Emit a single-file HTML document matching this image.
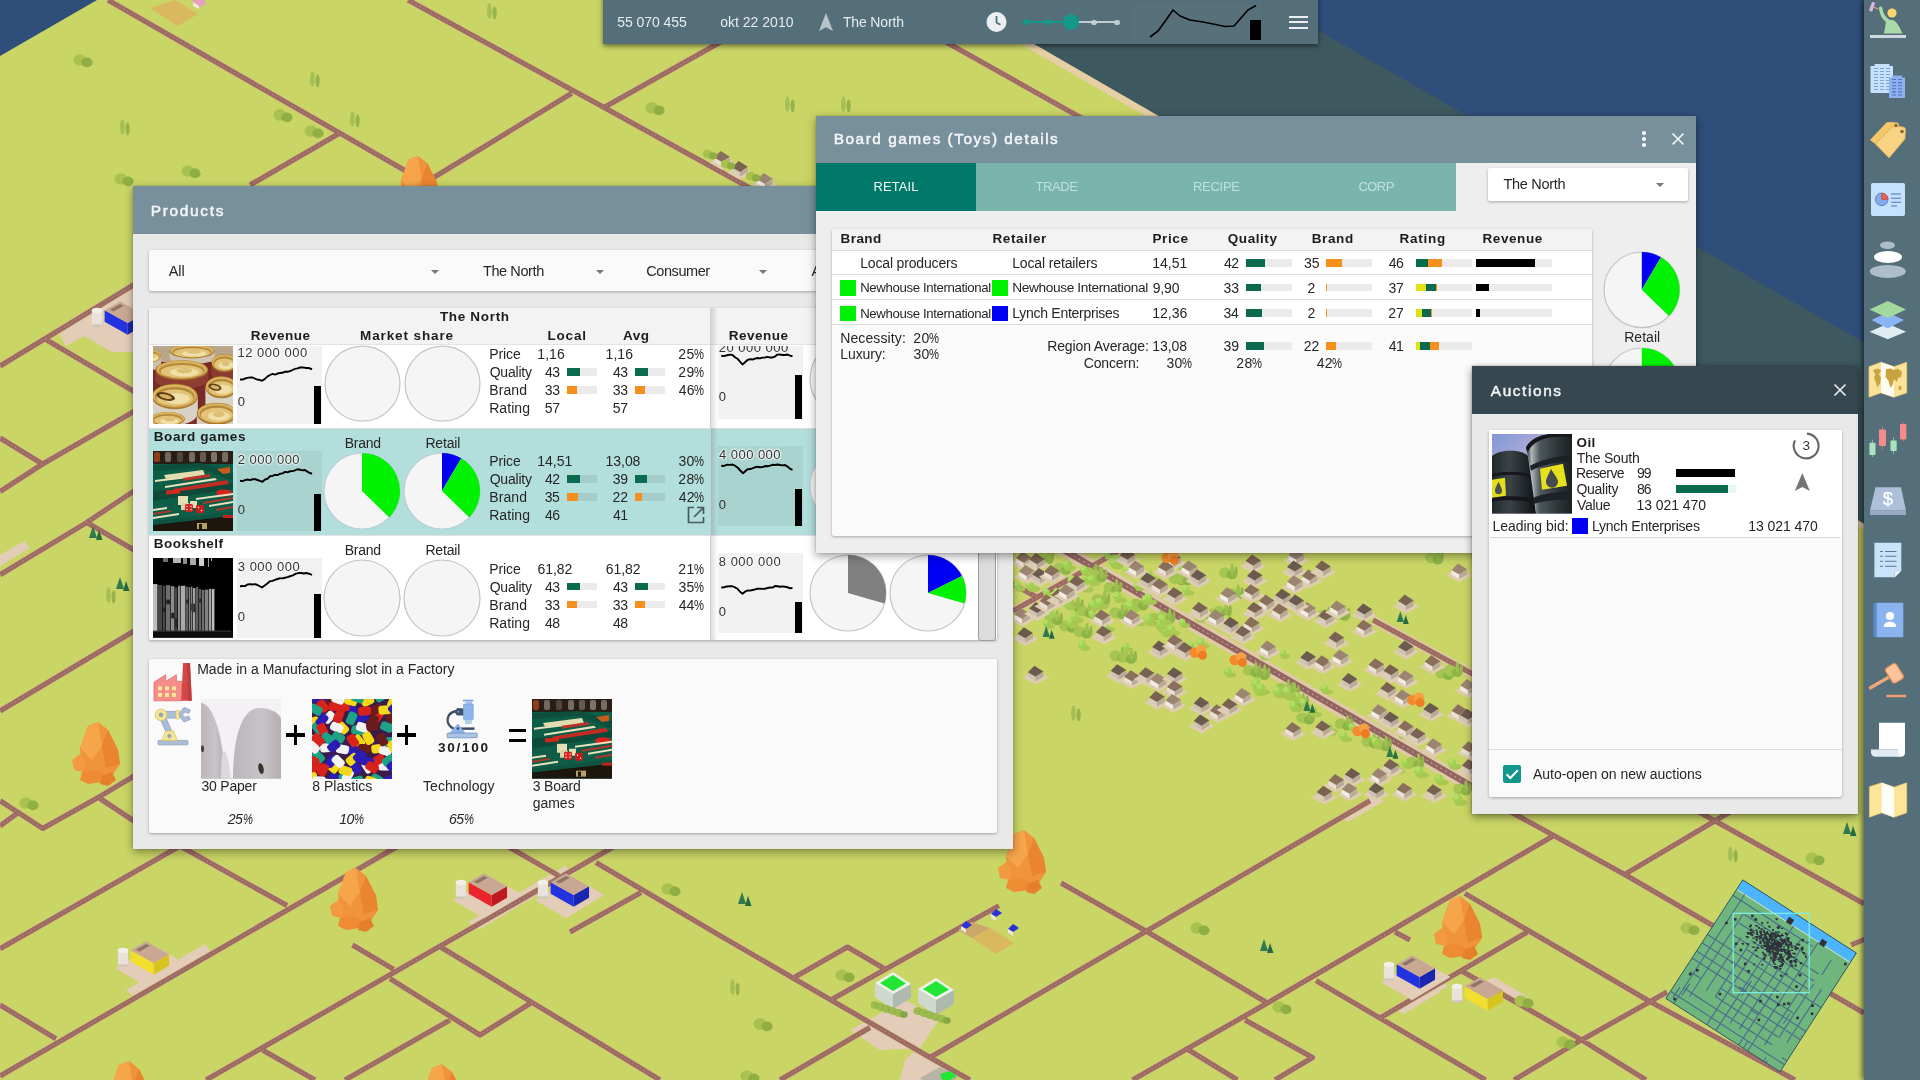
<!DOCTYPE html>
<html><head><meta charset="utf-8"><title>Products</title>
<style>
html,body{margin:0;padding:0;width:1920px;height:1080px;overflow:hidden;background:#c9d565;font-family:"Liberation Sans",sans-serif}
.r{position:absolute;display:block}
.t{position:absolute;white-space:nowrap;display:block}
.win{position:absolute;box-shadow:0 3px 9px rgba(0,0,0,.38),0 0 2px rgba(0,0,0,.2)}
.card{position:absolute;background:#fafafa;box-shadow:0 1px 3px rgba(0,0,0,.3);border-radius:2px}
</style></head><body>
<svg id="map" width="1920" height="1080" viewBox="0 0 1920 1080" style="position:absolute;left:0;top:0">
<rect width="1920" height="1080" fill="#c9d565"/>
<polygon points="0,0 97,0 0,56" fill="#304e7a"/>
<polygon points="944,0 1920,0 1920,562 1895,548" fill="#e6cfa3"/>
<polygon points="958,0 1920,0 1920,556 " fill="#3e5860"/>
<polygon points="1265,0 1920,0 1920,374.4" fill="#304e7a"/>
<polygon points="56,328 140,279 140,352 112,352 84,336 66,346" fill="#e3cdb9"/>
<polygon points="0,555 24,541 30,548 0,566" fill="#e3cdb9"/>
<polygon points="126,990 205,944 212,954 136,998" fill="#e3cdb9"/>
<polygon points="468,922 565,866 575,873 480,929" fill="#e3cdb9"/>
<polygon points="850,1030 905,1000 940,1018 920,1048 880,1050" fill="#e3cdb9"/>
<polygon points="915,1050 960,1075 950,1080 900,1080 905,1060" fill="#e3cdb9"/>
<polygon points="1392,1008 1440,980 1440,992 1404,1014" fill="#e3cdb9"/>
<polygon points="1400,1003 1440,980 1448,986 1408,1010" fill="#e3cdb9"/>
<polygon points="1484,982 1494,977 1528,997 1518,1003" fill="#e3cdb9"/>
<polygon points="1338,816 1374,795 1384,801 1348,822" fill="#e3cdb9"/>
<polyline points="1055,545 1480,791" fill="none" stroke="#dfc9a8" stroke-width="13"/>
<polyline points="1373,620 1480,678" fill="none" stroke="#dfc9a8" stroke-width="9"/>
<polyline points="1013,611 1125,547" fill="none" stroke="#dfc9a8" stroke-width="8"/>
<path d="M108 0 L425 182 L440 191 M250 185 L340 133 M408 0 L605 108 L750 188 M426.7 181.7 L571.7 93.3 M603 108 L716.7 44.3 L795 0 M870 0 L950 44.3 L1085 120 M0 366 L140 281 M45 339 L140 395 M0 438 L42.6 464 L140 408 M0 491.6 L42.6 464 M0 574.8 L85 523.6 L140 487 M85 521.5 L140 553.5 M0 711 L140 627.5 M0 800.7 L42.6 828.4 L100 796.4 L140 772.5 M100 798.5 L140 825 M0 826 L17 813.5 M0 948.7 L180 846 M0 1076 L400 845 M180 846 L287 905.6 M0 1005 L56 1038.7 M206 1080 L615 846 M352.5 945 L393.7 969.4 M390 978.7 L480 1035 L532.5 1002 M440.6 947 L660 1080 M262.5 1050 L315 1080 M345 1080 L450 1020 M507 846 L558.7 875.6 M596 862.5 L720 935.6 L930 1057.5 L970 1080 M570 932 L641 892.5 M795 977 L847.5 947 L885 969 M832.5 999 L999 905.6 M780 1080 L870 1027.5 M930 1057.5 L1370 800.7 M1061 883 L1147.5 932 L1267.5 1003 M1132.5 1080 L1267.5 1003 L1553 836 M1316 980.6 L1485.6 1080 M1188.7 1050 L1237.5 1080 M1245 1020 L1312.5 1057.5 L1275 1080 M1380 1018 L1527 932.3 M1395 932 L1410 940 M1500 806 L1625.6 875 L1711 924.5 L1864 1013 M1464.8 893.4 L1527 929.7 L1649 1001 L1780 1071.8 L1795 1080 M1462.2 971.2 L1581.5 1039.9 L1646 1080 M1514 1080 L1581.5 1039.9 L1649 1002.3 L1667 992 M1625.6 873.9 L1735 809 M1690 807 L1864 903.7 M1851 945 L1870 937 M1013 611 L1089 568 L1125 547 M1005 580 L1038.5 598 M1373 620 L1480 678" fill="none" stroke="#d8c58a" stroke-width="6.8" stroke-linejoin="round" opacity=".7"/>
<path d="M108 0 L425 182 L440 191 M250 185 L340 133 M408 0 L605 108 L750 188 M426.7 181.7 L571.7 93.3 M603 108 L716.7 44.3 L795 0 M870 0 L950 44.3 L1085 120 M0 366 L140 281 M45 339 L140 395 M0 438 L42.6 464 L140 408 M0 491.6 L42.6 464 M0 574.8 L85 523.6 L140 487 M85 521.5 L140 553.5 M0 711 L140 627.5 M0 800.7 L42.6 828.4 L100 796.4 L140 772.5 M100 798.5 L140 825 M0 826 L17 813.5 M0 948.7 L180 846 M0 1076 L400 845 M180 846 L287 905.6 M0 1005 L56 1038.7 M206 1080 L615 846 M352.5 945 L393.7 969.4 M390 978.7 L480 1035 L532.5 1002 M440.6 947 L660 1080 M262.5 1050 L315 1080 M345 1080 L450 1020 M507 846 L558.7 875.6 M596 862.5 L720 935.6 L930 1057.5 L970 1080 M570 932 L641 892.5 M795 977 L847.5 947 L885 969 M832.5 999 L999 905.6 M780 1080 L870 1027.5 M930 1057.5 L1370 800.7 M1061 883 L1147.5 932 L1267.5 1003 M1132.5 1080 L1267.5 1003 L1553 836 M1316 980.6 L1485.6 1080 M1188.7 1050 L1237.5 1080 M1245 1020 L1312.5 1057.5 L1275 1080 M1380 1018 L1527 932.3 M1395 932 L1410 940 M1500 806 L1625.6 875 L1711 924.5 L1864 1013 M1464.8 893.4 L1527 929.7 L1649 1001 L1780 1071.8 L1795 1080 M1462.2 971.2 L1581.5 1039.9 L1646 1080 M1514 1080 L1581.5 1039.9 L1649 1002.3 L1667 992 M1625.6 873.9 L1735 809 M1690 807 L1864 903.7 M1851 945 L1870 937 M1013 611 L1089 568 L1125 547 M1005 580 L1038.5 598 M1373 620 L1480 678" fill="none" stroke="#9e6b62" stroke-width="5.1" stroke-linejoin="round"/>
<path d="M108 0 L425 182 L440 191 M250 185 L340 133 M408 0 L605 108 L750 188 M426.7 181.7 L571.7 93.3 M603 108 L716.7 44.3 L795 0 M870 0 L950 44.3 L1085 120 M0 366 L140 281 M45 339 L140 395 M0 438 L42.6 464 L140 408 M0 491.6 L42.6 464 M0 574.8 L85 523.6 L140 487 M85 521.5 L140 553.5 M0 711 L140 627.5 M0 800.7 L42.6 828.4 L100 796.4 L140 772.5 M100 798.5 L140 825 M0 826 L17 813.5 M0 948.7 L180 846 M0 1076 L400 845 M180 846 L287 905.6 M0 1005 L56 1038.7 M206 1080 L615 846 M352.5 945 L393.7 969.4 M390 978.7 L480 1035 L532.5 1002 M440.6 947 L660 1080 M262.5 1050 L315 1080 M345 1080 L450 1020 M507 846 L558.7 875.6 M596 862.5 L720 935.6 L930 1057.5 L970 1080 M570 932 L641 892.5 M795 977 L847.5 947 L885 969 M832.5 999 L999 905.6 M780 1080 L870 1027.5 M930 1057.5 L1370 800.7 M1061 883 L1147.5 932 L1267.5 1003 M1132.5 1080 L1267.5 1003 L1553 836 M1316 980.6 L1485.6 1080 M1188.7 1050 L1237.5 1080 M1245 1020 L1312.5 1057.5 L1275 1080 M1380 1018 L1527 932.3 M1395 932 L1410 940 M1500 806 L1625.6 875 L1711 924.5 L1864 1013 M1464.8 893.4 L1527 929.7 L1649 1001 L1780 1071.8 L1795 1080 M1462.2 971.2 L1581.5 1039.9 L1646 1080 M1514 1080 L1581.5 1039.9 L1649 1002.3 L1667 992 M1625.6 873.9 L1735 809 M1690 807 L1864 903.7 M1851 945 L1870 937 M1013 611 L1089 568 L1125 547 M1005 580 L1038.5 598 M1373 620 L1480 678" fill="none" stroke="#c9a59c" stroke-width="0.8" stroke-dasharray="1.2 3.2" opacity=".8"/>
<path d="M1055 545 L1480 791" fill="none" stroke="#936460" stroke-width="6.2"/>
<path d="M1055 545 L1480 791" fill="none" stroke="#e6d6cf" stroke-width="0.8" stroke-dasharray="1.5 4"/>
<polygon points="88,726 98,722 108,730 118,750 120,764 112,776 94,780 82,770 80,748" fill="#f0933a"/><polygon points="88,726 98,722 102,746 92,760 80,748" fill="#f7a54b"/><polygon points="102,746 108,730 118,750 120,764 106,768" fill="#e9842f"/><polygon points="72,760 80,754 86,762 84,772 74,770" fill="#f3993f"/><polygon points="82,772 94,770 104,774 102,782 88,784 80,780" fill="#ee8b33"/><polygon points="102,776 112,772 116,780 108,786 100,784" fill="#e57f2b"/>
<polygon points="408.4,159.5 417.9,155.7 427.4,163.3 436.9,182.3 438.8,195.6 431.2,207 414.1,210.8 402.7,201.3 400.8,180.4" fill="#f0933a"/><polygon points="408.4,159.5 417.9,155.7 421.7,178.5 412.2,191.8 400.8,180.4" fill="#f7a54b"/><polygon points="421.7,178.5 427.4,163.3 436.9,182.3 438.8,195.6 425.5,199.4" fill="#e9842f"/><polygon points="393.2,191.8 400.8,186.1 406.5,193.7 404.6,203.2 395.1,201.3" fill="#f3993f"/><polygon points="402.7,203.2 414.1,201.3 423.6,205.1 421.7,212.7 408.4,214.6 400.8,210.8" fill="#ee8b33"/><polygon points="421.7,207 431.2,203.2 435,210.8 427.4,216.5 419.8,214.6" fill="#e57f2b"/>
<polygon points="346,872 356,868 366,876 376,896 378,910 370,922 352,926 340,916 338,894" fill="#f0933a"/><polygon points="346,872 356,868 360,892 350,906 338,894" fill="#f7a54b"/><polygon points="360,892 366,876 376,896 378,910 364,914" fill="#e9842f"/><polygon points="330,906 338,900 344,908 342,918 332,916" fill="#f3993f"/><polygon points="340,918 352,916 362,920 360,928 346,930 338,926" fill="#ee8b33"/><polygon points="360,922 370,918 374,926 366,932 358,930" fill="#e57f2b"/>
<polygon points="119,1065 129,1061 139,1069 149,1089 151,1103 143,1115 125,1119 113,1109 111,1087" fill="#f0933a"/><polygon points="119,1065 129,1061 133,1085 123,1099 111,1087" fill="#f7a54b"/><polygon points="133,1085 139,1069 149,1089 151,1103 137,1107" fill="#e9842f"/><polygon points="103,1099 111,1093 117,1101 115,1111 105,1109" fill="#f3993f"/><polygon points="113,1111 125,1109 135,1113 133,1121 119,1123 111,1119" fill="#ee8b33"/><polygon points="133,1115 143,1111 147,1119 139,1125 131,1123" fill="#e57f2b"/>
<polygon points="432,1068 442,1064 452,1072 462,1092 464,1106 456,1118 438,1122 426,1112 424,1090" fill="#f0933a"/><polygon points="432,1068 442,1064 446,1088 436,1102 424,1090" fill="#f7a54b"/><polygon points="446,1088 452,1072 462,1092 464,1106 450,1110" fill="#e9842f"/><polygon points="416,1102 424,1096 430,1104 428,1114 418,1112" fill="#f3993f"/><polygon points="426,1114 438,1112 448,1116 446,1124 432,1126 424,1122" fill="#ee8b33"/><polygon points="446,1118 456,1114 460,1122 452,1128 444,1126" fill="#e57f2b"/>
<polygon points="1014,834 1024,830 1034,838 1044,858 1046,872 1038,884 1020,888 1008,878 1006,856" fill="#f0933a"/><polygon points="1014,834 1024,830 1028,854 1018,868 1006,856" fill="#f7a54b"/><polygon points="1028,854 1034,838 1044,858 1046,872 1032,876" fill="#e9842f"/><polygon points="998,868 1006,862 1012,870 1010,880 1000,878" fill="#f3993f"/><polygon points="1008,880 1020,878 1030,882 1028,890 1014,892 1006,888" fill="#ee8b33"/><polygon points="1028,884 1038,880 1042,888 1034,894 1026,892" fill="#e57f2b"/>
<polygon points="1450,900 1460,896 1470,904 1480,924 1482,938 1474,950 1456,954 1444,944 1442,922" fill="#f0933a"/><polygon points="1450,900 1460,896 1464,920 1454,934 1442,922" fill="#f7a54b"/><polygon points="1464,920 1470,904 1480,924 1482,938 1468,942" fill="#e9842f"/><polygon points="1434,934 1442,928 1448,936 1446,946 1436,944" fill="#f3993f"/><polygon points="1444,946 1456,944 1466,948 1464,956 1450,958 1442,954" fill="#ee8b33"/><polygon points="1464,950 1474,946 1478,954 1470,960 1462,958" fill="#e57f2b"/>
<polygon points="1904.8,931 1913.8,927.4 1922.8,934.6 1931.8,952.6 1933.6,965.2 1926.4,976 1910.2,979.6 1899.4,970.6 1897.6,950.8" fill="#f0933a"/><polygon points="1904.8,931 1913.8,927.4 1917.4,949 1908.4,961.6 1897.6,950.8" fill="#f7a54b"/><polygon points="1917.4,949 1922.8,934.6 1931.8,952.6 1933.6,965.2 1921,968.8" fill="#e9842f"/><polygon points="1890.4,961.6 1897.6,956.2 1903,963.4 1901.2,972.4 1892.2,970.6" fill="#f3993f"/><polygon points="1899.4,972.4 1910.2,970.6 1919.2,974.2 1917.4,981.4 1904.8,983.2 1897.6,979.6" fill="#ee8b33"/><polygon points="1917.4,976 1926.4,972.4 1930,979.6 1922.8,985 1915.6,983.2" fill="#e57f2b"/>
<ellipse cx="25.8" cy="803" rx="6.4" ry="5.8" fill="#a9c14f"/><ellipse cx="33" cy="805.4" rx="5.6" ry="4.8" fill="#8fae44"/>
<ellipse cx="79.8" cy="60" rx="6.4" ry="5.8" fill="#a9c14f"/><ellipse cx="87" cy="62.4" rx="5.6" ry="4.8" fill="#8fae44"/>
<ellipse cx="120.8" cy="179" rx="6.4" ry="5.8" fill="#a9c14f"/><ellipse cx="128" cy="181.4" rx="5.6" ry="4.8" fill="#8fae44"/>
<ellipse cx="187.8" cy="171" rx="6.4" ry="5.8" fill="#a9c14f"/><ellipse cx="195" cy="173.4" rx="5.6" ry="4.8" fill="#8fae44"/>
<ellipse cx="279.8" cy="115" rx="6.4" ry="5.8" fill="#a9c14f"/><ellipse cx="287" cy="117.4" rx="5.6" ry="4.8" fill="#8fae44"/>
<ellipse cx="310.8" cy="131" rx="6.4" ry="5.8" fill="#a9c14f"/><ellipse cx="318" cy="133.4" rx="5.6" ry="4.8" fill="#8fae44"/>
<ellipse cx="651.8" cy="108" rx="6.4" ry="5.8" fill="#a9c14f"/><ellipse cx="659" cy="110.4" rx="5.6" ry="4.8" fill="#8fae44"/>
<ellipse cx="667.8" cy="889" rx="6.4" ry="5.8" fill="#a9c14f"/><ellipse cx="675" cy="891.4" rx="5.6" ry="4.8" fill="#8fae44"/>
<ellipse cx="841.8" cy="975" rx="6.4" ry="5.8" fill="#a9c14f"/><ellipse cx="849" cy="977.4" rx="5.6" ry="4.8" fill="#8fae44"/>
<ellipse cx="759.8" cy="1024" rx="6.4" ry="5.8" fill="#a9c14f"/><ellipse cx="767" cy="1026.4" rx="5.6" ry="4.8" fill="#8fae44"/>
<ellipse cx="746.8" cy="1076" rx="6.4" ry="5.8" fill="#a9c14f"/><ellipse cx="754" cy="1078.4" rx="5.6" ry="4.8" fill="#8fae44"/>
<ellipse cx="1196.8" cy="928" rx="6.4" ry="5.8" fill="#a9c14f"/><ellipse cx="1204" cy="930.4" rx="5.6" ry="4.8" fill="#8fae44"/>
<ellipse cx="1278.8" cy="1007" rx="6.4" ry="5.8" fill="#a9c14f"/><ellipse cx="1286" cy="1009.4" rx="5.6" ry="4.8" fill="#8fae44"/>
<ellipse cx="1520.8" cy="1001" rx="6.4" ry="5.8" fill="#a9c14f"/><ellipse cx="1528" cy="1003.4" rx="5.6" ry="4.8" fill="#8fae44"/>
<ellipse cx="1562.8" cy="1042" rx="6.4" ry="5.8" fill="#a9c14f"/><ellipse cx="1570" cy="1044.4" rx="5.6" ry="4.8" fill="#8fae44"/>
<ellipse cx="1686.8" cy="928" rx="6.4" ry="5.8" fill="#a9c14f"/><ellipse cx="1694" cy="930.4" rx="5.6" ry="4.8" fill="#8fae44"/>
<ellipse cx="1811.8" cy="858" rx="6.4" ry="5.8" fill="#a9c14f"/><ellipse cx="1819" cy="860.4" rx="5.6" ry="4.8" fill="#8fae44"/>
<ellipse cx="122.4" cy="127" rx="2.3" ry="7.8" fill="#a4bf55"/><ellipse cx="127.6" cy="129" rx="2.1" ry="6.5" fill="#96b34c"/>
<ellipse cx="312.4" cy="79" rx="2.3" ry="7.8" fill="#a4bf55"/><ellipse cx="317.6" cy="81" rx="2.1" ry="6.5" fill="#96b34c"/>
<ellipse cx="352.4" cy="119" rx="2.3" ry="7.8" fill="#a4bf55"/><ellipse cx="357.6" cy="121" rx="2.1" ry="6.5" fill="#96b34c"/>
<ellipse cx="489.4" cy="11" rx="2.3" ry="7.8" fill="#a4bf55"/><ellipse cx="494.6" cy="13" rx="2.1" ry="6.5" fill="#96b34c"/>
<ellipse cx="787.4" cy="104" rx="2.3" ry="7.8" fill="#a4bf55"/><ellipse cx="792.6" cy="106" rx="2.1" ry="6.5" fill="#96b34c"/>
<ellipse cx="843.4" cy="104" rx="2.3" ry="7.8" fill="#a4bf55"/><ellipse cx="848.6" cy="106" rx="2.1" ry="6.5" fill="#96b34c"/>
<ellipse cx="732.4" cy="987" rx="2.3" ry="7.8" fill="#a4bf55"/><ellipse cx="737.6" cy="989" rx="2.1" ry="6.5" fill="#96b34c"/>
<ellipse cx="108.4" cy="595" rx="2.3" ry="7.8" fill="#a4bf55"/><ellipse cx="113.6" cy="597" rx="2.1" ry="6.5" fill="#96b34c"/>
<ellipse cx="1730.4" cy="854" rx="2.3" ry="7.8" fill="#a4bf55"/><ellipse cx="1735.6" cy="856" rx="2.1" ry="6.5" fill="#96b34c"/>
<ellipse cx="1073.4" cy="713" rx="2.3" ry="7.8" fill="#a4bf55"/><ellipse cx="1078.6" cy="715" rx="2.1" ry="6.5" fill="#96b34c"/>
<polygon points="93,526 89,538 97,538" fill="#2f7a4f"/><polygon points="99,530 96,540 102.5,540" fill="#266a44"/>
<polygon points="120,577 116,589 124,589" fill="#2f7a4f"/><polygon points="126,581 123,591 129.5,591" fill="#266a44"/>
<polygon points="742,892 738,904 746,904" fill="#2f7a4f"/><polygon points="748,896 745,906 751.5,906" fill="#266a44"/>
<polygon points="1264,939 1260,951 1268,951" fill="#2f7a4f"/><polygon points="1270,943 1267,953 1273.5,953" fill="#266a44"/>
<polygon points="1847,822 1843,834 1851,834" fill="#2f7a4f"/><polygon points="1853,826 1850,836 1856.5,836" fill="#266a44"/>
<polygon points="150,8 175,0 198,14 178,26" fill="#d9b860"/>
<polygon points="192,0 204,0 206,4 198,8" fill="#e7a0c0"/><polygon points="193,2 199,6 199,9 193,6" fill="#f3e9dc"/>
<polygon points="972,938 990,928 1014,943 996,954" fill="#d9b860"/>
<polygon points="958,930 972,922 990,928 972,938" fill="#c9a86a"/>
<polygon points="961,926 966,921 972,925 966,929" fill="#2a32d6"/><polygon points="961,926 966,929 966,933 961,930" fill="#efe6da"/>
<polygon points="991,914 996,909 1002,913 996,917" fill="#2a32d6"/><polygon points="991,914 996,917 996,921 991,918" fill="#efe6da"/>
<polygon points="1008,929 1013,924 1019,928 1013,932" fill="#2a32d6"/><polygon points="1008,929 1013,932 1013,936 1008,933" fill="#efe6da"/>
<g transform="translate(120 318) scale(1.28) translate(-120 -318)"><ellipse cx="102" cy="323" rx="4" ry="2" fill="#cfc6bb"/><rect x="98" y="312" width="8" height="11" fill="#e8e2da"/><ellipse cx="102" cy="312" rx="4" ry="2" fill="#f3efe9"/><polygon points="108,312 126,322 126,331 108,321" fill="#2433e0"/><polygon points="126,322 138,315 138,324 126,331" fill="#1a26b0"/><polygon points="108,312 120,305 138,315 126,322" fill="#c9a893"/><polygon points="112,311.5 120,307 123,308.5 115,313" fill="#8d7568"/></g>
<g transform="translate(146 958) scale(1.28) translate(-146 -958)"><polygon points="122,966 152,948 176,962 146,980" fill="#e3cdb9"/><ellipse cx="128" cy="963" rx="4" ry="2" fill="#cfc6bb"/><rect x="124" y="952" width="8" height="11" fill="#e8e2da"/><ellipse cx="128" cy="952" rx="4" ry="2" fill="#f3efe9"/><polygon points="134,952 152,962 152,971 134,961" fill="#f2de2f"/><polygon points="152,962 164,955 164,964 152,971" fill="#d8c420"/><polygon points="134,952 146,945 164,955 152,962" fill="#c9a893"/><polygon points="138,951.5 146,947 149,948.5 141,953" fill="#8d7568"/></g>
<g transform="translate(484 890) scale(1.28) translate(-484 -890)"><polygon points="460,898 490,880 514,894 484,912" fill="#e3cdb9"/><ellipse cx="466" cy="895" rx="4" ry="2" fill="#cfc6bb"/><rect x="462" y="884" width="8" height="11" fill="#e8e2da"/><ellipse cx="466" cy="884" rx="4" ry="2" fill="#f3efe9"/><polygon points="472,884 490,894 490,903 472,893" fill="#e8262c"/><polygon points="490,894 502,887 502,896 490,903" fill="#c01a20"/><polygon points="472,884 484,877 502,887 490,894" fill="#c9a893"/><polygon points="476,883.5 484,879 487,880.5 479,885" fill="#8d7568"/></g>
<g transform="translate(566 890) scale(1.28) translate(-566 -890)"><polygon points="542,898 572,880 596,894 566,912" fill="#e3cdb9"/><ellipse cx="548" cy="895" rx="4" ry="2" fill="#cfc6bb"/><rect x="544" y="884" width="8" height="11" fill="#e8e2da"/><ellipse cx="548" cy="884" rx="4" ry="2" fill="#f3efe9"/><polygon points="554,884 572,894 572,903 554,893" fill="#2433e0"/><polygon points="572,894 584,887 584,896 572,903" fill="#1a26b0"/><polygon points="554,884 566,877 584,887 572,894" fill="#c9a893"/><polygon points="558,883.5 566,879 569,880.5 561,885" fill="#8d7568"/></g>
<g transform="translate(1412 972) scale(1.28) translate(-1412 -972)"><polygon points="1388,980 1418,962 1442,976 1412,994" fill="#e3cdb9"/><ellipse cx="1394" cy="977" rx="4" ry="2" fill="#cfc6bb"/><rect x="1390" y="966" width="8" height="11" fill="#e8e2da"/><ellipse cx="1394" cy="966" rx="4" ry="2" fill="#f3efe9"/><polygon points="1400,966 1418,976 1418,985 1400,975" fill="#2433e0"/><polygon points="1418,976 1430,969 1430,978 1418,985" fill="#1a26b0"/><polygon points="1400,966 1412,959 1430,969 1418,976" fill="#c9a893"/><polygon points="1404,965.5 1412,961 1415,962.5 1407,967" fill="#8d7568"/></g>
<g transform="translate(1480 994) scale(1.28) translate(-1480 -994)"><ellipse cx="1462" cy="999" rx="4" ry="2" fill="#cfc6bb"/><rect x="1458" y="988" width="8" height="11" fill="#e8e2da"/><ellipse cx="1462" cy="988" rx="4" ry="2" fill="#f3efe9"/><polygon points="1468,988 1486,998 1486,1007 1468,997" fill="#f2de2f"/><polygon points="1486,998 1498,991 1498,1000 1486,1007" fill="#d8c420"/><polygon points="1468,988 1480,981 1498,991 1486,998" fill="#c9a893"/><polygon points="1472,987.5 1480,983 1483,984.5 1475,989" fill="#8d7568"/></g>
<polygon points="875,983 893,994 893,1009 875,997" fill="#cfd8cf"/>
<polygon points="893,994 911,984 911,998 893,1009" fill="#aeb9b0"/>
<polygon points="875,983 893,972 911,984 893,994" fill="#eef2ec"/>
<polygon points="880,983 893,975 906,983.5 893,991" fill="#22e534"/>
<ellipse cx="874.8" cy="1005" rx="4.4" ry="4" fill="#9dbb4f"/><ellipse cx="879.8" cy="1006.6" rx="3.9" ry="3.3" fill="#86a643"/>
<ellipse cx="880.8" cy="1007" rx="4.4" ry="4" fill="#9dbb4f"/><ellipse cx="885.8" cy="1008.6" rx="3.9" ry="3.3" fill="#86a643"/>
<ellipse cx="886.8" cy="1009" rx="4.4" ry="4" fill="#9dbb4f"/><ellipse cx="891.8" cy="1010.6" rx="3.9" ry="3.3" fill="#86a643"/>
<ellipse cx="892.8" cy="1011" rx="4.4" ry="4" fill="#9dbb4f"/><ellipse cx="897.8" cy="1012.6" rx="3.9" ry="3.3" fill="#86a643"/>
<ellipse cx="898.8" cy="1013" rx="4.4" ry="4" fill="#9dbb4f"/><ellipse cx="903.8" cy="1014.6" rx="3.9" ry="3.3" fill="#86a643"/>
<polygon points="918,989 936,1000 936,1015 918,1003" fill="#cfd8cf"/>
<polygon points="936,1000 954,990 954,1004 936,1015" fill="#aeb9b0"/>
<polygon points="918,989 936,978 954,990 936,1000" fill="#eef2ec"/>
<polygon points="923,989 936,981 949,989.5 936,997" fill="#22e534"/>
<ellipse cx="917.8" cy="1011" rx="4.4" ry="4" fill="#9dbb4f"/><ellipse cx="922.8" cy="1012.6" rx="3.9" ry="3.3" fill="#86a643"/>
<ellipse cx="923.8" cy="1013" rx="4.4" ry="4" fill="#9dbb4f"/><ellipse cx="928.8" cy="1014.6" rx="3.9" ry="3.3" fill="#86a643"/>
<ellipse cx="929.8" cy="1015" rx="4.4" ry="4" fill="#9dbb4f"/><ellipse cx="934.8" cy="1016.6" rx="3.9" ry="3.3" fill="#86a643"/>
<ellipse cx="935.8" cy="1017" rx="4.4" ry="4" fill="#9dbb4f"/><ellipse cx="940.8" cy="1018.6" rx="3.9" ry="3.3" fill="#86a643"/>
<ellipse cx="941.8" cy="1019" rx="4.4" ry="4" fill="#9dbb4f"/><ellipse cx="946.8" cy="1020.6" rx="3.9" ry="3.3" fill="#86a643"/>
<polygon points="920,1078 940,1067 958,1076 955,1080 922,1080" fill="#b9b3a6"/><polygon points="940,1074 950,1071 957,1076 950,1080 942,1080" fill="#22e534"/>
<ellipse cx="1071.1" cy="605.2" rx="6" ry="5.4" fill="#a4c552"/><ellipse cx="1077.8" cy="607.4" rx="5.2" ry="4.5" fill="#8db446"/>
<ellipse cx="1078.1" cy="602.2" rx="1.8" ry="6" fill="#9cc04f"/><ellipse cx="1082.1" cy="604.2" rx="1.6" ry="5" fill="#96b34c"/>
<ellipse cx="1431.1" cy="557.8" rx="6" ry="5.4" fill="#a4c552"/><ellipse cx="1437.8" cy="560" rx="5.2" ry="4.5" fill="#8db446"/>
<ellipse cx="1438.1" cy="554.8" rx="1.8" ry="6" fill="#9cc04f"/><ellipse cx="1442.1" cy="556.8" rx="1.6" ry="5" fill="#96b34c"/>
<ellipse cx="1154" cy="618.5" rx="6" ry="5.4" fill="#a4c552"/><ellipse cx="1160.8" cy="620.8" rx="5.2" ry="4.5" fill="#8db446"/>
<ellipse cx="1161" cy="615.5" rx="1.8" ry="6" fill="#9cc04f"/><ellipse cx="1165" cy="617.5" rx="1.6" ry="5" fill="#96b34c"/>
<ellipse cx="1219.2" cy="611.1" rx="6" ry="5.4" fill="#a4c552"/><ellipse cx="1226" cy="613.4" rx="5.2" ry="4.5" fill="#8db446"/>
<ellipse cx="1226.2" cy="608.1" rx="1.8" ry="6" fill="#9cc04f"/><ellipse cx="1230.2" cy="610.1" rx="1.6" ry="5" fill="#96b34c"/>
<ellipse cx="1115.5" cy="655.6" rx="6" ry="5.4" fill="#a4c552"/><ellipse cx="1122.3" cy="657.8" rx="5.2" ry="4.5" fill="#8db446"/>
<ellipse cx="1122.5" cy="652.6" rx="1.8" ry="6" fill="#9cc04f"/><ellipse cx="1126.5" cy="654.6" rx="1.6" ry="5" fill="#96b34c"/>
<ellipse cx="1115.5" cy="612.6" rx="6" ry="5.4" fill="#a4c552"/><ellipse cx="1122.3" cy="614.8" rx="5.2" ry="4.5" fill="#8db446"/>
<ellipse cx="1122.5" cy="609.6" rx="1.8" ry="6" fill="#9cc04f"/><ellipse cx="1126.5" cy="611.6" rx="1.6" ry="5" fill="#96b34c"/>
<ellipse cx="1321.4" cy="615.6" rx="6" ry="5.4" fill="#a4c552"/><ellipse cx="1328.2" cy="617.8" rx="5.2" ry="4.5" fill="#8db446"/>
<ellipse cx="1328.4" cy="612.6" rx="1.8" ry="6" fill="#9cc04f"/><ellipse cx="1332.4" cy="614.6" rx="1.6" ry="5" fill="#96b34c"/>
<ellipse cx="1257.7" cy="673.3" rx="6" ry="5.4" fill="#a4c552"/><ellipse cx="1264.5" cy="675.6" rx="5.2" ry="4.5" fill="#8db446"/>
<ellipse cx="1264.7" cy="670.3" rx="1.8" ry="6" fill="#9cc04f"/><ellipse cx="1268.7" cy="672.3" rx="1.6" ry="5" fill="#96b34c"/>
<ellipse cx="1065.1" cy="625.9" rx="6" ry="5.4" fill="#a4c552"/><ellipse cx="1071.9" cy="628.2" rx="5.2" ry="4.5" fill="#8db446"/>
<ellipse cx="1072.1" cy="622.9" rx="1.8" ry="6" fill="#9cc04f"/><ellipse cx="1076.1" cy="624.9" rx="1.6" ry="5" fill="#96b34c"/>
<ellipse cx="1136.3" cy="603.7" rx="6" ry="5.4" fill="#a4c552"/><ellipse cx="1143" cy="606" rx="5.2" ry="4.5" fill="#8db446"/>
<ellipse cx="1143.3" cy="600.7" rx="1.8" ry="6" fill="#9cc04f"/><ellipse cx="1147.3" cy="602.7" rx="1.6" ry="5" fill="#96b34c"/>
<ellipse cx="1174.8" cy="578.5" rx="6" ry="5.4" fill="#a4c552"/><ellipse cx="1181.5" cy="580.8" rx="5.2" ry="4.5" fill="#8db446"/>
<ellipse cx="1181.8" cy="575.5" rx="1.8" ry="6" fill="#9cc04f"/><ellipse cx="1185.8" cy="577.5" rx="1.6" ry="5" fill="#96b34c"/>
<ellipse cx="1041.4" cy="557.8" rx="6" ry="5.4" fill="#a4c552"/><ellipse cx="1048.2" cy="560" rx="5.2" ry="4.5" fill="#8db446"/>
<ellipse cx="1048.4" cy="554.8" rx="1.8" ry="6" fill="#9cc04f"/><ellipse cx="1052.4" cy="556.8" rx="1.6" ry="5" fill="#96b34c"/>
<ellipse cx="1411.8" cy="762.2" rx="6" ry="5.4" fill="#a4c552"/><ellipse cx="1418.6" cy="764.5" rx="5.2" ry="4.5" fill="#8db446"/>
<ellipse cx="1418.8" cy="759.2" rx="1.8" ry="6" fill="#9cc04f"/><ellipse cx="1422.8" cy="761.2" rx="1.6" ry="5" fill="#96b34c"/>
<ellipse cx="1088.9" cy="572.6" rx="6" ry="5.4" fill="#a4c552"/><ellipse cx="1095.6" cy="574.8" rx="5.2" ry="4.5" fill="#8db446"/>
<ellipse cx="1095.9" cy="569.6" rx="1.8" ry="6" fill="#9cc04f"/><ellipse cx="1099.9" cy="571.6" rx="1.6" ry="5" fill="#96b34c"/>
<ellipse cx="1225.1" cy="572.6" rx="6" ry="5.4" fill="#a4c552"/><ellipse cx="1231.9" cy="574.8" rx="5.2" ry="4.5" fill="#8db446"/>
<ellipse cx="1232.1" cy="569.6" rx="1.8" ry="6" fill="#9cc04f"/><ellipse cx="1236.1" cy="571.6" rx="1.6" ry="5" fill="#96b34c"/>
<ellipse cx="1204.4" cy="617" rx="6" ry="5.4" fill="#a4c552"/><ellipse cx="1211.2" cy="619.3" rx="5.2" ry="4.5" fill="#8db446"/>
<ellipse cx="1211.4" cy="614" rx="1.8" ry="6" fill="#9cc04f"/><ellipse cx="1215.4" cy="616" rx="1.6" ry="5" fill="#96b34c"/>
<ellipse cx="1248.9" cy="670.4" rx="6" ry="5.4" fill="#a4c552"/><ellipse cx="1255.6" cy="672.6" rx="5.2" ry="4.5" fill="#8db446"/>
<ellipse cx="1255.9" cy="667.4" rx="1.8" ry="6" fill="#9cc04f"/><ellipse cx="1259.9" cy="669.4" rx="1.6" ry="5" fill="#96b34c"/>
<ellipse cx="1337.7" cy="614.1" rx="6" ry="5.4" fill="#a4c552"/><ellipse cx="1344.5" cy="616.3" rx="5.2" ry="4.5" fill="#8db446"/>
<ellipse cx="1344.7" cy="611.1" rx="1.8" ry="6" fill="#9cc04f"/><ellipse cx="1348.7" cy="613.1" rx="1.6" ry="5" fill="#96b34c"/>
<ellipse cx="1367.4" cy="741.5" rx="6" ry="5.4" fill="#a4c552"/><ellipse cx="1374.1" cy="743.7" rx="5.2" ry="4.5" fill="#8db446"/>
<ellipse cx="1374.4" cy="738.5" rx="1.8" ry="6" fill="#9cc04f"/><ellipse cx="1378.4" cy="740.5" rx="1.6" ry="5" fill="#96b34c"/>
<ellipse cx="1296.3" cy="701.5" rx="6" ry="5.4" fill="#a4c552"/><ellipse cx="1303" cy="703.7" rx="5.2" ry="4.5" fill="#8db446"/>
<ellipse cx="1303.3" cy="698.5" rx="1.8" ry="6" fill="#9cc04f"/><ellipse cx="1307.3" cy="700.5" rx="1.6" ry="5" fill="#96b34c"/>
<ellipse cx="1180.7" cy="578.5" rx="6" ry="5.4" fill="#a4c552"/><ellipse cx="1187.5" cy="580.8" rx="5.2" ry="4.5" fill="#8db446"/>
<ellipse cx="1187.7" cy="575.5" rx="1.8" ry="6" fill="#9cc04f"/><ellipse cx="1191.7" cy="577.5" rx="1.6" ry="5" fill="#96b34c"/>
<ellipse cx="1441.4" cy="673.3" rx="6" ry="5.4" fill="#a4c552"/><ellipse cx="1448.2" cy="675.6" rx="5.2" ry="4.5" fill="#8db446"/>
<ellipse cx="1448.4" cy="670.3" rx="1.8" ry="6" fill="#9cc04f"/><ellipse cx="1452.4" cy="672.3" rx="1.6" ry="5" fill="#96b34c"/>
<ellipse cx="1050.3" cy="618.5" rx="6" ry="5.4" fill="#a4c552"/><ellipse cx="1057.1" cy="620.8" rx="5.2" ry="4.5" fill="#8db446"/>
<ellipse cx="1057.3" cy="615.5" rx="1.8" ry="6" fill="#9cc04f"/><ellipse cx="1061.3" cy="617.5" rx="1.6" ry="5" fill="#96b34c"/>
<ellipse cx="1340.7" cy="723.7" rx="6" ry="5.4" fill="#a4c552"/><ellipse cx="1347.5" cy="726" rx="5.2" ry="4.5" fill="#8db446"/>
<ellipse cx="1347.7" cy="720.7" rx="1.8" ry="6" fill="#9cc04f"/><ellipse cx="1351.7" cy="722.7" rx="1.6" ry="5" fill="#96b34c"/>
<ellipse cx="1281.4" cy="688.1" rx="6" ry="5.4" fill="#a4c552"/><ellipse cx="1288.2" cy="690.4" rx="5.2" ry="4.5" fill="#8db446"/>
<ellipse cx="1288.4" cy="685.1" rx="1.8" ry="6" fill="#9cc04f"/><ellipse cx="1292.4" cy="687.1" rx="1.6" ry="5" fill="#96b34c"/>
<ellipse cx="1162.9" cy="617" rx="6" ry="5.4" fill="#a4c552"/><ellipse cx="1169.7" cy="619.3" rx="5.2" ry="4.5" fill="#8db446"/>
<ellipse cx="1169.9" cy="614" rx="1.8" ry="6" fill="#9cc04f"/><ellipse cx="1173.9" cy="616" rx="1.6" ry="5" fill="#96b34c"/>
<ellipse cx="1094.8" cy="575.6" rx="6" ry="5.4" fill="#a4c552"/><ellipse cx="1101.5" cy="577.8" rx="5.2" ry="4.5" fill="#8db446"/>
<ellipse cx="1101.8" cy="572.6" rx="1.8" ry="6" fill="#9cc04f"/><ellipse cx="1105.8" cy="574.6" rx="1.6" ry="5" fill="#96b34c"/>
<ellipse cx="1059.2" cy="568.1" rx="6" ry="5.4" fill="#a4c552"/><ellipse cx="1066" cy="570.4" rx="5.2" ry="4.5" fill="#8db446"/>
<ellipse cx="1066.2" cy="565.1" rx="1.8" ry="6" fill="#9cc04f"/><ellipse cx="1070.2" cy="567.1" rx="1.6" ry="5" fill="#96b34c"/>
<ellipse cx="1450.3" cy="670.4" rx="6" ry="5.4" fill="#a4c552"/><ellipse cx="1457.1" cy="672.6" rx="5.2" ry="4.5" fill="#8db446"/>
<ellipse cx="1457.3" cy="667.4" rx="1.8" ry="6" fill="#9cc04f"/><ellipse cx="1461.3" cy="669.4" rx="1.6" ry="5" fill="#96b34c"/>
<ellipse cx="1124.4" cy="657" rx="6" ry="5.4" fill="#a4c552"/><ellipse cx="1131.2" cy="659.3" rx="5.2" ry="4.5" fill="#8db446"/>
<ellipse cx="1131.4" cy="654" rx="1.8" ry="6" fill="#9cc04f"/><ellipse cx="1135.4" cy="656" rx="1.6" ry="5" fill="#96b34c"/>
<ellipse cx="1379.2" cy="744.4" rx="6" ry="5.4" fill="#a4c552"/><ellipse cx="1386" cy="746.7" rx="5.2" ry="4.5" fill="#8db446"/>
<ellipse cx="1386.2" cy="741.4" rx="1.8" ry="6" fill="#9cc04f"/><ellipse cx="1390.2" cy="743.4" rx="1.6" ry="5" fill="#96b34c"/>
<ellipse cx="1459.2" cy="788.9" rx="6" ry="5.4" fill="#a4c552"/><ellipse cx="1466" cy="791.1" rx="5.2" ry="4.5" fill="#8db446"/>
<ellipse cx="1466.2" cy="785.9" rx="1.8" ry="6" fill="#9cc04f"/><ellipse cx="1470.2" cy="787.9" rx="1.6" ry="5" fill="#96b34c"/>
<ellipse cx="1287.4" cy="691.1" rx="6" ry="5.4" fill="#a4c552"/><ellipse cx="1294.1" cy="693.4" rx="5.2" ry="4.5" fill="#8db446"/>
<ellipse cx="1294.4" cy="688.1" rx="1.8" ry="6" fill="#9cc04f"/><ellipse cx="1298.4" cy="690.1" rx="1.6" ry="5" fill="#96b34c"/>
<ellipse cx="1082.9" cy="611.1" rx="6" ry="5.4" fill="#a4c552"/><ellipse cx="1089.7" cy="613.4" rx="5.2" ry="4.5" fill="#8db446"/>
<ellipse cx="1089.9" cy="608.1" rx="1.8" ry="6" fill="#9cc04f"/><ellipse cx="1093.9" cy="610.1" rx="1.6" ry="5" fill="#96b34c"/>
<ellipse cx="1097.7" cy="599.3" rx="6" ry="5.4" fill="#a4c552"/><ellipse cx="1104.5" cy="601.5" rx="5.2" ry="4.5" fill="#8db446"/>
<ellipse cx="1104.7" cy="596.3" rx="1.8" ry="6" fill="#9cc04f"/><ellipse cx="1108.7" cy="598.3" rx="1.6" ry="5" fill="#96b34c"/>
<ellipse cx="1109.6" cy="587.4" rx="6" ry="5.4" fill="#a4c552"/><ellipse cx="1116.3" cy="589.7" rx="5.2" ry="4.5" fill="#8db446"/>
<ellipse cx="1116.6" cy="584.4" rx="1.8" ry="6" fill="#9cc04f"/><ellipse cx="1120.6" cy="586.4" rx="1.6" ry="5" fill="#96b34c"/>
<ellipse cx="1302.2" cy="717.8" rx="6" ry="5.4" fill="#a4c552"/><ellipse cx="1308.9" cy="720" rx="5.2" ry="4.5" fill="#8db446"/>
<ellipse cx="1309.2" cy="714.8" rx="1.8" ry="6" fill="#9cc04f"/><ellipse cx="1313.2" cy="716.8" rx="1.6" ry="5" fill="#96b34c"/>
<ellipse cx="1080" cy="631.9" rx="6" ry="5.4" fill="#a4c552"/><ellipse cx="1086.7" cy="634.1" rx="5.2" ry="4.5" fill="#8db446"/>
<ellipse cx="1087" cy="628.9" rx="1.8" ry="6" fill="#9cc04f"/><ellipse cx="1091" cy="630.9" rx="1.6" ry="5" fill="#96b34c"/>
<ellipse cx="1231.1" cy="593.3" rx="6" ry="5.4" fill="#a4c552"/><ellipse cx="1237.8" cy="595.6" rx="5.2" ry="4.5" fill="#8db446"/>
<ellipse cx="1238.1" cy="590.3" rx="1.8" ry="6" fill="#9cc04f"/><ellipse cx="1242.1" cy="592.3" rx="1.6" ry="5" fill="#96b34c"/>
<ellipse cx="1129.5" cy="607.5" rx="5.1" ry="2.5" fill="#a9c653"/><circle cx="1126.4" cy="604" r="3.6" fill="#9fd050"/><circle cx="1125.4" cy="602.5" r="2.4" fill="#b2dc63"/>
<ellipse cx="1399.8" cy="771.1" rx="5.5" ry="2.8" fill="#a9c653"/><circle cx="1396.5" cy="767.2" r="4" fill="#9fd050"/><circle cx="1395.4" cy="765.5" r="2.7" fill="#b2dc63"/>
<ellipse cx="1285.5" cy="656.4" rx="4.5" ry="2.3" fill="#a9c653"/><circle cx="1282.8" cy="653.2" r="3.3" fill="#9fd050"/><circle cx="1281.8" cy="651.9" r="2.2" fill="#b2dc63"/>
<ellipse cx="1442.5" cy="782.5" rx="6.1" ry="3" fill="#a9c653"/><circle cx="1438.8" cy="778.3" r="4.4" fill="#9fd050"/><circle cx="1437.6" cy="776.4" r="2.9" fill="#b2dc63"/>
<ellipse cx="1175.2" cy="594.7" rx="5.4" ry="2.7" fill="#a9c653"/><circle cx="1172" cy="590.9" r="3.9" fill="#9fd050"/><circle cx="1170.9" cy="589.3" r="2.6" fill="#b2dc63"/>
<ellipse cx="1462.1" cy="803.3" rx="4.6" ry="2.3" fill="#a9c653"/><circle cx="1459.4" cy="800.1" r="3.3" fill="#9fd050"/><circle cx="1458.5" cy="798.7" r="2.2" fill="#b2dc63"/>
<ellipse cx="1193.6" cy="649.9" rx="5.8" ry="2.9" fill="#a9c653"/><circle cx="1190.2" cy="645.8" r="4.2" fill="#9fd050"/><circle cx="1189" cy="644.1" r="2.8" fill="#b2dc63"/>
<ellipse cx="1455.5" cy="766.8" rx="6.1" ry="3.1" fill="#a9c653"/><circle cx="1451.8" cy="762.5" r="4.4" fill="#9fd050"/><circle cx="1450.6" cy="760.6" r="2.9" fill="#b2dc63"/>
<ellipse cx="1130" cy="573" rx="5.6" ry="2.8" fill="#a9c653"/><circle cx="1126.7" cy="569.1" r="4" fill="#9fd050"/><circle cx="1125.6" cy="567.4" r="2.7" fill="#b2dc63"/>
<ellipse cx="1203.9" cy="646" rx="5.8" ry="2.9" fill="#a9c653"/><circle cx="1200.4" cy="641.9" r="4.2" fill="#9fd050"/><circle cx="1199.2" cy="640.2" r="2.8" fill="#b2dc63"/>
<ellipse cx="1265.5" cy="657.9" rx="4.9" ry="2.4" fill="#a9c653"/><circle cx="1262.5" cy="654.5" r="3.5" fill="#9fd050"/><circle cx="1261.5" cy="653" r="2.3" fill="#b2dc63"/>
<ellipse cx="1332.2" cy="731.2" rx="6" ry="3" fill="#a9c653"/><circle cx="1328.6" cy="727" r="4.3" fill="#9fd050"/><circle cx="1327.4" cy="725.2" r="2.9" fill="#b2dc63"/>
<ellipse cx="1300.3" cy="700.2" rx="5.6" ry="2.8" fill="#a9c653"/><circle cx="1296.9" cy="696.3" r="4" fill="#9fd050"/><circle cx="1295.8" cy="694.6" r="2.7" fill="#b2dc63"/>
<ellipse cx="1290.9" cy="697.4" rx="6.3" ry="3.2" fill="#a9c653"/><circle cx="1287" cy="692.9" r="4.6" fill="#9fd050"/><circle cx="1285.8" cy="691" r="3" fill="#b2dc63"/>
<ellipse cx="1422.6" cy="775.2" rx="6.4" ry="3.2" fill="#a9c653"/><circle cx="1418.7" cy="770.7" r="4.6" fill="#9fd050"/><circle cx="1417.4" cy="768.8" r="3.1" fill="#b2dc63"/>
<ellipse cx="1260.3" cy="693.7" rx="5.3" ry="2.6" fill="#a9c653"/><circle cx="1257.1" cy="690" r="3.8" fill="#9fd050"/><circle cx="1256.1" cy="688.4" r="2.5" fill="#b2dc63"/>
<ellipse cx="1354.8" cy="730.1" rx="4.6" ry="2.3" fill="#a9c653"/><circle cx="1352" cy="726.9" r="3.3" fill="#9fd050"/><circle cx="1351.1" cy="725.5" r="2.2" fill="#b2dc63"/>
<ellipse cx="1306.6" cy="706.6" rx="5.7" ry="2.9" fill="#a9c653"/><circle cx="1303.2" cy="702.6" r="4.1" fill="#9fd050"/><circle cx="1302" cy="700.9" r="2.7" fill="#b2dc63"/>
<ellipse cx="1290.3" cy="695.3" rx="5.8" ry="2.9" fill="#a9c653"/><circle cx="1286.8" cy="691.2" r="4.2" fill="#9fd050"/><circle cx="1285.6" cy="689.4" r="2.8" fill="#b2dc63"/>
<ellipse cx="1316.4" cy="714.6" rx="5.7" ry="2.8" fill="#a9c653"/><circle cx="1313" cy="710.6" r="4.1" fill="#9fd050"/><circle cx="1311.9" cy="708.9" r="2.7" fill="#b2dc63"/>
<ellipse cx="1201.3" cy="619.6" rx="6.3" ry="3.2" fill="#a9c653"/><circle cx="1197.5" cy="615.2" r="4.6" fill="#9fd050"/><circle cx="1196.2" cy="613.3" r="3" fill="#b2dc63"/>
<ellipse cx="1134" cy="609.6" rx="5.9" ry="2.9" fill="#a9c653"/><circle cx="1130.4" cy="605.5" r="4.2" fill="#9fd050"/><circle cx="1129.3" cy="603.8" r="2.8" fill="#b2dc63"/>
<ellipse cx="1330.9" cy="733.9" rx="5.3" ry="2.7" fill="#a9c653"/><circle cx="1327.7" cy="730.2" r="3.8" fill="#9fd050"/><circle cx="1326.7" cy="728.6" r="2.6" fill="#b2dc63"/>
<ellipse cx="1460.9" cy="802.7" rx="6.3" ry="3.1" fill="#a9c653"/><circle cx="1457.1" cy="798.3" r="4.5" fill="#9fd050"/><circle cx="1455.8" cy="796.4" r="3" fill="#b2dc63"/>
<ellipse cx="1259.5" cy="687.7" rx="6.4" ry="3.2" fill="#a9c653"/><circle cx="1255.7" cy="683.2" r="4.6" fill="#9fd050"/><circle cx="1254.4" cy="681.3" r="3.1" fill="#b2dc63"/>
<ellipse cx="1165.7" cy="622.5" rx="6.1" ry="3.1" fill="#a9c653"/><circle cx="1162" cy="618.2" r="4.4" fill="#9fd050"/><circle cx="1160.8" cy="616.4" r="2.9" fill="#b2dc63"/>
<ellipse cx="1377.9" cy="744.7" rx="5.1" ry="2.5" fill="#a9c653"/><circle cx="1374.9" cy="741.1" r="3.7" fill="#9fd050"/><circle cx="1373.9" cy="739.6" r="2.4" fill="#b2dc63"/>
<ellipse cx="1408.1" cy="766.4" rx="5.3" ry="2.7" fill="#a9c653"/><circle cx="1404.9" cy="762.7" r="3.8" fill="#9fd050"/><circle cx="1403.9" cy="761.1" r="2.6" fill="#b2dc63"/>
<ellipse cx="1152.1" cy="578.3" rx="5.8" ry="2.9" fill="#a9c653"/><circle cx="1148.7" cy="574.2" r="4.2" fill="#9fd050"/><circle cx="1147.5" cy="572.5" r="2.8" fill="#b2dc63"/>
<ellipse cx="1141" cy="574" rx="5.5" ry="2.7" fill="#a9c653"/><circle cx="1137.7" cy="570.1" r="3.9" fill="#9fd050"/><circle cx="1136.6" cy="568.5" r="2.6" fill="#b2dc63"/>
<ellipse cx="1164.2" cy="629.9" rx="6" ry="3" fill="#a9c653"/><circle cx="1160.7" cy="625.7" r="4.3" fill="#9fd050"/><circle cx="1159.5" cy="624" r="2.9" fill="#b2dc63"/>
<ellipse cx="1230.8" cy="623.5" rx="5.7" ry="2.9" fill="#a9c653"/><circle cx="1227.4" cy="619.5" r="4.1" fill="#9fd050"/><circle cx="1226.2" cy="617.8" r="2.7" fill="#b2dc63"/>
<ellipse cx="1230.8" cy="675.1" rx="5.5" ry="2.7" fill="#a9c653"/><circle cx="1227.5" cy="671.3" r="3.9" fill="#9fd050"/><circle cx="1226.4" cy="669.6" r="2.6" fill="#b2dc63"/>
<ellipse cx="1120.7" cy="600.2" rx="6" ry="3" fill="#a9c653"/><circle cx="1117.1" cy="596" r="4.3" fill="#9fd050"/><circle cx="1115.9" cy="594.2" r="2.9" fill="#b2dc63"/>
<ellipse cx="1070.1" cy="568.2" rx="5.9" ry="3" fill="#a9c653"/><circle cx="1066.6" cy="564.1" r="4.3" fill="#9fd050"/><circle cx="1065.4" cy="562.3" r="2.8" fill="#b2dc63"/>
<ellipse cx="1168.3" cy="634.5" rx="6.2" ry="3.1" fill="#a9c653"/><circle cx="1164.6" cy="630.2" r="4.5" fill="#9fd050"/><circle cx="1163.3" cy="628.3" r="3" fill="#b2dc63"/>
<ellipse cx="1296.8" cy="709.4" rx="6" ry="3" fill="#a9c653"/><circle cx="1293.2" cy="705.2" r="4.3" fill="#9fd050"/><circle cx="1292" cy="703.4" r="2.9" fill="#b2dc63"/>
<ellipse cx="1403.7" cy="736.7" rx="4.7" ry="2.3" fill="#a9c653"/><circle cx="1400.9" cy="733.4" r="3.4" fill="#9fd050"/><circle cx="1400" cy="732" r="2.3" fill="#b2dc63"/>
<ellipse cx="1119.5" cy="563.6" rx="6.1" ry="3" fill="#a9c653"/><circle cx="1115.8" cy="559.4" r="4.4" fill="#9fd050"/><circle cx="1114.6" cy="557.5" r="2.9" fill="#b2dc63"/>
<ellipse cx="1109.9" cy="557.4" rx="4.8" ry="2.4" fill="#a9c653"/><circle cx="1107" cy="554.1" r="3.4" fill="#9fd050"/><circle cx="1106.1" cy="552.6" r="2.3" fill="#b2dc63"/>
<ellipse cx="1281" cy="695.2" rx="6.3" ry="3.1" fill="#a9c653"/><circle cx="1277.2" cy="690.8" r="4.5" fill="#9fd050"/><circle cx="1276" cy="688.9" r="3" fill="#b2dc63"/>
<ellipse cx="1327.6" cy="692" rx="5.3" ry="2.6" fill="#a9c653"/><circle cx="1324.4" cy="688.3" r="3.8" fill="#9fd050"/><circle cx="1323.4" cy="686.7" r="2.5" fill="#b2dc63"/>
<ellipse cx="1346.6" cy="739.5" rx="5.7" ry="2.9" fill="#a9c653"/><circle cx="1343.2" cy="735.5" r="4.1" fill="#9fd050"/><circle cx="1342" cy="733.8" r="2.7" fill="#b2dc63"/>
<ellipse cx="1264" cy="692.2" rx="6.1" ry="3" fill="#a9c653"/><circle cx="1260.4" cy="687.9" r="4.4" fill="#9fd050"/><circle cx="1259.2" cy="686.1" r="2.9" fill="#b2dc63"/>
<ellipse cx="1049.5" cy="626.4" rx="5" ry="2.5" fill="#a9c653"/><circle cx="1046.5" cy="622.9" r="3.6" fill="#9fd050"/><circle cx="1045.5" cy="621.4" r="2.4" fill="#b2dc63"/>
<ellipse cx="1140" cy="588.7" rx="4.6" ry="2.3" fill="#a9c653"/><circle cx="1137.2" cy="585.5" r="3.3" fill="#9fd050"/><circle cx="1136.3" cy="584.1" r="2.2" fill="#b2dc63"/>
<ellipse cx="1087.4" cy="589.5" rx="6.3" ry="3.2" fill="#a9c653"/><circle cx="1083.7" cy="585.1" r="4.5" fill="#9fd050"/><circle cx="1082.4" cy="583.2" r="3" fill="#b2dc63"/>
<ellipse cx="1070.7" cy="607.2" rx="5.6" ry="2.8" fill="#a9c653"/><circle cx="1067.3" cy="603.3" r="4" fill="#9fd050"/><circle cx="1066.2" cy="601.6" r="2.7" fill="#b2dc63"/>
<ellipse cx="1184.4" cy="569.3" rx="5.7" ry="2.9" fill="#a9c653"/><circle cx="1181" cy="565.3" r="4.1" fill="#9fd050"/><circle cx="1179.8" cy="563.6" r="2.7" fill="#b2dc63"/>
<ellipse cx="1108.3" cy="629.6" rx="6.4" ry="3.2" fill="#a9c653"/><circle cx="1104.4" cy="625" r="4.6" fill="#9fd050"/><circle cx="1103.1" cy="623.1" r="3.1" fill="#b2dc63"/>
<ellipse cx="1073.3" cy="625.6" rx="5.6" ry="2.8" fill="#a9c653"/><circle cx="1070" cy="621.7" r="4" fill="#9fd050"/><circle cx="1068.9" cy="620.1" r="2.7" fill="#b2dc63"/>
<ellipse cx="1117.2" cy="566.3" rx="6.1" ry="3.1" fill="#a9c653"/><circle cx="1113.6" cy="562" r="4.4" fill="#9fd050"/><circle cx="1112.3" cy="560.2" r="2.9" fill="#b2dc63"/>
<ellipse cx="1189.1" cy="593" rx="5.1" ry="2.6" fill="#a9c653"/><circle cx="1186" cy="589.4" r="3.7" fill="#9fd050"/><circle cx="1184.9" cy="587.9" r="2.5" fill="#b2dc63"/>
<ellipse cx="1191.6" cy="569.4" rx="4.7" ry="2.3" fill="#a9c653"/><circle cx="1188.8" cy="566.1" r="3.3" fill="#9fd050"/><circle cx="1187.9" cy="564.7" r="2.2" fill="#b2dc63"/>
<ellipse cx="1151.7" cy="602.1" rx="5.7" ry="2.9" fill="#a9c653"/><circle cx="1148.2" cy="598.1" r="4.1" fill="#9fd050"/><circle cx="1147.1" cy="596.4" r="2.8" fill="#b2dc63"/>
<ellipse cx="1096.2" cy="608.3" rx="5.3" ry="2.6" fill="#a9c653"/><circle cx="1093" cy="604.6" r="3.8" fill="#9fd050"/><circle cx="1092" cy="603.1" r="2.5" fill="#b2dc63"/>
<ellipse cx="1088.6" cy="580.4" rx="4.6" ry="2.3" fill="#a9c653"/><circle cx="1085.9" cy="577.2" r="3.3" fill="#9fd050"/><circle cx="1084.9" cy="575.8" r="2.2" fill="#b2dc63"/>
<ellipse cx="1095" cy="583.4" rx="5.9" ry="3" fill="#a9c653"/><circle cx="1091.5" cy="579.2" r="4.3" fill="#9fd050"/><circle cx="1090.3" cy="577.5" r="2.8" fill="#b2dc63"/>
<ellipse cx="1161.5" cy="627.8" rx="5.4" ry="2.7" fill="#a9c653"/><circle cx="1158.2" cy="624" r="3.9" fill="#9fd050"/><circle cx="1157.1" cy="622.4" r="2.6" fill="#b2dc63"/>
<ellipse cx="1060.4" cy="596.1" rx="5.5" ry="2.7" fill="#a9c653"/><circle cx="1057.1" cy="592.2" r="3.9" fill="#9fd050"/><circle cx="1056" cy="590.6" r="2.6" fill="#b2dc63"/>
<ellipse cx="1128.7" cy="649.8" rx="4.7" ry="2.3" fill="#a9c653"/><circle cx="1125.9" cy="646.5" r="3.4" fill="#9fd050"/><circle cx="1125" cy="645.1" r="2.2" fill="#b2dc63"/>
<ellipse cx="1103" cy="606.4" rx="5.9" ry="3" fill="#a9c653"/><circle cx="1099.5" cy="602.2" r="4.3" fill="#9fd050"/><circle cx="1098.3" cy="600.5" r="2.8" fill="#b2dc63"/>
<ellipse cx="1174.4" cy="633.3" rx="5.8" ry="2.9" fill="#a9c653"/><circle cx="1170.9" cy="629.3" r="4.1" fill="#9fd050"/><circle cx="1169.8" cy="627.5" r="2.8" fill="#b2dc63"/>
<ellipse cx="1151.7" cy="623.1" rx="6.2" ry="3.1" fill="#a9c653"/><circle cx="1148" cy="618.8" r="4.5" fill="#9fd050"/><circle cx="1146.7" cy="616.9" r="3" fill="#b2dc63"/>
<ellipse cx="1140.6" cy="623.7" rx="5" ry="2.5" fill="#a9c653"/><circle cx="1137.6" cy="620.2" r="3.6" fill="#9fd050"/><circle cx="1136.6" cy="618.7" r="2.4" fill="#b2dc63"/>
<ellipse cx="1178.9" cy="596.3" rx="5.7" ry="2.9" fill="#a9c653"/><circle cx="1175.5" cy="592.3" r="4.1" fill="#9fd050"/><circle cx="1174.4" cy="590.6" r="2.8" fill="#b2dc63"/>
<ellipse cx="1163.4" cy="651.1" rx="6.5" ry="3.2" fill="#a9c653"/><circle cx="1159.5" cy="646.6" r="4.7" fill="#9fd050"/><circle cx="1158.2" cy="644.6" r="3.1" fill="#b2dc63"/>
<ellipse cx="1020.2" cy="589" rx="5.1" ry="2.6" fill="#a9c653"/><circle cx="1017.1" cy="585.4" r="3.7" fill="#9fd050"/><circle cx="1016.1" cy="583.8" r="2.5" fill="#b2dc63"/>
<ellipse cx="1087.4" cy="573.6" rx="5.6" ry="2.8" fill="#a9c653"/><circle cx="1084.1" cy="569.7" r="4" fill="#9fd050"/><circle cx="1083" cy="568" r="2.7" fill="#b2dc63"/>
<ellipse cx="1033.7" cy="588.9" rx="6.4" ry="3.2" fill="#a9c653"/><circle cx="1029.8" cy="584.4" r="4.6" fill="#9fd050"/><circle cx="1028.6" cy="582.5" r="3.1" fill="#b2dc63"/>
<ellipse cx="1148" cy="602.8" rx="4.7" ry="2.4" fill="#a9c653"/><circle cx="1145.2" cy="599.5" r="3.4" fill="#9fd050"/><circle cx="1144.2" cy="598" r="2.3" fill="#b2dc63"/>
<ellipse cx="1185.3" cy="625.6" rx="4.9" ry="2.5" fill="#a9c653"/><circle cx="1182.3" cy="622.2" r="3.5" fill="#9fd050"/><circle cx="1181.4" cy="620.7" r="2.4" fill="#b2dc63"/>
<ellipse cx="1077.9" cy="620.4" rx="5.9" ry="2.9" fill="#a9c653"/><circle cx="1074.3" cy="616.3" r="4.2" fill="#9fd050"/><circle cx="1073.2" cy="614.5" r="2.8" fill="#b2dc63"/>
<ellipse cx="1075.8" cy="584.2" rx="6.2" ry="3.1" fill="#a9c653"/><circle cx="1072" cy="579.9" r="4.5" fill="#9fd050"/><circle cx="1070.8" cy="578" r="3" fill="#b2dc63"/>
<ellipse cx="1053.8" cy="615.7" rx="5.1" ry="2.5" fill="#a9c653"/><circle cx="1050.8" cy="612.2" r="3.6" fill="#9fd050"/><circle cx="1049.8" cy="610.7" r="2.4" fill="#b2dc63"/>
<ellipse cx="1085.2" cy="648.2" rx="5.4" ry="2.7" fill="#a9c653"/><circle cx="1081.9" cy="644.4" r="3.9" fill="#9fd050"/><circle cx="1080.9" cy="642.8" r="2.6" fill="#b2dc63"/>
<ellipse cx="1095.1" cy="617.5" rx="5.1" ry="2.5" fill="#a9c653"/><circle cx="1092" cy="614" r="3.6" fill="#9fd050"/><circle cx="1091" cy="612.5" r="2.4" fill="#b2dc63"/>
<ellipse cx="1049.4" cy="595.7" rx="5" ry="2.5" fill="#a9c653"/><circle cx="1046.3" cy="592.2" r="3.6" fill="#9fd050"/><circle cx="1045.3" cy="590.6" r="2.4" fill="#b2dc63"/>
<polygon points="1010.7,563.3 1023.7,556.2 1036.7,563.3 1023.7,570.5" fill="#dfcdb0"/><polygon points="1015.9,558.1 1023.7,562.7 1023.7,567.2 1015.9,562.7" fill="#e9e1d4"/><polygon points="1023.7,562.7 1031.5,558.1 1031.5,562.7 1023.7,567.2" fill="#b9ab98"/><polygon points="1015.9,558.1 1022.4,551.6 1031.5,557.5 1023.7,562.7" fill="#8a6f5c"/>
<polygon points="1024,564.8 1037,557.7 1050,564.8 1037,572" fill="#dfcdb0"/><polygon points="1029.2,559.6 1037,564.2 1037,568.7 1029.2,564.2" fill="#d9cdbb"/><polygon points="1037,564.2 1044.8,559.6 1044.8,564.2 1037,568.7" fill="#b9ab98"/><polygon points="1029.2,559.6 1035.7,553.1 1044.8,559 1037,564.2" fill="#7a6252"/>
<polygon points="1013.7,576.7 1026.7,569.5 1039.7,576.7 1026.7,583.8" fill="#dfcdb0"/><polygon points="1018.9,571.5 1026.7,576 1026.7,580.6 1018.9,576" fill="#f2ede4"/><polygon points="1026.7,576 1034.5,571.5 1034.5,576 1026.7,580.6" fill="#b9ab98"/><polygon points="1018.9,571.5 1025.4,565 1034.5,570.8 1026.7,576" fill="#9b8572"/>
<polygon points="1027,579.6 1040,572.5 1053,579.6 1040,586.8" fill="#dfcdb0"/><polygon points="1032.2,574.4 1040,579 1040,583.5 1032.2,579" fill="#cfc4b4"/><polygon points="1040,579 1047.8,574.4 1047.8,579 1040,583.5" fill="#b9ab98"/><polygon points="1032.2,574.4 1038.7,567.9 1047.8,573.8 1040,579" fill="#6b5a4e"/>
<polygon points="1038.9,576.7 1051.9,569.5 1064.9,576.7 1051.9,583.8" fill="#dfcdb0"/><polygon points="1044.1,571.5 1051.9,576 1051.9,580.6 1044.1,576" fill="#e9e1d4"/><polygon points="1051.9,576 1059.7,571.5 1059.7,576 1051.9,580.6" fill="#b9ab98"/><polygon points="1044.1,571.5 1050.6,565 1059.7,570.8 1051.9,576" fill="#8a6f5c"/>
<polygon points="1064,587 1077,579.9 1090,587 1077,594.2" fill="#dfcdb0"/><polygon points="1069.2,581.8 1077,586.4 1077,590.9 1069.2,586.4" fill="#d9cdbb"/><polygon points="1077,586.4 1084.8,581.8 1084.8,586.4 1077,590.9" fill="#b9ab98"/><polygon points="1069.2,581.8 1075.7,575.3 1084.8,581.2 1077,586.4" fill="#7a6252"/>
<polygon points="1009.2,619.6 1022.2,612.5 1035.2,619.6 1022.2,626.8" fill="#dfcdb0"/><polygon points="1014.4,614.4 1022.2,619 1022.2,623.5 1014.4,619" fill="#f2ede4"/><polygon points="1022.2,619 1030,614.4 1030,619 1022.2,623.5" fill="#b9ab98"/><polygon points="1014.4,614.4 1020.9,607.9 1030,613.8 1022.2,619" fill="#9b8572"/>
<polygon points="1024,613.7 1037,606.6 1050,613.7 1037,620.9" fill="#dfcdb0"/><polygon points="1029.2,608.5 1037,613.1 1037,617.6 1029.2,613.1" fill="#cfc4b4"/><polygon points="1037,613.1 1044.8,608.5 1044.8,613.1 1037,617.6" fill="#b9ab98"/><polygon points="1029.2,608.5 1035.7,602 1044.8,607.9 1037,613.1" fill="#6b5a4e"/>
<polygon points="1034.4,606.3 1047.4,599.2 1060.4,606.3 1047.4,613.5" fill="#dfcdb0"/><polygon points="1039.6,601.1 1047.4,605.7 1047.4,610.2 1039.6,605.7" fill="#e9e1d4"/><polygon points="1047.4,605.7 1055.2,601.1 1055.2,605.7 1047.4,610.2" fill="#b9ab98"/><polygon points="1039.6,601.1 1046.1,594.6 1055.2,600.5 1047.4,605.7" fill="#8a6f5c"/>
<polygon points="1046.3,600.4 1059.3,593.2 1072.3,600.4 1059.3,607.5" fill="#dfcdb0"/><polygon points="1051.5,595.2 1059.3,599.7 1059.3,604.3 1051.5,599.7" fill="#d9cdbb"/><polygon points="1059.3,599.7 1067.1,595.2 1067.1,599.7 1059.3,604.3" fill="#b9ab98"/><polygon points="1051.5,595.2 1058,588.7 1067.1,594.5 1059.3,599.7" fill="#7a6252"/>
<polygon points="1053.7,595.9 1066.7,588.8 1079.7,595.9 1066.7,603.1" fill="#dfcdb0"/><polygon points="1058.9,590.7 1066.7,595.3 1066.7,599.8 1058.9,595.3" fill="#f2ede4"/><polygon points="1066.7,595.3 1074.5,590.7 1074.5,595.3 1066.7,599.8" fill="#b9ab98"/><polygon points="1058.9,590.7 1065.4,584.2 1074.5,590.1 1066.7,595.3" fill="#9b8572"/>
<polygon points="1012.2,638.9 1025.2,631.7 1038.2,638.9 1025.2,646" fill="#dfcdb0"/><polygon points="1017.4,633.7 1025.2,638.2 1025.2,642.8 1017.4,638.2" fill="#cfc4b4"/><polygon points="1025.2,638.2 1033,633.7 1033,638.2 1025.2,642.8" fill="#b9ab98"/><polygon points="1017.4,633.7 1023.9,627.2 1033,633 1025.2,638.2" fill="#6b5a4e"/>
<polygon points="1089.2,621.1 1102.2,614 1115.2,621.1 1102.2,628.3" fill="#dfcdb0"/><polygon points="1094.4,615.9 1102.2,620.5 1102.2,625 1094.4,620.5" fill="#e9e1d4"/><polygon points="1102.2,620.5 1110,615.9 1110,620.5 1102.2,625" fill="#b9ab98"/><polygon points="1094.4,615.9 1100.9,609.4 1110,615.3 1102.2,620.5" fill="#8a6f5c"/>
<polygon points="1090.7,637.4 1103.7,630.3 1116.7,637.4 1103.7,644.6" fill="#dfcdb0"/><polygon points="1095.9,632.2 1103.7,636.8 1103.7,641.3 1095.9,636.8" fill="#d9cdbb"/><polygon points="1103.7,636.8 1111.5,632.2 1111.5,636.8 1103.7,641.3" fill="#b9ab98"/><polygon points="1095.9,632.2 1102.4,625.7 1111.5,631.6 1103.7,636.8" fill="#7a6252"/>
<polygon points="1118.9,621.1 1131.9,614 1144.9,621.1 1131.9,628.3" fill="#dfcdb0"/><polygon points="1124.1,615.9 1131.9,620.5 1131.9,625 1124.1,620.5" fill="#f2ede4"/><polygon points="1131.9,620.5 1139.7,615.9 1139.7,620.5 1131.9,625" fill="#b9ab98"/><polygon points="1124.1,615.9 1130.6,609.4 1139.7,615.3 1131.9,620.5" fill="#9b8572"/>
<polygon points="1022.6,677.4 1035.6,670.3 1048.6,677.4 1035.6,684.6" fill="#dfcdb0"/><polygon points="1027.8,672.2 1035.6,676.8 1035.6,681.3 1027.8,676.8" fill="#cfc4b4"/><polygon points="1035.6,676.8 1043.4,672.2 1043.4,676.8 1035.6,681.3" fill="#b9ab98"/><polygon points="1027.8,672.2 1034.3,665.7 1043.4,671.6 1035.6,676.8" fill="#6b5a4e"/>
<polygon points="1160.3,563.3 1173.3,556.2 1186.3,563.3 1173.3,570.5" fill="#dfcdb0"/><polygon points="1165.5,558.1 1173.3,562.7 1173.3,567.2 1165.5,562.7" fill="#e9e1d4"/><polygon points="1173.3,562.7 1181.1,558.1 1181.1,562.7 1173.3,567.2" fill="#b9ab98"/><polygon points="1165.5,558.1 1172,551.6 1181.1,557.5 1173.3,562.7" fill="#8a6f5c"/>
<polygon points="1114.4,560.4 1127.4,553.2 1140.4,560.4 1127.4,567.5" fill="#dfcdb0"/><polygon points="1119.6,555.2 1127.4,559.7 1127.4,564.3 1119.6,559.7" fill="#d9cdbb"/><polygon points="1127.4,559.7 1135.2,555.2 1135.2,559.7 1127.4,564.3" fill="#b9ab98"/><polygon points="1119.6,555.2 1126.1,548.7 1135.2,554.5 1127.4,559.7" fill="#7a6252"/>
<polygon points="1123.3,572.2 1136.3,565.1 1149.3,572.2 1136.3,579.4" fill="#dfcdb0"/><polygon points="1128.5,567 1136.3,571.6 1136.3,576.1 1128.5,571.6" fill="#f2ede4"/><polygon points="1136.3,571.6 1144.1,567 1144.1,571.6 1136.3,576.1" fill="#b9ab98"/><polygon points="1128.5,567 1135,560.5 1144.1,566.4 1136.3,571.6" fill="#9b8572"/>
<polygon points="1135.1,584.1 1148.1,576.9 1161.1,584.1 1148.1,591.2" fill="#dfcdb0"/><polygon points="1140.3,578.9 1148.1,583.4 1148.1,588 1140.3,583.4" fill="#cfc4b4"/><polygon points="1148.1,583.4 1155.9,578.9 1155.9,583.4 1148.1,588" fill="#b9ab98"/><polygon points="1140.3,578.9 1146.8,572.4 1155.9,578.2 1148.1,583.4" fill="#6b5a4e"/>
<polygon points="1147,590 1160,582.9 1173,590 1160,597.2" fill="#dfcdb0"/><polygon points="1152.2,584.8 1160,589.4 1160,593.9 1152.2,589.4" fill="#e9e1d4"/><polygon points="1160,589.4 1167.8,584.8 1167.8,589.4 1160,593.9" fill="#b9ab98"/><polygon points="1152.2,584.8 1158.7,578.3 1167.8,584.2 1160,589.4" fill="#8a6f5c"/>
<polygon points="1161.8,598.9 1174.8,591.7 1187.8,598.9 1174.8,606" fill="#dfcdb0"/><polygon points="1167,593.7 1174.8,598.2 1174.8,602.8 1167,598.2" fill="#d9cdbb"/><polygon points="1174.8,598.2 1182.6,593.7 1182.6,598.2 1174.8,602.8" fill="#b9ab98"/><polygon points="1167,593.7 1173.5,587.2 1182.6,593 1174.8,598.2" fill="#7a6252"/>
<polygon points="1176.6,572.2 1189.6,565.1 1202.6,572.2 1189.6,579.4" fill="#dfcdb0"/><polygon points="1181.8,567 1189.6,571.6 1189.6,576.1 1181.8,571.6" fill="#f2ede4"/><polygon points="1189.6,571.6 1197.4,567 1197.4,571.6 1189.6,576.1" fill="#b9ab98"/><polygon points="1181.8,567 1188.3,560.5 1197.4,566.4 1189.6,571.6" fill="#9b8572"/>
<polygon points="1185.5,581.1 1198.5,574 1211.5,581.1 1198.5,588.3" fill="#dfcdb0"/><polygon points="1190.7,575.9 1198.5,580.5 1198.5,585 1190.7,580.5" fill="#cfc4b4"/><polygon points="1198.5,580.5 1206.3,575.9 1206.3,580.5 1198.5,585" fill="#b9ab98"/><polygon points="1190.7,575.9 1197.2,569.4 1206.3,575.3 1198.5,580.5" fill="#6b5a4e"/>
<polygon points="1152.9,572.2 1165.9,565.1 1178.9,572.2 1165.9,579.4" fill="#dfcdb0"/><polygon points="1158.1,567 1165.9,571.6 1165.9,576.1 1158.1,571.6" fill="#e9e1d4"/><polygon points="1165.9,571.6 1173.7,567 1173.7,571.6 1165.9,576.1" fill="#b9ab98"/><polygon points="1158.1,567 1164.6,560.5 1173.7,566.4 1165.9,571.6" fill="#8a6f5c"/>
<polygon points="1240.3,566.3 1253.3,559.2 1266.3,566.3 1253.3,573.5" fill="#dfcdb0"/><polygon points="1245.5,561.1 1253.3,565.7 1253.3,570.2 1245.5,565.7" fill="#d9cdbb"/><polygon points="1253.3,565.7 1261.1,561.1 1261.1,565.7 1253.3,570.2" fill="#b9ab98"/><polygon points="1245.5,561.1 1252,554.6 1261.1,560.5 1253.3,565.7" fill="#7a6252"/>
<polygon points="1283.3,560.4 1296.3,553.2 1309.3,560.4 1296.3,567.5" fill="#dfcdb0"/><polygon points="1288.5,555.2 1296.3,559.7 1296.3,564.3 1288.5,559.7" fill="#f2ede4"/><polygon points="1296.3,559.7 1304.1,555.2 1304.1,559.7 1296.3,564.3" fill="#b9ab98"/><polygon points="1288.5,555.2 1295,548.7 1304.1,554.5 1296.3,559.7" fill="#9b8572"/>
<polygon points="1281.8,572.2 1294.8,565.1 1307.8,572.2 1294.8,579.4" fill="#dfcdb0"/><polygon points="1287,567 1294.8,571.6 1294.8,576.1 1287,571.6" fill="#cfc4b4"/><polygon points="1294.8,571.6 1302.6,567 1302.6,571.6 1294.8,576.1" fill="#b9ab98"/><polygon points="1287,567 1293.5,560.5 1302.6,566.4 1294.8,571.6" fill="#6b5a4e"/>
<polygon points="1296.6,581.1 1309.6,574 1322.6,581.1 1309.6,588.3" fill="#dfcdb0"/><polygon points="1301.8,575.9 1309.6,580.5 1309.6,585 1301.8,580.5" fill="#e9e1d4"/><polygon points="1309.6,580.5 1317.4,575.9 1317.4,580.5 1309.6,585" fill="#b9ab98"/><polygon points="1301.8,575.9 1308.3,569.4 1317.4,575.3 1309.6,580.5" fill="#8a6f5c"/>
<polygon points="1310,572.2 1323,565.1 1336,572.2 1323,579.4" fill="#dfcdb0"/><polygon points="1315.2,567 1323,571.6 1323,576.1 1315.2,571.6" fill="#d9cdbb"/><polygon points="1323,571.6 1330.8,567 1330.8,571.6 1323,576.1" fill="#b9ab98"/><polygon points="1315.2,567 1321.7,560.5 1330.8,566.4 1323,571.6" fill="#7a6252"/>
<polygon points="1281.8,587 1294.8,579.9 1307.8,587 1294.8,594.2" fill="#dfcdb0"/><polygon points="1287,581.8 1294.8,586.4 1294.8,590.9 1287,586.4" fill="#f2ede4"/><polygon points="1294.8,586.4 1302.6,581.8 1302.6,586.4 1294.8,590.9" fill="#b9ab98"/><polygon points="1287,581.8 1293.5,575.3 1302.6,581.2 1294.8,586.4" fill="#9b8572"/>
<polygon points="1270,600.4 1283,593.2 1296,600.4 1283,607.5" fill="#dfcdb0"/><polygon points="1275.2,595.2 1283,599.7 1283,604.3 1275.2,599.7" fill="#cfc4b4"/><polygon points="1283,599.7 1290.8,595.2 1290.8,599.7 1283,604.3" fill="#b9ab98"/><polygon points="1275.2,595.2 1281.7,588.7 1290.8,594.5 1283,599.7" fill="#6b5a4e"/>
<polygon points="1253.7,606.3 1266.7,599.2 1279.7,606.3 1266.7,613.5" fill="#dfcdb0"/><polygon points="1258.9,601.1 1266.7,605.7 1266.7,610.2 1258.9,605.7" fill="#e9e1d4"/><polygon points="1266.7,605.7 1274.5,601.1 1274.5,605.7 1266.7,610.2" fill="#b9ab98"/><polygon points="1258.9,601.1 1265.4,594.6 1274.5,600.5 1266.7,605.7" fill="#8a6f5c"/>
<polygon points="1241.8,613.7 1254.8,606.6 1267.8,613.7 1254.8,620.9" fill="#dfcdb0"/><polygon points="1247,608.5 1254.8,613.1 1254.8,617.6 1247,613.1" fill="#d9cdbb"/><polygon points="1254.8,613.1 1262.6,608.5 1262.6,613.1 1254.8,617.6" fill="#b9ab98"/><polygon points="1247,608.5 1253.5,602 1262.6,607.9 1254.8,613.1" fill="#7a6252"/>
<polygon points="1215.1,598.9 1228.1,591.7 1241.1,598.9 1228.1,606" fill="#dfcdb0"/><polygon points="1220.3,593.7 1228.1,598.2 1228.1,602.8 1220.3,598.2" fill="#f2ede4"/><polygon points="1228.1,598.2 1235.9,593.7 1235.9,598.2 1228.1,602.8" fill="#b9ab98"/><polygon points="1220.3,593.7 1226.8,587.2 1235.9,593 1228.1,598.2" fill="#9b8572"/>
<polygon points="1241.8,581.1 1254.8,574 1267.8,581.1 1254.8,588.3" fill="#dfcdb0"/><polygon points="1247,575.9 1254.8,580.5 1254.8,585 1247,580.5" fill="#cfc4b4"/><polygon points="1254.8,580.5 1262.6,575.9 1262.6,580.5 1254.8,585" fill="#b9ab98"/><polygon points="1247,575.9 1253.5,569.4 1262.6,575.3 1254.8,580.5" fill="#6b5a4e"/>
<polygon points="1238.9,595.9 1251.9,588.8 1264.9,595.9 1251.9,603.1" fill="#dfcdb0"/><polygon points="1244.1,590.7 1251.9,595.3 1251.9,599.8 1244.1,595.3" fill="#e9e1d4"/><polygon points="1251.9,595.3 1259.7,590.7 1259.7,595.3 1251.9,599.8" fill="#b9ab98"/><polygon points="1244.1,590.7 1250.6,584.2 1259.7,590.1 1251.9,595.3" fill="#8a6f5c"/>
<polygon points="1187,613.7 1200,606.6 1213,613.7 1200,620.9" fill="#dfcdb0"/><polygon points="1192.2,608.5 1200,613.1 1200,617.6 1192.2,613.1" fill="#d9cdbb"/><polygon points="1200,613.1 1207.8,608.5 1207.8,613.1 1200,617.6" fill="#b9ab98"/><polygon points="1192.2,608.5 1198.7,602 1207.8,607.9 1200,613.1" fill="#7a6252"/>
<polygon points="1203.3,621.1 1216.3,614 1229.3,621.1 1216.3,628.3" fill="#dfcdb0"/><polygon points="1208.5,615.9 1216.3,620.5 1216.3,625 1208.5,620.5" fill="#f2ede4"/><polygon points="1216.3,620.5 1224.1,615.9 1224.1,620.5 1216.3,625" fill="#b9ab98"/><polygon points="1208.5,615.9 1215,609.4 1224.1,615.3 1216.3,620.5" fill="#9b8572"/>
<polygon points="1218.1,628.5 1231.1,621.4 1244.1,628.5 1231.1,635.7" fill="#dfcdb0"/><polygon points="1223.3,623.3 1231.1,627.9 1231.1,632.4 1223.3,627.9" fill="#cfc4b4"/><polygon points="1231.1,627.9 1238.9,623.3 1238.9,627.9 1231.1,632.4" fill="#b9ab98"/><polygon points="1223.3,623.3 1229.8,616.8 1238.9,622.7 1231.1,627.9" fill="#6b5a4e"/>
<polygon points="1238.9,628.5 1251.9,621.4 1264.9,628.5 1251.9,635.7" fill="#dfcdb0"/><polygon points="1244.1,623.3 1251.9,627.9 1251.9,632.4 1244.1,627.9" fill="#e9e1d4"/><polygon points="1251.9,627.9 1259.7,623.3 1259.7,627.9 1251.9,632.4" fill="#b9ab98"/><polygon points="1244.1,623.3 1250.6,616.8 1259.7,622.7 1251.9,627.9" fill="#8a6f5c"/>
<polygon points="1230,637.4 1243,630.3 1256,637.4 1243,644.6" fill="#dfcdb0"/><polygon points="1235.2,632.2 1243,636.8 1243,641.3 1235.2,636.8" fill="#d9cdbb"/><polygon points="1243,636.8 1250.8,632.2 1250.8,636.8 1243,641.3" fill="#b9ab98"/><polygon points="1235.2,632.2 1241.7,625.7 1250.8,631.6 1243,636.8" fill="#7a6252"/>
<polygon points="1295.1,613.7 1308.1,606.6 1321.1,613.7 1308.1,620.9" fill="#dfcdb0"/><polygon points="1300.3,608.5 1308.1,613.1 1308.1,617.6 1300.3,613.1" fill="#f2ede4"/><polygon points="1308.1,613.1 1315.9,608.5 1315.9,613.1 1308.1,617.6" fill="#b9ab98"/><polygon points="1300.3,608.5 1306.8,602 1315.9,607.9 1308.1,613.1" fill="#9b8572"/>
<polygon points="1283.3,606.3 1296.3,599.2 1309.3,606.3 1296.3,613.5" fill="#dfcdb0"/><polygon points="1288.5,601.1 1296.3,605.7 1296.3,610.2 1288.5,605.7" fill="#cfc4b4"/><polygon points="1296.3,605.7 1304.1,601.1 1304.1,605.7 1296.3,610.2" fill="#b9ab98"/><polygon points="1288.5,601.1 1295,594.6 1304.1,600.5 1296.3,605.7" fill="#6b5a4e"/>
<polygon points="1267,615.2 1280,608 1293,615.2 1280,622.3" fill="#dfcdb0"/><polygon points="1272.2,610 1280,614.5 1280,619.1 1272.2,614.5" fill="#e9e1d4"/><polygon points="1280,614.5 1287.8,610 1287.8,614.5 1280,619.1" fill="#b9ab98"/><polygon points="1272.2,610 1278.7,603.5 1287.8,609.3 1280,614.5" fill="#8a6f5c"/>
<polygon points="1312.9,621.1 1325.9,614 1338.9,621.1 1325.9,628.3" fill="#dfcdb0"/><polygon points="1318.1,615.9 1325.9,620.5 1325.9,625 1318.1,620.5" fill="#d9cdbb"/><polygon points="1325.9,620.5 1333.7,615.9 1333.7,620.5 1325.9,625" fill="#b9ab98"/><polygon points="1318.1,615.9 1324.6,609.4 1333.7,615.3 1325.9,620.5" fill="#7a6252"/>
<polygon points="1324.8,612.2 1337.8,605.1 1350.8,612.2 1337.8,619.4" fill="#dfcdb0"/><polygon points="1330,607 1337.8,611.6 1337.8,616.1 1330,611.6" fill="#f2ede4"/><polygon points="1337.8,611.6 1345.6,607 1345.6,611.6 1337.8,616.1" fill="#b9ab98"/><polygon points="1330,607 1336.5,600.5 1345.6,606.4 1337.8,611.6" fill="#9b8572"/>
<polygon points="1351.4,615.2 1364.4,608 1377.4,615.2 1364.4,622.3" fill="#dfcdb0"/><polygon points="1356.6,610 1364.4,614.5 1364.4,619.1 1356.6,614.5" fill="#cfc4b4"/><polygon points="1364.4,614.5 1372.2,610 1372.2,614.5 1364.4,619.1" fill="#b9ab98"/><polygon points="1356.6,610 1363.1,603.5 1372.2,609.3 1364.4,614.5" fill="#6b5a4e"/>
<polygon points="1351.4,631.5 1364.4,624.3 1377.4,631.5 1364.4,638.6" fill="#dfcdb0"/><polygon points="1356.6,626.3 1364.4,630.8 1364.4,635.4 1356.6,630.8" fill="#e9e1d4"/><polygon points="1364.4,630.8 1372.2,626.3 1372.2,630.8 1364.4,635.4" fill="#b9ab98"/><polygon points="1356.6,626.3 1363.1,619.8 1372.2,625.6 1364.4,630.8" fill="#8a6f5c"/>
<polygon points="1392.9,606.3 1405.9,599.2 1418.9,606.3 1405.9,613.5" fill="#dfcdb0"/><polygon points="1398.1,601.1 1405.9,605.7 1405.9,610.2 1398.1,605.7" fill="#d9cdbb"/><polygon points="1405.9,605.7 1413.7,601.1 1413.7,605.7 1405.9,610.2" fill="#b9ab98"/><polygon points="1398.1,601.1 1404.6,594.6 1413.7,600.5 1405.9,605.7" fill="#7a6252"/>
<polygon points="1446.3,575.2 1459.3,568 1472.3,575.2 1459.3,582.3" fill="#dfcdb0"/><polygon points="1451.5,570 1459.3,574.5 1459.3,579.1 1451.5,574.5" fill="#f2ede4"/><polygon points="1459.3,574.5 1467.1,570 1467.1,574.5 1459.3,579.1" fill="#b9ab98"/><polygon points="1451.5,570 1458,563.5 1467.1,569.3 1459.3,574.5" fill="#9b8572"/>
<polygon points="1147,652.2 1160,645.1 1173,652.2 1160,659.4" fill="#dfcdb0"/><polygon points="1152.2,647 1160,651.6 1160,656.1 1152.2,651.6" fill="#cfc4b4"/><polygon points="1160,651.6 1167.8,647 1167.8,651.6 1160,656.1" fill="#b9ab98"/><polygon points="1152.2,647 1158.7,640.5 1167.8,646.4 1160,651.6" fill="#6b5a4e"/>
<polygon points="1161.8,646.3 1174.8,639.2 1187.8,646.3 1174.8,653.5" fill="#dfcdb0"/><polygon points="1167,641.1 1174.8,645.7 1174.8,650.2 1167,645.7" fill="#e9e1d4"/><polygon points="1174.8,645.7 1182.6,641.1 1182.6,645.7 1174.8,650.2" fill="#b9ab98"/><polygon points="1167,641.1 1173.5,634.6 1182.6,640.5 1174.8,645.7" fill="#8a6f5c"/>
<polygon points="1172.2,653.7 1185.2,646.6 1198.2,653.7 1185.2,660.9" fill="#dfcdb0"/><polygon points="1177.4,648.5 1185.2,653.1 1185.2,657.6 1177.4,653.1" fill="#d9cdbb"/><polygon points="1185.2,653.1 1193,648.5 1193,653.1 1185.2,657.6" fill="#b9ab98"/><polygon points="1177.4,648.5 1183.9,642 1193,647.9 1185.2,653.1" fill="#7a6252"/>
<polygon points="1255.1,652.2 1268.1,645.1 1281.1,652.2 1268.1,659.4" fill="#dfcdb0"/><polygon points="1260.3,647 1268.1,651.6 1268.1,656.1 1260.3,651.6" fill="#f2ede4"/><polygon points="1268.1,651.6 1275.9,647 1275.9,651.6 1268.1,656.1" fill="#b9ab98"/><polygon points="1260.3,647 1266.8,640.5 1275.9,646.4 1268.1,651.6" fill="#9b8572"/>
<polygon points="1295.1,662.6 1308.1,655.5 1321.1,662.6 1308.1,669.8" fill="#dfcdb0"/><polygon points="1300.3,657.4 1308.1,662 1308.1,666.5 1300.3,662" fill="#cfc4b4"/><polygon points="1308.1,662 1315.9,657.4 1315.9,662 1308.1,666.5" fill="#b9ab98"/><polygon points="1300.3,657.4 1306.8,650.9 1315.9,656.8 1308.1,662" fill="#6b5a4e"/>
<polygon points="1310,667 1323,659.9 1336,667 1323,674.2" fill="#dfcdb0"/><polygon points="1315.2,661.8 1323,666.4 1323,670.9 1315.2,666.4" fill="#e9e1d4"/><polygon points="1323,666.4 1330.8,661.8 1330.8,666.4 1323,670.9" fill="#b9ab98"/><polygon points="1315.2,661.8 1321.7,655.3 1330.8,661.2 1323,666.4" fill="#8a6f5c"/>
<polygon points="1323.3,643.3 1336.3,636.2 1349.3,643.3 1336.3,650.5" fill="#dfcdb0"/><polygon points="1328.5,638.1 1336.3,642.7 1336.3,647.2 1328.5,642.7" fill="#d9cdbb"/><polygon points="1336.3,642.7 1344.1,638.1 1344.1,642.7 1336.3,647.2" fill="#b9ab98"/><polygon points="1328.5,638.1 1335,631.6 1344.1,637.5 1336.3,642.7" fill="#7a6252"/>
<polygon points="1327.7,661.1 1340.7,654 1353.7,661.1 1340.7,668.3" fill="#dfcdb0"/><polygon points="1332.9,655.9 1340.7,660.5 1340.7,665 1332.9,660.5" fill="#f2ede4"/><polygon points="1340.7,660.5 1348.5,655.9 1348.5,660.5 1340.7,665" fill="#b9ab98"/><polygon points="1332.9,655.9 1339.4,649.4 1348.5,655.3 1340.7,660.5" fill="#9b8572"/>
<polygon points="1336.6,684.8 1349.6,677.7 1362.6,684.8 1349.6,692" fill="#dfcdb0"/><polygon points="1341.8,679.6 1349.6,684.2 1349.6,688.7 1341.8,684.2" fill="#cfc4b4"/><polygon points="1349.6,684.2 1357.4,679.6 1357.4,684.2 1349.6,688.7" fill="#b9ab98"/><polygon points="1341.8,679.6 1348.3,673.1 1357.4,679 1349.6,684.2" fill="#6b5a4e"/>
<polygon points="1363.3,670 1376.3,662.9 1389.3,670 1376.3,677.2" fill="#dfcdb0"/><polygon points="1368.5,664.8 1376.3,669.4 1376.3,673.9 1368.5,669.4" fill="#e9e1d4"/><polygon points="1376.3,669.4 1384.1,664.8 1384.1,669.4 1376.3,673.9" fill="#b9ab98"/><polygon points="1368.5,664.8 1375,658.3 1384.1,664.2 1376.3,669.4" fill="#8a6f5c"/>
<polygon points="1378.1,675.9 1391.1,668.8 1404.1,675.9 1391.1,683.1" fill="#dfcdb0"/><polygon points="1383.3,670.7 1391.1,675.3 1391.1,679.8 1383.3,675.3" fill="#d9cdbb"/><polygon points="1391.1,675.3 1398.9,670.7 1398.9,675.3 1391.1,679.8" fill="#b9ab98"/><polygon points="1383.3,670.7 1389.8,664.2 1398.9,670.1 1391.1,675.3" fill="#7a6252"/>
<polygon points="1392.9,681.9 1405.9,674.7 1418.9,681.9 1405.9,689" fill="#dfcdb0"/><polygon points="1398.1,676.7 1405.9,681.2 1405.9,685.8 1398.1,681.2" fill="#f2ede4"/><polygon points="1405.9,681.2 1413.7,676.7 1413.7,681.2 1405.9,685.8" fill="#b9ab98"/><polygon points="1398.1,676.7 1404.6,670.2 1413.7,676 1405.9,681.2" fill="#9b8572"/>
<polygon points="1392.9,652.2 1405.9,645.1 1418.9,652.2 1405.9,659.4" fill="#dfcdb0"/><polygon points="1398.1,647 1405.9,651.6 1405.9,656.1 1398.1,651.6" fill="#cfc4b4"/><polygon points="1405.9,651.6 1413.7,647 1413.7,651.6 1405.9,656.1" fill="#b9ab98"/><polygon points="1398.1,647 1404.6,640.5 1413.7,646.4 1405.9,651.6" fill="#6b5a4e"/>
<polygon points="1419.6,667 1432.6,659.9 1445.6,667 1432.6,674.2" fill="#dfcdb0"/><polygon points="1424.8,661.8 1432.6,666.4 1432.6,670.9 1424.8,666.4" fill="#e9e1d4"/><polygon points="1432.6,666.4 1440.4,661.8 1440.4,666.4 1432.6,670.9" fill="#b9ab98"/><polygon points="1424.8,661.8 1431.3,655.3 1440.4,661.2 1432.6,666.4" fill="#8a6f5c"/>
<polygon points="1375.1,693.7 1388.1,686.6 1401.1,693.7 1388.1,700.9" fill="#dfcdb0"/><polygon points="1380.3,688.5 1388.1,693.1 1388.1,697.6 1380.3,693.1" fill="#d9cdbb"/><polygon points="1388.1,693.1 1395.9,688.5 1395.9,693.1 1388.1,697.6" fill="#b9ab98"/><polygon points="1380.3,688.5 1386.8,682 1395.9,687.9 1388.1,693.1" fill="#7a6252"/>
<polygon points="1390,701.1 1403,694 1416,701.1 1403,708.3" fill="#dfcdb0"/><polygon points="1395.2,695.9 1403,700.5 1403,705 1395.2,700.5" fill="#f2ede4"/><polygon points="1403,700.5 1410.8,695.9 1410.8,700.5 1403,705" fill="#b9ab98"/><polygon points="1395.2,695.9 1401.7,689.4 1410.8,695.3 1403,700.5" fill="#9b8572"/>
<polygon points="1105.5,675.9 1118.5,668.8 1131.5,675.9 1118.5,683.1" fill="#dfcdb0"/><polygon points="1110.7,670.7 1118.5,675.3 1118.5,679.8 1110.7,675.3" fill="#cfc4b4"/><polygon points="1118.5,675.3 1126.3,670.7 1126.3,675.3 1118.5,679.8" fill="#b9ab98"/><polygon points="1110.7,670.7 1117.2,664.2 1126.3,670.1 1118.5,675.3" fill="#6b5a4e"/>
<polygon points="1118.9,681.9 1131.9,674.7 1144.9,681.9 1131.9,689" fill="#dfcdb0"/><polygon points="1124.1,676.7 1131.9,681.2 1131.9,685.8 1124.1,681.2" fill="#e9e1d4"/><polygon points="1131.9,681.2 1139.7,676.7 1139.7,681.2 1131.9,685.8" fill="#b9ab98"/><polygon points="1124.1,676.7 1130.6,670.2 1139.7,676 1131.9,681.2" fill="#8a6f5c"/>
<polygon points="1133.7,678.9 1146.7,671.7 1159.7,678.9 1146.7,686" fill="#dfcdb0"/><polygon points="1138.9,673.7 1146.7,678.2 1146.7,682.8 1138.9,678.2" fill="#d9cdbb"/><polygon points="1146.7,678.2 1154.5,673.7 1154.5,678.2 1146.7,682.8" fill="#b9ab98"/><polygon points="1138.9,673.7 1145.4,667.2 1154.5,673 1146.7,678.2" fill="#7a6252"/>
<polygon points="1145.5,684.8 1158.5,677.7 1171.5,684.8 1158.5,692" fill="#dfcdb0"/><polygon points="1150.7,679.6 1158.5,684.2 1158.5,688.7 1150.7,684.2" fill="#f2ede4"/><polygon points="1158.5,684.2 1166.3,679.6 1166.3,684.2 1158.5,688.7" fill="#b9ab98"/><polygon points="1150.7,679.6 1157.2,673.1 1166.3,679 1158.5,684.2" fill="#9b8572"/>
<polygon points="1161.8,678.9 1174.8,671.7 1187.8,678.9 1174.8,686" fill="#dfcdb0"/><polygon points="1167,673.7 1174.8,678.2 1174.8,682.8 1167,678.2" fill="#cfc4b4"/><polygon points="1174.8,678.2 1182.6,673.7 1182.6,678.2 1174.8,682.8" fill="#b9ab98"/><polygon points="1167,673.7 1173.5,667.2 1182.6,673 1174.8,678.2" fill="#6b5a4e"/>
<polygon points="1161.8,692.2 1174.8,685.1 1187.8,692.2 1174.8,699.4" fill="#dfcdb0"/><polygon points="1167,687 1174.8,691.6 1174.8,696.1 1167,691.6" fill="#e9e1d4"/><polygon points="1174.8,691.6 1182.6,687 1182.6,691.6 1174.8,696.1" fill="#b9ab98"/><polygon points="1167,687 1173.5,680.5 1182.6,686.4 1174.8,691.6" fill="#8a6f5c"/>
<polygon points="1144,702.6 1157,695.5 1170,702.6 1157,709.8" fill="#dfcdb0"/><polygon points="1149.2,697.4 1157,702 1157,706.5 1149.2,702" fill="#d9cdbb"/><polygon points="1157,702 1164.8,697.4 1164.8,702 1157,706.5" fill="#b9ab98"/><polygon points="1149.2,697.4 1155.7,690.9 1164.8,696.8 1157,702" fill="#7a6252"/>
<polygon points="1160.3,705.6 1173.3,698.4 1186.3,705.6 1173.3,712.7" fill="#dfcdb0"/><polygon points="1165.5,700.4 1173.3,704.9 1173.3,709.5 1165.5,704.9" fill="#f2ede4"/><polygon points="1173.3,704.9 1181.1,700.4 1181.1,704.9 1173.3,709.5" fill="#b9ab98"/><polygon points="1165.5,700.4 1172,693.9 1181.1,699.7 1173.3,704.9" fill="#9b8572"/>
<polygon points="1188.5,708.5 1201.5,701.4 1214.5,708.5 1201.5,715.7" fill="#dfcdb0"/><polygon points="1193.7,703.3 1201.5,707.9 1201.5,712.4 1193.7,707.9" fill="#cfc4b4"/><polygon points="1201.5,707.9 1209.3,703.3 1209.3,707.9 1201.5,712.4" fill="#b9ab98"/><polygon points="1193.7,703.3 1200.2,696.8 1209.3,702.7 1201.5,707.9" fill="#6b5a4e"/>
<polygon points="1204.8,715.9 1217.8,708.8 1230.8,715.9 1217.8,723.1" fill="#dfcdb0"/><polygon points="1210,710.7 1217.8,715.3 1217.8,719.8 1210,715.3" fill="#e9e1d4"/><polygon points="1217.8,715.3 1225.6,710.7 1225.6,715.3 1217.8,719.8" fill="#b9ab98"/><polygon points="1210,710.7 1216.5,704.2 1225.6,710.1 1217.8,715.3" fill="#8a6f5c"/>
<polygon points="1216.6,710 1229.6,702.9 1242.6,710 1229.6,717.2" fill="#dfcdb0"/><polygon points="1221.8,704.8 1229.6,709.4 1229.6,713.9 1221.8,709.4" fill="#d9cdbb"/><polygon points="1229.6,709.4 1237.4,704.8 1237.4,709.4 1229.6,713.9" fill="#b9ab98"/><polygon points="1221.8,704.8 1228.3,698.3 1237.4,704.2 1229.6,709.4" fill="#7a6252"/>
<polygon points="1230,699.6 1243,692.5 1256,699.6 1243,706.8" fill="#dfcdb0"/><polygon points="1235.2,694.4 1243,699 1243,703.5 1235.2,699" fill="#f2ede4"/><polygon points="1243,699 1250.8,694.4 1250.8,699 1243,703.5" fill="#b9ab98"/><polygon points="1235.2,694.4 1241.7,687.9 1250.8,693.8 1243,699" fill="#9b8572"/>
<polygon points="1188.5,726.3 1201.5,719.2 1214.5,726.3 1201.5,733.5" fill="#dfcdb0"/><polygon points="1193.7,721.1 1201.5,725.7 1201.5,730.2 1193.7,725.7" fill="#cfc4b4"/><polygon points="1201.5,725.7 1209.3,721.1 1209.3,725.7 1201.5,730.2" fill="#b9ab98"/><polygon points="1193.7,721.1 1200.2,714.6 1209.3,720.5 1201.5,725.7" fill="#6b5a4e"/>
<polygon points="1280.3,733.7 1293.3,726.6 1306.3,733.7 1293.3,740.9" fill="#dfcdb0"/><polygon points="1285.5,728.5 1293.3,733.1 1293.3,737.6 1285.5,733.1" fill="#e9e1d4"/><polygon points="1293.3,733.1 1301.1,728.5 1301.1,733.1 1293.3,737.6" fill="#b9ab98"/><polygon points="1285.5,728.5 1292,722 1301.1,727.9 1293.3,733.1" fill="#8a6f5c"/>
<polygon points="1310,732.2 1323,725.1 1336,732.2 1323,739.4" fill="#dfcdb0"/><polygon points="1315.2,727 1323,731.6 1323,736.1 1315.2,731.6" fill="#d9cdbb"/><polygon points="1323,731.6 1330.8,727 1330.8,731.6 1323,736.1" fill="#b9ab98"/><polygon points="1315.2,727 1321.7,720.5 1330.8,726.4 1323,731.6" fill="#7a6252"/>
<polygon points="1366.3,715.9 1379.3,708.8 1392.3,715.9 1379.3,723.1" fill="#dfcdb0"/><polygon points="1371.5,710.7 1379.3,715.3 1379.3,719.8 1371.5,715.3" fill="#f2ede4"/><polygon points="1379.3,715.3 1387.1,710.7 1387.1,715.3 1379.3,719.8" fill="#b9ab98"/><polygon points="1371.5,710.7 1378,704.2 1387.1,710.1 1379.3,715.3" fill="#9b8572"/>
<polygon points="1378.1,723.3 1391.1,716.2 1404.1,723.3 1391.1,730.5" fill="#dfcdb0"/><polygon points="1383.3,718.1 1391.1,722.7 1391.1,727.2 1383.3,722.7" fill="#cfc4b4"/><polygon points="1391.1,722.7 1398.9,718.1 1398.9,722.7 1391.1,727.2" fill="#b9ab98"/><polygon points="1383.3,718.1 1389.8,711.6 1398.9,717.5 1391.1,722.7" fill="#6b5a4e"/>
<polygon points="1392.9,732.2 1405.9,725.1 1418.9,732.2 1405.9,739.4" fill="#dfcdb0"/><polygon points="1398.1,727 1405.9,731.6 1405.9,736.1 1398.1,731.6" fill="#e9e1d4"/><polygon points="1405.9,731.6 1413.7,727 1413.7,731.6 1405.9,736.1" fill="#b9ab98"/><polygon points="1398.1,727 1404.6,720.5 1413.7,726.4 1405.9,731.6" fill="#8a6f5c"/>
<polygon points="1404.8,739.6 1417.8,732.5 1430.8,739.6 1417.8,746.8" fill="#dfcdb0"/><polygon points="1410,734.4 1417.8,739 1417.8,743.5 1410,739" fill="#d9cdbb"/><polygon points="1417.8,739 1425.6,734.4 1425.6,739 1417.8,743.5" fill="#b9ab98"/><polygon points="1410,734.4 1416.5,727.9 1425.6,733.8 1417.8,739" fill="#7a6252"/>
<polygon points="1421.1,750 1434.1,742.9 1447.1,750 1434.1,757.2" fill="#dfcdb0"/><polygon points="1426.3,744.8 1434.1,749.4 1434.1,753.9 1426.3,749.4" fill="#f2ede4"/><polygon points="1434.1,749.4 1441.9,744.8 1441.9,749.4 1434.1,753.9" fill="#b9ab98"/><polygon points="1426.3,744.8 1432.8,738.3 1441.9,744.2 1434.1,749.4" fill="#9b8572"/>
<polygon points="1418.1,714.5 1431.1,707.3 1444.1,714.5 1431.1,721.6" fill="#dfcdb0"/><polygon points="1423.3,709.3 1431.1,713.8 1431.1,718.4 1423.3,713.8" fill="#cfc4b4"/><polygon points="1431.1,713.8 1438.9,709.3 1438.9,713.8 1431.1,718.4" fill="#b9ab98"/><polygon points="1423.3,709.3 1429.8,702.8 1438.9,708.6 1431.1,713.8" fill="#6b5a4e"/>
<polygon points="1446.3,715.9 1459.3,708.8 1472.3,715.9 1459.3,723.1" fill="#dfcdb0"/><polygon points="1451.5,710.7 1459.3,715.3 1459.3,719.8 1451.5,715.3" fill="#e9e1d4"/><polygon points="1459.3,715.3 1467.1,710.7 1467.1,715.3 1459.3,719.8" fill="#b9ab98"/><polygon points="1451.5,710.7 1458,704.2 1467.1,710.1 1459.3,715.3" fill="#8a6f5c"/>
<polygon points="1378.1,770.7 1391.1,763.6 1404.1,770.7 1391.1,777.9" fill="#dfcdb0"/><polygon points="1383.3,765.5 1391.1,770.1 1391.1,774.6 1383.3,770.1" fill="#d9cdbb"/><polygon points="1391.1,770.1 1398.9,765.5 1398.9,770.1 1391.1,774.6" fill="#b9ab98"/><polygon points="1383.3,765.5 1389.8,759 1398.9,764.9 1391.1,770.1" fill="#7a6252"/>
<polygon points="1366.3,779.6 1379.3,772.5 1392.3,779.6 1379.3,786.8" fill="#dfcdb0"/><polygon points="1371.5,774.4 1379.3,779 1379.3,783.5 1371.5,779" fill="#f2ede4"/><polygon points="1379.3,779 1387.1,774.4 1387.1,779 1379.3,783.5" fill="#b9ab98"/><polygon points="1371.5,774.4 1378,767.9 1387.1,773.8 1379.3,779" fill="#9b8572"/>
<polygon points="1339.6,779.6 1352.6,772.5 1365.6,779.6 1352.6,786.8" fill="#dfcdb0"/><polygon points="1344.8,774.4 1352.6,779 1352.6,783.5 1344.8,779" fill="#cfc4b4"/><polygon points="1352.6,779 1360.4,774.4 1360.4,779 1352.6,783.5" fill="#b9ab98"/><polygon points="1344.8,774.4 1351.3,767.9 1360.4,773.8 1352.6,779" fill="#6b5a4e"/>
<polygon points="1323.3,785.6 1336.3,778.4 1349.3,785.6 1336.3,792.7" fill="#dfcdb0"/><polygon points="1328.5,780.4 1336.3,784.9 1336.3,789.5 1328.5,784.9" fill="#e9e1d4"/><polygon points="1336.3,784.9 1344.1,780.4 1344.1,784.9 1336.3,789.5" fill="#b9ab98"/><polygon points="1328.5,780.4 1335,773.9 1344.1,779.7 1336.3,784.9" fill="#8a6f5c"/>
<polygon points="1311.4,797.4 1324.4,790.3 1337.4,797.4 1324.4,804.6" fill="#dfcdb0"/><polygon points="1316.6,792.2 1324.4,796.8 1324.4,801.3 1316.6,796.8" fill="#d9cdbb"/><polygon points="1324.4,796.8 1332.2,792.2 1332.2,796.8 1324.4,801.3" fill="#b9ab98"/><polygon points="1316.6,792.2 1323.1,785.7 1332.2,791.6 1324.4,796.8" fill="#7a6252"/>
<polygon points="1336.6,794.5 1349.6,787.3 1362.6,794.5 1349.6,801.6" fill="#dfcdb0"/><polygon points="1341.8,789.3 1349.6,793.8 1349.6,798.4 1341.8,793.8" fill="#f2ede4"/><polygon points="1349.6,793.8 1357.4,789.3 1357.4,793.8 1349.6,798.4" fill="#b9ab98"/><polygon points="1341.8,789.3 1348.3,782.8 1357.4,788.6 1349.6,793.8" fill="#9b8572"/>
<polygon points="1363.3,794.5 1376.3,787.3 1389.3,794.5 1376.3,801.6" fill="#dfcdb0"/><polygon points="1368.5,789.3 1376.3,793.8 1376.3,798.4 1368.5,793.8" fill="#cfc4b4"/><polygon points="1376.3,793.8 1384.1,789.3 1384.1,793.8 1376.3,798.4" fill="#b9ab98"/><polygon points="1368.5,789.3 1375,782.8 1384.1,788.6 1376.3,793.8" fill="#6b5a4e"/>
<polygon points="1391.4,794.5 1404.4,787.3 1417.4,794.5 1404.4,801.6" fill="#dfcdb0"/><polygon points="1396.6,789.3 1404.4,793.8 1404.4,798.4 1396.6,793.8" fill="#e9e1d4"/><polygon points="1404.4,793.8 1412.2,789.3 1412.2,793.8 1404.4,798.4" fill="#b9ab98"/><polygon points="1396.6,789.3 1403.1,782.8 1412.2,788.6 1404.4,793.8" fill="#8a6f5c"/>
<polygon points="1421.1,795.9 1434.1,788.8 1447.1,795.9 1434.1,803.1" fill="#dfcdb0"/><polygon points="1426.3,790.7 1434.1,795.3 1434.1,799.8 1426.3,795.3" fill="#d9cdbb"/><polygon points="1434.1,795.3 1441.9,790.7 1441.9,795.3 1434.1,799.8" fill="#b9ab98"/><polygon points="1426.3,790.7 1432.8,784.2 1441.9,790.1 1434.1,795.3" fill="#7a6252"/>
<polygon points="1455.1,690.7 1468.1,683.6 1481.1,690.7 1468.1,697.9" fill="#dfcdb0"/><polygon points="1460.3,685.5 1468.1,690.1 1468.1,694.6 1460.3,690.1" fill="#f2ede4"/><polygon points="1468.1,690.1 1475.9,685.5 1475.9,690.1 1468.1,694.6" fill="#b9ab98"/><polygon points="1460.3,685.5 1466.8,679 1475.9,684.9 1468.1,690.1" fill="#9b8572"/>
<polygon points="1455.1,720.4 1468.1,713.2 1481.1,720.4 1468.1,727.5" fill="#dfcdb0"/><polygon points="1460.3,715.2 1468.1,719.7 1468.1,724.3 1460.3,719.7" fill="#cfc4b4"/><polygon points="1468.1,719.7 1475.9,715.2 1475.9,719.7 1468.1,724.3" fill="#b9ab98"/><polygon points="1460.3,715.2 1466.8,708.7 1475.9,714.5 1468.1,719.7" fill="#6b5a4e"/>
<polygon points="1456.6,753 1469.6,745.8 1482.6,753 1469.6,760.1" fill="#dfcdb0"/><polygon points="1461.8,747.8 1469.6,752.3 1469.6,756.9 1461.8,752.3" fill="#e9e1d4"/><polygon points="1469.6,752.3 1477.4,747.8 1477.4,752.3 1469.6,756.9" fill="#b9ab98"/><polygon points="1461.8,747.8 1468.3,741.3 1477.4,747.1 1469.6,752.3" fill="#8a6f5c"/>
<polygon points="1456.6,770.7 1469.6,763.6 1482.6,770.7 1469.6,777.9" fill="#dfcdb0"/><polygon points="1461.8,765.5 1469.6,770.1 1469.6,774.6 1461.8,770.1" fill="#d9cdbb"/><polygon points="1469.6,770.1 1477.4,765.5 1477.4,770.1 1469.6,774.6" fill="#b9ab98"/><polygon points="1461.8,765.5 1468.3,759 1477.4,764.9 1469.6,770.1" fill="#7a6252"/>
<circle cx="1166.5" cy="557.8" r="5.2" fill="#f58a2c"/><circle cx="1173" cy="555.2" r="5.2" fill="#f7a043"/><circle cx="1174.3" cy="560.4" r="4.5" fill="#ee7d22"/>
<circle cx="1194.6" cy="652.6" r="5.2" fill="#f58a2c"/><circle cx="1201.1" cy="650" r="5.2" fill="#f7a043"/><circle cx="1202.4" cy="655.2" r="4.5" fill="#ee7d22"/>
<circle cx="1234.6" cy="660" r="5.2" fill="#f58a2c"/><circle cx="1241.1" cy="657.4" r="5.2" fill="#f7a043"/><circle cx="1242.4" cy="662.6" r="4.5" fill="#ee7d22"/>
<circle cx="1412.4" cy="700" r="5.2" fill="#f58a2c"/><circle cx="1418.9" cy="697.4" r="5.2" fill="#f7a043"/><circle cx="1420.2" cy="702.6" r="4.5" fill="#ee7d22"/>
<circle cx="1357.6" cy="731.1" r="5.2" fill="#f58a2c"/><circle cx="1364.1" cy="728.5" r="5.2" fill="#f7a043"/><circle cx="1365.4" cy="733.7" r="4.5" fill="#ee7d22"/>
<polygon points="1046.2,626.1 1042.6,636.9 1049.8,636.9" fill="#2f7a4f"/><polygon points="1051.6,629.7 1048.9,638.7 1054.7,638.7" fill="#266a44"/>
<polygon points="1400.3,611.3 1396.7,622.1 1403.9,622.1" fill="#2f7a4f"/><polygon points="1405.7,614.9 1403,623.9 1408.8,623.9" fill="#266a44"/>
<polygon points="1306.9,700.2 1303.3,711 1310.5,711" fill="#2f7a4f"/><polygon points="1312.3,703.8 1309.6,712.8 1315.5,712.8" fill="#266a44"/>
<polygon points="1389.9,746.1 1386.3,756.9 1393.5,756.9" fill="#2f7a4f"/><polygon points="1395.3,749.7 1392.6,758.7 1398.4,758.7" fill="#266a44"/>
<polygon points="709,162.6 722,155.4 735,162.6 722,169.8" fill="#dfcdb0"/><polygon points="714.2,157.4 722,161.9 722,166.5 714.2,161.9" fill="#e9e1d4"/><polygon points="722,161.9 729.8,157.4 729.8,161.9 722,166.5" fill="#b9ab98"/><polygon points="714.2,157.4 720.7,150.9 729.8,156.8 722,161.9" fill="#8a6f5c"/>
<ellipse cx="707.6" cy="154" rx="4.8" ry="4.3" fill="#a9c14f"/><ellipse cx="713" cy="155.8" rx="4.2" ry="3.6" fill="#8fae44"/>
<polygon points="727,172.6 740,165.4 753,172.6 740,179.8" fill="#dfcdb0"/><polygon points="732.2,167.4 740,171.9 740,176.5 732.2,171.9" fill="#d9cdbb"/><polygon points="740,171.9 747.8,167.4 747.8,171.9 740,176.5" fill="#b9ab98"/><polygon points="732.2,167.4 738.7,160.9 747.8,166.8 740,171.9" fill="#7a6252"/>
<ellipse cx="725.6" cy="164" rx="4.8" ry="4.3" fill="#a9c14f"/><ellipse cx="731" cy="165.8" rx="4.2" ry="3.6" fill="#8fae44"/>
<polygon points="752,184.6 765,177.4 778,184.6 765,191.8" fill="#dfcdb0"/><polygon points="757.2,179.4 765,183.9 765,188.5 757.2,183.9" fill="#f2ede4"/><polygon points="765,183.9 772.8,179.4 772.8,183.9 765,188.5" fill="#b9ab98"/><polygon points="757.2,179.4 763.7,172.9 772.8,178.8 765,183.9" fill="#9b8572"/>
<ellipse cx="750.6" cy="176" rx="4.8" ry="4.3" fill="#a9c14f"/><ellipse cx="756" cy="177.8" rx="4.2" ry="3.6" fill="#8fae44"/>
<g><clipPath id="mmc"><polygon points="1742.8,879.9 1856.4,953 1780,1071.8 1665.8,998.4"/></clipPath>
<polygon points="1742.8,879.9 1856.4,953 1780,1071.8 1665.8,998.4" fill="#6fb57e"/>
<g clip-path="url(#mmc)">
<polygon points="1742.8,879.9 1856.4,953 1850.6,961.9 1737,888.8" fill="#4db4ff"/>
<polyline points="1736.6,889.4 1850.2,962.5" stroke="#e8f4ff" stroke-width="0.8" fill="none"/>
<path d="M1744.6 894.5 L1673.8 1003.5 M1743.3 913.8 L1689.4 996.8 M1740.8 937.5 L1706.2 990.8 M1749.9 943.3 L1715.3 996.6 M1768.3 929.9 L1706.7 1024.7 M1765.8 953.5 L1715.8 1030.6 M1793.4 925.9 L1730.3 1023.1 M1781.7 963.8 L1739.4 1028.9 M1800.1 950.4 L1738.5 1045.2 M1818.4 942 L1747.6 1051 M1806.7 979.9 L1764.4 1045 M1813.5 984.2 L1778.9 1037.6 M1821.5 989.4 L1786.8 1042.7 M1732.8 895.3 L1812.3 946.5 M1744.4 914.6 L1806.9 954.8 M1739 922.9 L1818.6 974 M1751.5 940.9 L1814 981.1 M1746.1 949.2 L1808.6 989.4 M1707.4 934.4 L1821 1007.5 M1702 942.7 L1781.5 993.9 M1696.6 951 L1793.2 1013.1 M1692 958.1 L1805.6 1031.2 M1720.7 988.3 L1800.2 1039.5 M1715.3 996.6 L1777.8 1036.8 M1692.8 994 L1772.4 1045.1 M1670.4 991.3 L1784 1064.4 M1748.2 1040.7 L1743.3 1048.3 M1801.2 1035.8 L1802.2 1036.4 M1766 1057.5 L1763.6 1061.3 M1750.3 1009.5 L1758.8 1015 M1789.8 1013.7 L1783.3 1023.7 M1683.1 987.5 L1702.3 999.8 M1689.7 983.6 L1682 995.4 M1731.9 934.1 L1748 944.5 M1831.2 960.3 L1821.7 974.9 M1690.4 971.7 L1700.6 978.2 M1767.2 1060.7 L1765.9 1062.8 M1827.1 997.8 L1827.2 997.9 M1801.1 938.9 L1795.4 947.7 M1739.1 986.7 L1746.9 991.7 M1679.8 987.4 L1673 997.8 M1781.9 1057.5 L1786.6 1060.5 M1751.4 980.9 L1741.6 996 M1764 994.9 L1778.1 1004" stroke="#46648f" stroke-width="1.15" fill="none" opacity=".9"/>
<path d="M1785.4 943.2h2.5v2.3h-1.6zM1777.3 957.3h3.6v2h-1.6zM1772.2 943.1h2.4v2.1h-1.6zM1790.3 949.8h2.9v1.3h-1.6zM1762.6 934h3v1.7h-1.6zM1764.2 927.7h1.6v1.3h-1.6zM1753.9 918.7h2.1v1.9h-1.6zM1764.1 937.2h2.3v1.7h-1.6zM1766.4 950.6h2.2v1.8h-1.6zM1773.7 941.9h2.7v2.3h-1.6zM1773 953.4h3.2v1.6h-1.6zM1781.7 960.5h3v1.4h-1.6zM1771.9 955.4h3.3v1.9h-1.6zM1776.9 940.6h2.3v2.2h-1.6zM1781.3 939.6h2.1v1.4h-1.6zM1766.3 940.9h3.2v2.5h-1.6zM1780 956.4h3.2v2.2h-1.6zM1775.1 936.8h1.9v1.6h-1.6zM1774.2 937.4h2.3v1.8h-1.6zM1765.2 946h3.4v1.4h-1.6zM1801.7 951.9h3.4v2.7h-1.6zM1751.1 946.6h3.5v1.5h-1.6zM1767.7 925.8h2.9v2h-1.6zM1774.1 957.1h2.1v1.3h-1.6zM1764.7 937.8h3.2v1.3h-1.6zM1785.9 939.5h3.4v2.5h-1.6zM1783.9 939.8h1.6v2.3h-1.6zM1780.8 956.7h2.9v2h-1.6zM1754.4 949.5h2.8v1.7h-1.6zM1779.6 974.7h2.6v2.4h-1.6zM1771 951.1h2.7v2.4h-1.6zM1788.3 961.3h3.4v2.4h-1.6zM1774.3 943.1h2.9v2.5h-1.6zM1783.4 948.6h2.1v2h-1.6zM1764.1 946h3.2v1.2h-1.6zM1780.2 948.2h1.8v1.3h-1.6zM1795.4 946.9h1.8v2h-1.6zM1772.4 955.3h2.3v2.2h-1.6zM1763.2 936.9h2v1.7h-1.6zM1787.1 955.2h3v1.8h-1.6zM1781.2 948.5h2.3v2.1h-1.6zM1773.4 935.5h3.2v2.1h-1.6zM1765.1 945.2h2.6v2.3h-1.6zM1760.7 946.9h2.5v1.6h-1.6zM1755.7 936.2h1.7v1.8h-1.6zM1755.6 947.3h3.5v1.8h-1.6zM1787.1 938.2h2.1v1.9h-1.6zM1792.9 960.1h2.9v2.5h-1.6zM1774.2 931.6h3.1v2h-1.6zM1788.6 954.8h1.6v1.4h-1.6zM1773.6 941.3h1.8v1.3h-1.6zM1778 941.3h1.6v2.5h-1.6zM1794 960.8h2.9v2.5h-1.6zM1787.3 944.1h3.2v1.3h-1.6zM1771.9 933.1h3v1.4h-1.6zM1766.8 921.8h1.7v1.7h-1.6zM1751.9 931.8h2.1v1.5h-1.6zM1778.2 965.4h3.1v1.8h-1.6zM1768.5 949h2.3v1.8h-1.6zM1787.5 952.7h3.5v1.8h-1.6zM1772.1 938.4h3v2.3h-1.6zM1764.4 932.2h2.6v2.2h-1.6zM1778.2 942.1h1.8v2.3h-1.6zM1784.2 941.4h2.5v2.3h-1.6zM1779.7 956.2h2v2.1h-1.6zM1772.7 953.5h3v2.6h-1.6zM1773.4 965.9h2.4v2.5h-1.6zM1765 938.2h2v1.2h-1.6zM1763.2 942.3h1.9v1.7h-1.6zM1770 956.5h1.9v2.7h-1.6zM1759.1 941.6h2.5v2.5h-1.6zM1776.9 934.7h2.6v2.3h-1.6zM1778.8 938.4h3.1v2.6h-1.6zM1766.3 943.3h2.1v2.3h-1.6zM1754.1 919.2h3.3v1.6h-1.6zM1779.5 956h2v2.3h-1.6zM1784.6 932.2h2.1v2.5h-1.6zM1772.2 957.8h3.1v1.3h-1.6zM1795.3 958.6h2.2v1.7h-1.6zM1756.7 933.2h1.6v1.7h-1.6zM1763.1 945.1h2v2.1h-1.6zM1784.2 944.3h2.7v1.4h-1.6zM1775.7 966h1.8v2.5h-1.6zM1777.6 942.8h3.5v1.8h-1.6zM1771.7 928.9h2.2v2.2h-1.6zM1757.7 926.7h2.1v2.3h-1.6zM1789.6 944.9h2.7v1.4h-1.6zM1763.4 941.5h3v2.2h-1.6zM1766.6 939.8h2.9v2.1h-1.6zM1790.1 964.7h2.9v1.4h-1.6zM1779.1 943.3h2.3v2.3h-1.6zM1759.8 933.9h2.9v1.9h-1.6zM1773 952.2h1.7v2.3h-1.6zM1770.7 932.2h3.1v1.7h-1.6zM1775.8 958.9h3.3v1.3h-1.6zM1765.3 941.5h3.1v1.7h-1.6zM1770.8 950.9h2.7v2.4h-1.6zM1765.2 955.2h1.8v1.6h-1.6zM1779.4 949.6h3.2v2.3h-1.6zM1778.7 954h2.4v2.3h-1.6zM1777.1 931.5h2.8v1.4h-1.6zM1769.1 946.1h2.7v2.1h-1.6zM1778.8 955.9h3.2v1.2h-1.6zM1776 927.2h3.5v1.8h-1.6zM1758.3 936.2h2.9v2.7h-1.6zM1767.9 935.6h3.3v1.9h-1.6zM1756.2 931h1.6v2.4h-1.6zM1764 932.8h2.6v1.9h-1.6zM1782.4 963.1h1.7v2h-1.6zM1763.8 933.8h2.7v2.6h-1.6zM1777.8 942h3.2v2.1h-1.6zM1785.2 949.5h2.1v1.3h-1.6zM1746.6 932h2.2v2.5h-1.6zM1770.4 938.7h3.3v2.1h-1.6zM1788.3 941.6h3.1v1.7h-1.6zM1776.8 925.8h3.3v1.9h-1.6zM1771.1 933.2h1.8v1.3h-1.6zM1781.7 948.8h1.9v1.9h-1.6zM1766 931.6h2.4v2.2h-1.6zM1772.8 959.2h3.1v1.8h-1.6zM1790.2 965.2h3v1.8h-1.6zM1766.9 949.9h2.8v1.5h-1.6zM1781.9 946.2h3.2v1.4h-1.6zM1767.1 943.6h2v1.5h-1.6zM1769.3 947.9h1.7v1.4h-1.6zM1783.6 955.3h1.7v1.2h-1.6zM1763.8 944.2h3v1.3h-1.6zM1766.2 947h1.7v2.6h-1.6zM1776.3 951h2.5v1.4h-1.6zM1764.5 935.9h1.8v1.3h-1.6zM1770.3 936.1h3.2v1.9h-1.6zM1781.8 943h2.1v1.6h-1.6zM1776.5 933.4h2.3v1.3h-1.6zM1754.3 917.9h2.8v1.2h-1.6zM1779.2 946.6h1.9v1.3h-1.6zM1791.3 952.7h3.4v1.5h-1.6zM1786.4 945.6h3.2v2.6h-1.6zM1776.5 943.8h2.2v2.1h-1.6zM1778.2 943.9h2.2v2.5h-1.6zM1784.6 952.5h2.3v2.2h-1.6zM1779.6 943.1h3.1v2.3h-1.6zM1778.2 935.6h3.4v1.7h-1.6zM1768 945.6h3.2v1.9h-1.6zM1775 953.2h3v2.1h-1.6zM1768.3 934.2h2.6v1.4h-1.6zM1772.8 941.9h2.5v2.3h-1.6zM1770.5 939.5h2.1v2.5h-1.6zM1754.4 924.9h3.3v1.9h-1.6zM1786 938.6h2.3v1.8h-1.6zM1785.8 950.9h3.5v1.4h-1.6zM1768.3 940.8h1.8v2.2h-1.6zM1775.2 949h1.9v2.2h-1.6zM1772.3 942.9h2.1v2.7h-1.6zM1780.6 964.3h2.4v2.4h-1.6zM1754.7 929.6h2.7v1.5h-1.6zM1777.1 950.2h3.3v1.4h-1.6zM1804.8 955.4h2v2.5h-1.6zM1786.8 952.3h2v2.4h-1.6zM1758.8 931.8h3.1v2.5h-1.6zM1768.5 952.3h2.5v1.4h-1.6zM1778.4 935.1h3.2v1.5h-1.6zM1760.7 938.2h3.1v1.3h-1.6zM1769.3 951h1.7v2h-1.6zM1769.8 933.8h2.9v2.1h-1.6zM1779.1 958.7h3.6v1.7h-1.6zM1770.2 945.6h2v1.4h-1.6zM1788.8 942h3.3v2.7h-1.6zM1749.2 924.5h2.7v1.8h-1.6zM1795.5 943.6h3.5v1.9h-1.6zM1772.7 934.8h3.6v2.6h-1.6zM1773.8 963.6h2v1.3h-1.6zM1769.9 935.8h2.6v2.2h-1.6zM1793.7 952.8h2.2v1.8h-1.6zM1767.5 954.2h3.1v1.6h-1.6zM1783.3 950.9h2.4v1.3h-1.6zM1789.3 960.1h3v2.7h-1.6zM1796.5 947.6h2.3v1.4h-1.6zM1772.2 958.7h2.7v2h-1.6zM1764.2 954.6h2.2v1.9h-1.6zM1786.3 936.9h2.2v1.6h-1.6zM1774.2 942.9h1.9v2h-1.6zM1766.8 941h1.7v1.5h-1.6zM1772.3 933.9h3.6v2.4h-1.6zM1776.9 944.5h2v1.2h-1.6zM1765.6 945.1h1.7v2h-1.6zM1783.7 950.7h2.1v2.4h-1.6zM1767.4 945.6h1.7v1.8h-1.6zM1758.8 930.6h3.4v2.4h-1.6zM1775.7 952.4h3.1v2.4h-1.6zM1752 937.4h2.7v1.6h-1.6zM1775.5 946.8h2.9v2.5h-1.6zM1782.9 940.9h2.9v2.6h-1.6zM1776.4 933.7h2.4v2h-1.6zM1779.2 953.6h3v2.7h-1.6zM1761.8 938.2h2.3v1.9h-1.6zM1775 935.2h3.5v1.4h-1.6zM1771.8 959.8h2.4v2.5h-1.6zM1780.3 927.8h2.8v1.2h-1.6zM1759.3 935.2h2.6v1.6h-1.6zM1761.2 922.1h1.8v2.2h-1.6zM1767.1 949.8h3.4v2.6h-1.6zM1767.8 937.9h3.4v1.5h-1.6zM1761.7 951.7h2.2v1.6h-1.6zM1798 943.8h2.2v1.8h-1.6zM1774.3 951.7h2.1v2.7h-1.6zM1782.3 949.2h2v1.3h-1.6zM1754.5 936.6h3.3v2.1h-1.6zM1774.2 943.2h2.2v2.6h-1.6zM1783.2 949.3h2.6v1.6h-1.6zM1770.3 942.3h2.1v2.6h-1.6zM1794.5 964.3h2v2.7h-1.6zM1762.6 929.8h1.9v1.3h-1.6zM1772.6 938.2h2v2.4h-1.6zM1775.9 942.5h3.5v2h-1.6zM1770.9 947.9h2.4v2.7h-1.6zM1774.4 951.8h1.9v1.4h-1.6zM1764 956.9h1.8v1.5h-1.6zM1806.5 941.4h3.6v1.6h-1.6zM1762.6 958h2.6v2.3h-1.6zM1773.6 946.7h2.3v2.3h-1.6zM1773.2 932.7h2.5v2h-1.6zM1762 944.7h3.3v1.5h-1.6zM1747.9 925.9h3.3v1.5h-1.6zM1794.1 945.5h1.9v1.6h-1.6zM1776.1 949.2h3.6v1.8h-1.6zM1776.9 941.7h1.6v2.5h-1.6zM1774.8 918.3h3v2h-1.6zM1773.2 940h2.7v1.9h-1.6zM1786.7 956.7h2.2v2h-1.6zM1768.8 948.1h2.3v2.1h-1.6zM1799.9 948.3h3.3v2.5h-1.6zM1774.8 967.5h2.1v1.4h-1.6zM1755.3 939.1h2.3v2.2h-1.6zM1775.6 966.7h2.5v1.9h-1.6zM1749.8 934.2h3.6v2h-1.6zM1760.6 944.8h1.7v1.8h-1.6zM1781.2 933.5h1.7v2.5h-1.6zM1755.4 955.5h2.3v1.5h-1.6zM1749.4 932.1h2.5v2.5h-1.6zM1768.6 934.6h2.2v2h-1.6zM1766.8 947.1h2.9v2.5h-1.6zM1767.6 939.8h2v1.8h-1.6zM1768.2 939.3h1.8v1.7h-1.6zM1774.1 947.6h2.7v2.6h-1.6zM1754.6 935.9h3.3v2.5h-1.6zM1782.9 941.4h3v1.4h-1.6zM1780.2 939.8h2.6v2.5h-1.6zM1774.2 953.3h3.2v2.1h-1.6zM1776.7 946.5h2.3v1.2h-1.6zM1776 939.7h2.1v1.8h-1.6zM1761.6 940.1h2.9v2.2h-1.6zM1769.7 945.5h3.6v2.2h-1.6zM1786.4 951.9h3.1v2.7h-1.6zM1775.6 945.2h2.6v1.8h-1.6zM1787.5 937.5h2.3v1.8h-1.6zM1750.2 928.8h2v1.8h-1.6zM1790.3 954.8h1.7v2.6h-1.6zM1758.6 938.3h1.8v1.5h-1.6zM1752.9 941.8h2.7v1.6h-1.6zM1790.3 946.8h2.7v1.5h-1.6zM1772.7 961.5h1.9v2h-1.6zM1764.2 935.9h3.1v2.6h-1.6zM1781.9 934.9h2v1.3h-1.6zM1766 945h2v2.5h-1.6zM1784 973.4h3.5v1.4h-1.6zM1782.3 941.6h2v1.5h-1.6zM1788 950h2.4v2.5h-1.6zM1775.1 941.7h2.4v1.8h-1.6zM1779.9 955.6h2.1v2.2h-1.6zM1772.2 949.6h2v1.9h-1.6zM1765.2 939.1h3v1.5h-1.6zM1762.9 930.6h2v2.3h-1.6zM1765 948.4h2.8v2.1h-1.6zM1770.7 944.9h3.2v2.5h-1.6zM1759.1 940.8h2.1v2.5h-1.6zM1768.8 937h3.2v2.7h-1.6zM1760.7 964.1h2.6v1.5h-1.6zM1769.2 935h3.1v2.1h-1.6zM1787.3 954.2h3.3v1.9h-1.6zM1750.3 933.6h2.5v1.9h-1.6zM1752.6 930.3h2v1.3h-1.6zM1771.2 932.2h2.2v2.5h-1.6zM1782.3 938.9h3.6v2.5h-1.6zM1771.4 936.1h1.6v2.2h-1.6zM1770.2 934.9h2.6v2.1h-1.6zM1778.7 968h2.7v1.8h-1.6zM1787.7 954.6h2.2v2.3h-1.6zM1782 959.1h2v1.8h-1.6zM1768.5 940.6h1.7v1.9h-1.6zM1781.5 962.6h1.9v1.4h-1.6zM1747.1 932.4h3.3v2h-1.6zM1771.3 946.6h2.2v1.7h-1.6zM1778.8 943.7h3.5v1.9h-1.6zM1766.7 944.8h3.5v1.5h-1.6zM1760.1 935.8h2v1.5h-1.6zM1793.8 947.7h3.1v2.6h-1.6zM1791.3 956.4h3.1v1.5h-1.6zM1746.2 943h2.3v2.3h-1.6zM1786.5 958.4h2.1v2h-1.6zM1762.2 953.6h3.1v2h-1.6zM1766.4 933.5h3.2v1.6h-1.6zM1758.2 936.7h2.4v1.3h-1.6zM1785.7 958h2v2.3h-1.6zM1745.3 935.9h3.3v2.3h-1.6zM1772.3 946.7h2.7v2.3h-1.6zM1779.8 942.7h1.9v2.7h-1.6zM1769.7 932.9h3.1v1.4h-1.6zM1756.3 935.9h2.8v1.4h-1.6zM1787.7 956.8h3.4v1.4h-1.6zM1778.8 945.5h3.2v1.8h-1.6zM1741.2 943.1h2.8v1.6h-1.6zM1773.6 943.4h2.2v2.2h-1.6zM1776.1 947.9h2.6v1.7h-1.6zM1779 944.6h3.2v1.8h-1.6zM1775.2 935.4h2.9v1.7h-1.6zM1779.3 961.3h3.2v1.7h-1.6zM1778.6 960.3h1.8v1.7h-1.6zM1759.4 935.3h2.8v1.6h-1.6zM1776.7 945.2h2.3v1.5h-1.6zM1764.8 938.7h3.1v2.1h-1.6zM1760 928.2h2.6v1.8h-1.6zM1773.5 948.8h3.2v2h-1.6zM1799.3 962.3h2.8v2.1h-1.6zM1769.1 945.6h3.6v1.5h-1.6zM1753.2 963.4h1.8v1.9h-1.6zM1765.7 942.7h3.4v1.8h-1.6zM1787.2 948.2h1.6v2.3h-1.6zM1786.2 933.3h1.7v2.2h-1.6zM1772.8 959.4h2.2v1.7h-1.6zM1787.9 956.7h1.8v2.6h-1.6z" fill="#2d3338"/>
<rect x="1673.3" y="997.8" width="2.6" height="2.6" fill="#2d3338"/>
<rect x="1751.1" y="914.7" width="2.6" height="2.6" fill="#2d3338"/>
<rect x="1782.9" y="1002.8" width="2.6" height="2.6" fill="#2d3338"/>
<rect x="1787.2" y="1002.2" width="2.6" height="2.6" fill="#2d3338"/>
<rect x="1801" y="946.7" width="2.6" height="2.6" fill="#2d3338"/>
<rect x="1776.1" y="995.7" width="2.6" height="2.6" fill="#2d3338"/>
<rect x="1844" y="962.7" width="2.6" height="2.6" fill="#2d3338"/>
<rect x="1696" y="968.9" width="2.6" height="2.6" fill="#2d3338"/>
<rect x="1811.1" y="1004.4" width="2.6" height="2.6" fill="#2d3338"/>
<rect x="1777" y="1003.5" width="2.6" height="2.6" fill="#2d3338"/>
<rect x="1747.3" y="970" width="2.6" height="2.6" fill="#2d3338"/>
<rect x="1801.4" y="938.8" width="2.6" height="2.6" fill="#2d3338"/>
<rect x="1718.7" y="992.8" width="2.6" height="2.6" fill="#2d3338"/>
<rect x="1731.6" y="961.1" width="2.6" height="2.6" fill="#2d3338"/>
<rect x="1739.5" y="948.7" width="2.6" height="2.6" fill="#2d3338"/>
<rect x="1757.5" y="1018.6" width="2.6" height="2.6" fill="#2d3338"/>
<rect x="1810.8" y="1012.5" width="2.6" height="2.6" fill="#2d3338"/>
<rect x="1734.8" y="942.5" width="2.6" height="2.6" fill="#2d3338"/>
<rect x="1725.1" y="921.6" width="2.6" height="2.6" fill="#2d3338"/>
<rect x="1759.2" y="999.7" width="2.6" height="2.6" fill="#2d3338"/>
<rect x="1749.9" y="928.8" width="2.6" height="2.6" fill="#2d3338"/>
<rect x="1733.9" y="918" width="2.6" height="2.6" fill="#2d3338"/>
<rect x="1774.4" y="955.6" width="2.6" height="2.6" fill="#2d3338"/>
<rect x="1796.3" y="1016.6" width="2.6" height="2.6" fill="#2d3338"/>
<rect x="1743.9" y="962.6" width="2.6" height="2.6" fill="#2d3338"/>
<rect x="1688.9" y="972.8" width="2.6" height="2.6" fill="#2d3338"/>
<rect x="1795.2" y="985.4" width="2.6" height="2.6" fill="#2d3338"/>
<rect x="1798.6" y="973.8" width="2.6" height="2.6" fill="#2d3338"/>
<rect x="1787" y="918" width="6" height="6" fill="#2d3338" transform="rotate(33 1790 921)"/>
<rect x="1820" y="940" width="6" height="6" fill="#2d3338" transform="rotate(33 1823 943)"/>
</g>
<polygon points="1742.8,879.9 1856.4,953 1780,1071.8 1665.8,998.4" fill="none" stroke="#2b5566" stroke-width="1"/>
<rect x="1733.2" y="913.3" width="76" height="79.4" fill="none" stroke="#7ef3e6" stroke-width="1.2"/>
</g>
</svg>
<div id="ui" style="position:absolute;left:0;top:0;width:1920px;height:1080px;will-change:transform">
<div class="win" style="left:603px;top:-4px;width:715px;height:48px;background:#546e7a;box-shadow:0 2px 5px rgba(0,0,0,.5)">
</div>
<span class="t" style="left:617.2px;top:15.1px;font-size:14px;line-height:14px;color:#e6ebee;letter-spacing:-0.06px;">55 070 455</span>
<span class="t" style="left:720.2px;top:15.1px;font-size:14px;line-height:14px;color:#e6ebee;letter-spacing:0.01px;">okt 22 2010</span>
<svg class="r" style="left:817px;top:12px" width="18" height="20" viewBox="0 0 18 20"><path d="M9 1 L16 19 L9 15.3 L2 19 Z" fill="#b8c4ca"/></svg>
<span class="t" style="left:842.9px;top:15.1px;font-size:14px;line-height:14px;color:#e6ebee;letter-spacing:-0.15px;">The North</span>
<svg class="r" style="left:985px;top:11px" width="24" height="24" viewBox="0 0 24 24"><circle cx="11.5" cy="11" r="10" fill="#eceff1"/><path d="M11.5 5 v6.5 l4 2.3" stroke="#546e7a" stroke-width="1.8" fill="none"/></svg>
<div class="r" style="left:1025.5px;top:21px;width:46px;height:2.4px;background:#14988a;"></div>
<div class="r" style="left:1071px;top:21px;width:46px;height:2.4px;background:#c3ccd0;"></div>
<div class="r" style="left:1022.5px;top:19.2px;width:6px;height:6px;border-radius:50%;background:#14988a"></div>
<div class="r" style="left:1045px;top:19.2px;width:6px;height:6px;border-radius:50%;background:#14988a"></div>
<div class="r" style="left:1091.3px;top:19.5px;width:5.4px;height:5.4px;border-radius:50%;background:#c3ccd0"></div>
<div class="r" style="left:1114.3px;top:19.5px;width:5.4px;height:5.4px;border-radius:50%;background:#c3ccd0"></div>
<div class="r" style="left:1063px;top:14px;width:16.4px;height:16.4px;border-radius:50%;background:#14988a"></div>
<div class="r" style="left:1134px;top:4px;width:127px;height:36px;background:#587079;"></div>
<svg class="r" style="left:1134px;top:2px" width="127" height="40" viewBox="1134 2 127 40"><polyline points="1150,37 1158,31 1166,20 1173,10 1180,16 1190,20 1203,22 1213,24 1225,26.5 1234,26 1241,18 1248,10 1256,5.5" fill="none" stroke="#000" stroke-width="1.6" stroke-linejoin="round"/></svg>
<div class="r" style="left:1250px;top:20px;width:10.5px;height:20px;background:#000;"></div>
<div class="r" style="left:1289.4px;top:15.8px;width:18.2px;height:1.9px;background:#eceff1;"></div>
<div class="r" style="left:1289.4px;top:21.3px;width:18.2px;height:1.9px;background:#eceff1;"></div>
<div class="r" style="left:1289.4px;top:26.8px;width:18.2px;height:1.9px;background:#eceff1;"></div>
<div class="win" style="left:133px;top:186px;width:880px;height:663px;background:#e9e9e9"></div>
<div class="r" style="left:133px;top:186px;width:880px;height:48px;background:#78909c;"></div>
<span class="t" style="left:150.8px;top:202.5px;font-size:15.4px;line-height:15.4px;color:#f3f5f6;-webkit-text-stroke:0.5px #f3f5f6;letter-spacing:1.69px;">Products</span>
<div class="card" style="left:149px;top:250px;width:848px;height:41px"></div>
<span class="t" style="left:168.8px;top:264px;font-size:14.5px;line-height:14.5px;color:#262626;letter-spacing:-0.14px;">All</span>
<div class="r" style="left:431.2px;top:269.5px;width:0;height:0;border-left:4.5px solid transparent;border-right:4.5px solid transparent;border-top:4.5px solid #757575"></div>
<span class="t" style="left:483px;top:264px;font-size:14.5px;line-height:14.5px;color:#262626;letter-spacing:-0.41px;">The North</span>
<div class="r" style="left:595.5px;top:269.5px;width:0;height:0;border-left:4.5px solid transparent;border-right:4.5px solid transparent;border-top:4.5px solid #757575"></div>
<span class="t" style="left:646.3px;top:264px;font-size:14.5px;line-height:14.5px;color:#262626;letter-spacing:-0.43px;">Consumer</span>
<div class="r" style="left:759.2px;top:269.5px;width:0;height:0;border-left:4.5px solid transparent;border-right:4.5px solid transparent;border-top:4.5px solid #757575"></div>
<span class="t" style="left:811.5px;top:264px;font-size:14.5px;line-height:14.5px;color:#262626;">All</span>
<div class="card" style="left:149px;top:308px;width:848px;height:332px;background:#fff"></div>
<div class="r" style="left:149px;top:308px;width:848px;height:36px;background:#f3f3f3;"></div>
<div class="r" style="left:149px;top:344px;width:848px;height:1px;background:#e2e2e2;"></div>
<span class="t" style="left:439.9px;top:310.3px;font-size:13.5px;line-height:13.5px;color:#1c1c1c;font-weight:700;letter-spacing:0.68px;">The North</span>
<span class="t" style="left:250.7px;top:328.6px;font-size:13.5px;line-height:13.5px;color:#1c1c1c;font-weight:700;letter-spacing:0.5px;">Revenue</span>
<span class="t" style="left:360px;top:328.6px;font-size:13.5px;line-height:13.5px;color:#1c1c1c;font-weight:700;letter-spacing:0.89px;">Market share</span>
<span class="t" style="left:547.5px;top:328.6px;font-size:13.5px;line-height:13.5px;color:#1c1c1c;font-weight:700;letter-spacing:0.81px;">Local</span>
<span class="t" style="left:623px;top:328.6px;font-size:13.5px;line-height:13.5px;color:#1c1c1c;font-weight:700;letter-spacing:0.53px;">Avg</span>
<span class="t" style="left:728.7px;top:328.6px;font-size:13.5px;line-height:13.5px;color:#1c1c1c;font-weight:700;letter-spacing:0.5px;">Revenue</span>
<svg class="r" style="left:153px;top:346px" width="80" height="77.6" viewBox="0 0 80 77.6" preserveAspectRatio="none"><filter id="f1" x="-5%" y="-5%" width="110%" height="110%"><feGaussianBlur stdDeviation="0.55"/></filter><rect x="0" y="0" width="80" height="77.6" fill="#777"/><g filter="url(#f1)"><rect width="80" height="78" fill="#7a2c26"/><rect x="0" y="0" width="80" height="16" fill="#b9a58c"/><path d="M-10 10 v8 a9 6 0 0 0 18 0 v-8 z" fill="#c9bfae"/><ellipse cx="-1" cy="10" rx="9" ry="6" fill="#a9782c"/><ellipse cx="-1" cy="9.4" rx="8.6" ry="5.4" fill="#d9b45c"/><ellipse cx="-1" cy="10.3" rx="7.7" ry="4.6" fill="#b5893a"/><ellipse cx="-1" cy="11.4" rx="7.2" ry="4" fill="#e3c377"/><ellipse cx="-0.1" cy="12.2" rx="5" ry="2.5" fill="#f0dfa6"/><ellipse cx="-0.1" cy="10.5" rx="2.7" ry="1.6" fill="#dcbf74"/><path d="M16.5 5.4 v6 a22.5 7 0 0 0 45 0 v-6 z" fill="#cfc4b2"/><ellipse cx="39" cy="5.4" rx="22.5" ry="7" fill="#a9782c"/><ellipse cx="39" cy="4.8" rx="21.6" ry="6.3" fill="#d9b45c"/><ellipse cx="39" cy="5.7" rx="19.4" ry="5.3" fill="#b5893a"/><ellipse cx="39" cy="6.8" rx="18" ry="4.6" fill="#e3c377"/><ellipse cx="41.2" cy="7.6" rx="12.4" ry="2.9" fill="#f0dfa6"/><ellipse cx="41.2" cy="5.9" rx="6.8" ry="1.8" fill="#dcbf74"/><path d="M58.5 17.1 v10 a13 9 0 0 0 26 0 v-10 z" fill="#8a3a30"/><ellipse cx="71.5" cy="17.1" rx="13" ry="9" fill="#a9782c"/><ellipse cx="71.5" cy="16.5" rx="12.5" ry="8.1" fill="#d9b45c"/><ellipse cx="71.5" cy="17.4" rx="11.2" ry="6.8" fill="#b5893a"/><ellipse cx="71.5" cy="18.5" rx="10.4" ry="5.9" fill="#e3c377"/><ellipse cx="72.8" cy="19.3" rx="7.2" ry="3.8" fill="#f0dfa6"/><ellipse cx="72.8" cy="17.6" rx="3.9" ry="2.3" fill="#dcbf74"/><path d="M2.4 24.1 v9 a26.4 9.9 0 0 0 52.8 0 v-9 z" fill="#8f3d33"/><ellipse cx="28.8" cy="24.1" rx="26.4" ry="9.9" fill="#a9782c"/><ellipse cx="28.8" cy="23.5" rx="25.3" ry="8.9" fill="#d9b45c"/><ellipse cx="28.8" cy="24.4" rx="22.7" ry="7.5" fill="#b5893a"/><ellipse cx="28.8" cy="25.5" rx="21.1" ry="6.5" fill="#e3c377"/><ellipse cx="31.4" cy="26.3" rx="14.5" ry="4.2" fill="#f0dfa6"/><ellipse cx="31.4" cy="24.6" rx="7.9" ry="2.6" fill="#dcbf74"/><path d="M52.4 41.2 v16 a16 11 0 0 0 32 0 v-16 z" fill="#d9d3c8"/><ellipse cx="68.4" cy="41.2" rx="16" ry="11" fill="#a9782c"/><ellipse cx="68.4" cy="40.6" rx="15.4" ry="9.9" fill="#d9b45c"/><ellipse cx="68.4" cy="41.5" rx="13.8" ry="8.4" fill="#b5893a"/><ellipse cx="68.4" cy="42.6" rx="12.8" ry="7.3" fill="#e3c377"/><ellipse cx="70" cy="43.4" rx="8.8" ry="4.6" fill="#f0dfa6"/><ellipse cx="62" cy="41.2" rx="6.7" ry="3.3" fill="#5e3d17" transform="rotate(14 62 41.2)"/><ellipse cx="62" cy="41.2" rx="4.5" ry="1.8" fill="#d7b25f" transform="rotate(14 62 41.2)"/><path d="M-1.2 50.5 v16 a23 12.8 0 0 0 46 0 v-16 z" fill="#d8d2c6"/><ellipse cx="21.8" cy="50.5" rx="23" ry="12.8" fill="#a9782c"/><ellipse cx="21.8" cy="49.9" rx="22.1" ry="11.5" fill="#d9b45c"/><ellipse cx="21.8" cy="50.8" rx="19.8" ry="9.7" fill="#b5893a"/><ellipse cx="21.8" cy="51.9" rx="18.4" ry="8.4" fill="#e3c377"/><ellipse cx="24.1" cy="52.7" rx="12.7" ry="5.4" fill="#f0dfa6"/><ellipse cx="12.6" cy="50.5" rx="9.7" ry="3.8" fill="#5e3d17" transform="rotate(14 12.6 50.5)"/><ellipse cx="12.6" cy="50.5" rx="6.4" ry="2" fill="#d7b25f" transform="rotate(14 12.6 50.5)"/><path d="M43.8 67.7 v14 a20 11 0 0 0 40 0 v-14 z" fill="#d5cec0"/><ellipse cx="63.8" cy="67.7" rx="20" ry="11" fill="#a9782c"/><ellipse cx="63.8" cy="67.1" rx="19.2" ry="9.9" fill="#d9b45c"/><ellipse cx="63.8" cy="68" rx="17.2" ry="8.4" fill="#b5893a"/><ellipse cx="63.8" cy="69.1" rx="16" ry="7.3" fill="#e3c377"/><ellipse cx="65.8" cy="69.9" rx="11" ry="4.6" fill="#f0dfa6"/><ellipse cx="65.8" cy="68.2" rx="6" ry="2.9" fill="#dcbf74"/><path d="M-2.2 73 v8 a17 7 0 0 0 34 0 v-8 z" fill="#d5cec0"/><ellipse cx="14.8" cy="73" rx="17" ry="7" fill="#a9782c"/><ellipse cx="14.8" cy="72.4" rx="16.3" ry="6.3" fill="#d9b45c"/><ellipse cx="14.8" cy="73.3" rx="14.6" ry="5.3" fill="#b5893a"/><ellipse cx="14.8" cy="74.4" rx="13.6" ry="4.6" fill="#e3c377"/><ellipse cx="16.5" cy="75.2" rx="9.4" ry="2.9" fill="#f0dfa6"/><ellipse cx="16.5" cy="73.5" rx="5.1" ry="1.8" fill="#dcbf74"/></g></svg>
<div class="r" style="left:237px;top:346px;width:84.5px;height:77.8px;background:#f1f1f1;"></div><div class="r" style="left:314px;top:386.2px;width:7px;height:37.6px;background:#000;"></div><svg class="r" style="left:237px;top:346px" width="85" height="77" viewBox="237 346 85 77"><polyline points="240,379.5 242.5,379.53 245,378.52 247.5,377.86 250,377.42 252.5,377.5 257,379.5 259.5,379.91 262,380.75 264.67,379.12 267.33,376.59 270,375 272.5,373.89 275,374.58 277.5,373.55 280,373 282.5,372.81 285,371.59 287.5,371.72 290,371.09 292.5,370 295,368.94 297.5,368.37 300,367.5 303,367.41 306,368 309,368.01 312,369.25" fill="none" stroke="#000" stroke-width="1.9" stroke-linejoin="round"/></svg><span class="t" style="left:237.4px;top:345.7px;font-size:13px;line-height:13px;color:#333;text-shadow:0 0 2px #fff,0 0 2px #fff,0 0 3px #fff,0 0 3px #fff;letter-spacing:0.53px;">12 000 000</span><span class="t" style="left:237.8px;top:395.2px;font-size:13px;line-height:13px;color:#333;">0</span>
<svg class="r" style="left:322.5px;top:344.2px" width="79" height="79" viewBox="322.5 344.2 79 79"><circle cx="362" cy="383.8" r="37.5" fill="#f5f5f5" stroke="#c4c4c4" stroke-width="1.2"/></svg>
<svg class="r" style="left:402.5px;top:344.2px" width="79" height="79" viewBox="402.5 344.2 79 79"><circle cx="442" cy="383.8" r="37.5" fill="#f5f5f5" stroke="#c4c4c4" stroke-width="1.2"/></svg>
<span class="t" style="left:489.2px;top:347px;font-size:14px;line-height:14px;color:#262626;letter-spacing:-0.1px;">Price</span><span class="t" style="left:489.7px;top:365px;font-size:14px;line-height:14px;color:#262626;letter-spacing:-0.21px;">Quality</span><span class="t" style="left:489.2px;top:383px;font-size:14px;line-height:14px;color:#262626;letter-spacing:0.1px;">Brand</span><span class="t" style="left:489.2px;top:401px;font-size:14px;line-height:14px;color:#262626;letter-spacing:0.07px;">Rating</span><span class="t" style="left:537.3px;top:347px;font-size:14px;line-height:14px;color:#262626;letter-spacing:0.05px;">1,16</span><span class="t" style="left:545px;top:365px;font-size:14px;line-height:14px;color:#262626;letter-spacing:-0.5px;">43</span><span class="t" style="left:544.7px;top:383px;font-size:14px;line-height:14px;color:#262626;letter-spacing:-0.22px;">33</span><span class="t" style="left:544.7px;top:401px;font-size:14px;line-height:14px;color:#262626;letter-spacing:-0.22px;">57</span><div class="r" style="left:567px;top:368.4px;width:30px;height:7.3px;background:#ebebeb;"></div><div class="r" style="left:567px;top:368.4px;width:12.9px;height:7.3px;background:#0b6b4f;"></div><div class="r" style="left:567px;top:386.4px;width:30px;height:7.3px;background:#ebebeb;"></div><div class="r" style="left:567px;top:386.4px;width:9.9px;height:7.3px;background:#f5901e;"></div><span class="t" style="left:605.6px;top:347px;font-size:14px;line-height:14px;color:#262626;letter-spacing:0.05px;">1,16</span><span class="t" style="left:613px;top:365px;font-size:14px;line-height:14px;color:#262626;letter-spacing:-0.5px;">43</span><span class="t" style="left:612.7px;top:383px;font-size:14px;line-height:14px;color:#262626;letter-spacing:-0.22px;">33</span><span class="t" style="left:612.7px;top:401px;font-size:14px;line-height:14px;color:#262626;letter-spacing:-0.22px;">57</span><div class="r" style="left:635px;top:368.4px;width:30px;height:7.3px;background:#ebebeb;"></div><div class="r" style="left:635px;top:368.4px;width:12.9px;height:7.3px;background:#0b6b4f;"></div><div class="r" style="left:635px;top:386.4px;width:30px;height:7.3px;background:#ebebeb;"></div><div class="r" style="left:635px;top:386.4px;width:9.9px;height:7.3px;background:#f5901e;"></div><span class="t" style="left:678.3px;top:347px;font-size:14px;line-height:14px;color:#262626;letter-spacing:0.3px">25<span style="display:inline-block;letter-spacing:0;transform:scaleX(0.8);transform-origin:0 0;margin-left:-0.3px">%</span></span><span class="t" style="left:678.3px;top:365px;font-size:14px;line-height:14px;color:#262626;letter-spacing:0.3px">29<span style="display:inline-block;letter-spacing:0;transform:scaleX(0.8);transform-origin:0 0;margin-left:-0.4px">%</span></span><span class="t" style="left:678.8px;top:383px;font-size:14px;line-height:14px;color:#262626;letter-spacing:0.2px">46<span style="display:inline-block;letter-spacing:0;transform:scaleX(0.8);transform-origin:0 0;margin-left:-0.4px">%</span></span>
<div class="r" style="left:718px;top:346px;width:84.5px;height:72.8px;background:#f1f1f1;"></div><div class="r" style="left:795px;top:375px;width:7px;height:43.8px;background:#000;"></div><svg class="r" style="left:718px;top:346px" width="85" height="72" viewBox="718 346 85 72"><polyline points="721.25,355.75 724.06,356.15 726.88,355.27 729.69,354.64 732.5,355 735,357.3 737.5,358.75 740,361.53 742.5,364.5 745,362.25 747.5,360 750,359.2 752.5,359.52 755,358.59 757.5,358 760,358.42 762.5,357.6 765,357.48 767.5,356.9 770,357.5 772.5,357.44 775,356.61 777.5,354.61 780,354.5 782.5,354.97 785,355.03 787.5,354.5 790,355.67 792.5,356.25" fill="none" stroke="#000" stroke-width="1.9" stroke-linejoin="round"/></svg><div class="r" style="left:718px;top:346px;width:90px;height:20px;overflow:hidden"><span class="t" style="left:0.7px;top:-5px;font-size:13px;line-height:13px;color:#333;letter-spacing:0.5px;">20 000 000</span></div><span class="t" style="left:718.8px;top:390.2px;font-size:13px;line-height:13px;color:#333;">0</span>
<svg class="r" style="left:808px;top:339px" width="80" height="80" viewBox="808 339 80 80"><circle cx="848" cy="379" r="38" fill="#f5f5f5" stroke="#c4c4c4" stroke-width="1.2"/></svg>
<div class="r" style="left:149px;top:429px;width:848px;height:105.5px;background:#b2dfdb;"></div>
<div class="r" style="left:149px;top:428px;width:848px;height:1px;background:#dcdcdc;"></div>
<span class="t" style="left:153.7px;top:430.3px;font-size:13.5px;line-height:13.5px;color:#1c1c1c;font-weight:700;letter-spacing:0.62px;">Board games</span>
<span class="t" style="left:344.7px;top:436.1px;font-size:14px;line-height:14px;color:#262626;letter-spacing:-0.27px;">Brand</span>
<span class="t" style="left:425.4px;top:436.1px;font-size:14px;line-height:14px;color:#262626;letter-spacing:-0.16px;">Retail</span>
<svg class="r" style="left:153px;top:451px" width="80" height="80" viewBox="0 0 80 80" preserveAspectRatio="none"><filter id="f2" x="-5%" y="-5%" width="110%" height="110%"><feGaussianBlur stdDeviation="0.55"/></filter><rect x="0" y="0" width="80" height="80" fill="#777"/><g filter="url(#f2)"><rect width="80" height="80" fill="#0b5d47"/><rect width="80" height="13" fill="#2a1e16"/><rect x="1" y="1" width="6" height="10" rx="2" fill="#b04a22" opacity=".75"/><rect x="12" y="1" width="6" height="10" rx="2" fill="#8a8374" opacity=".75"/><rect x="24" y="1" width="6" height="10" rx="2" fill="#5e5648" opacity=".75"/><rect x="36" y="1" width="6" height="10" rx="2" fill="#8f8878" opacity=".75"/><rect x="47" y="1" width="6" height="10" rx="2" fill="#7a7262" opacity=".75"/><rect x="58" y="1" width="6" height="10" rx="2" fill="#9a9384" opacity=".75"/><rect x="69" y="1" width="6" height="10" rx="2" fill="#8f897a" opacity=".75"/><polygon points="0,14 48,12 80,22 80,30 46,17 0,20" fill="#08503d"/><polygon points="64,18 77,16 77,22 70,23" fill="#c85a1e"/><polygon points="0,40 80,32 80,38 0,50" fill="#084a39"/><polygon points="2,29 50,23 52,25 2,31" fill="#e8e2bd"/><polygon points="12,35 62,27 64,29 12,37" fill="#e8e2bd"/><polygon points="20,38 74,29 76,33 22,41" fill="#c22a22"/><polygon points="11,24 50,19 52,24 13,28" fill="#e3dcae"/><polygon points="30,27 56,23 58,26 30,30" fill="#b5342a"/><rect x="13" y="39" width="14" height="4" fill="#cf2a22" transform="rotate(-5 20 41)"/><ellipse cx="71" cy="42" rx="8" ry="3.5" fill="#d8201c"/><polygon points="43,47 80,42 80,44 43,49" fill="#e8e2bd"/><polygon points="56,54 80,50 80,52 56,56" fill="#e8e2bd"/><polygon points="50,51 80,46 80,48 50,53" fill="#b5342a"/><polygon points="63,58 80,55 80,57 63,60" fill="#b5342a"/><polygon points="0,58 14,56 14,58 0,60" fill="#e8e2bd"/><polygon points="0,66 26,62 26,64 0,68" fill="#e8e2bd"/><polygon points="0,62 18,59 18,61 0,64" fill="#a5392c"/><rect x="25" y="45" width="10" height="9" fill="#e6dfb4"/><rect x="28" y="52" width="8" height="7" fill="#d9d2a6"/><rect x="37" y="50" width="7" height="7" fill="#e6dfb4"/><rect x="32" y="53" width="8" height="8" rx="1.5" fill="#d4221f"/><rect x="43" y="54" width="8" height="8" rx="1.5" fill="#c91f1c"/><g fill="#fff"><circle cx="34" cy="55.5" r=".7"/><circle cx="38" cy="55.5" r=".7"/><circle cx="34" cy="58.5" r=".7"/><circle cx="38" cy="58.5" r=".7"/><circle cx="45.5" cy="56.5" r=".7"/><circle cx="48.5" cy="59.5" r=".7"/></g><polygon points="0,73 80,64 80,80 0,80" fill="#1d120d"/><polygon points="0,70 80,61 80,65 0,74" fill="#0a5541"/><rect x="44" y="72" width="10" height="6" fill="#b8a064"/><rect x="46" y="73" width="3" height="5" fill="#1d120d"/><rect x="70" y="64" width="10" height="3" fill="#c2221f"/></g></svg>
<div class="r" style="left:237px;top:451px;width:84.5px;height:80px;background:#a9d3cf;"></div><div class="r" style="left:314px;top:494px;width:7px;height:37px;background:#000;"></div><svg class="r" style="left:237px;top:451px" width="85" height="80" viewBox="237 451 85 80"><polyline points="240,480.75 242.5,481.12 245,480.07 247.5,479.46 250,480.1 252.5,479.25 255,479.1 257.5,480 260,480.95 262.5,481.75 265,479.48 267.5,478.74 270,476.25 272.5,475.89 275,474.96 277.5,475.07 280,473.75 282.5,473.33 285,471.86 287.5,472.29 290,471.25 292.5,471.15 295,470.42 297.5,469.25 300,469.78 302.5,470.31 305,470 308.5,472.36 312,473.75" fill="none" stroke="#000" stroke-width="1.9" stroke-linejoin="round"/></svg><span class="t" style="left:237.7px;top:452.7px;font-size:13px;line-height:13px;color:#333;text-shadow:0 0 2px #fff,0 0 2px #fff,0 0 3px #fff,0 0 3px #fff;letter-spacing:0.51px;">2 000 000</span><span class="t" style="left:237.8px;top:502.7px;font-size:13px;line-height:13px;color:#333;">0</span>
<svg class="r" style="left:322px;top:451px" width="80" height="80" viewBox="322 451 80 80"><circle cx="362" cy="491" r="38" fill="#f5f5f5" stroke="#bcd" stroke-width="1.2"/><path d="M362 491 L362 453 A38 38 0 0 1 389.33 517.4 Z" fill="#00f200"/></svg>
<svg class="r" style="left:402px;top:451px" width="80" height="80" viewBox="402 451 80 80"><circle cx="442" cy="491" r="38" fill="#f5f5f5" stroke="#bcd" stroke-width="1.2"/><path d="M442 491 L442 453 A38 38 0 0 1 461.29 458.26 Z" fill="#0000f2"/><path d="M442 491 L461.29 458.26 A38 38 0 0 1 469.33 517.4 Z" fill="#00f200"/></svg>
<span class="t" style="left:489.2px;top:454px;font-size:14px;line-height:14px;color:#262626;letter-spacing:-0.1px;">Price</span><span class="t" style="left:489.7px;top:472px;font-size:14px;line-height:14px;color:#262626;letter-spacing:-0.21px;">Quality</span><span class="t" style="left:489.2px;top:490px;font-size:14px;line-height:14px;color:#262626;letter-spacing:0.1px;">Brand</span><span class="t" style="left:489.2px;top:508px;font-size:14px;line-height:14px;color:#262626;letter-spacing:0.07px;">Rating</span><span class="t" style="left:537.3px;top:454px;font-size:14px;line-height:14px;color:#262626;letter-spacing:-0.03px;">14,51</span><span class="t" style="left:545px;top:472px;font-size:14px;line-height:14px;color:#262626;letter-spacing:-0.5px;">42</span><span class="t" style="left:544.7px;top:490px;font-size:14px;line-height:14px;color:#262626;letter-spacing:-0.36px;">35</span><span class="t" style="left:545px;top:508px;font-size:14px;line-height:14px;color:#262626;letter-spacing:-0.5px;">46</span><div class="r" style="left:567px;top:475.4px;width:30px;height:7.3px;background:rgba(0,0,0,.08);"></div><div class="r" style="left:567px;top:475.4px;width:12.6px;height:7.3px;background:#0b6b4f;"></div><div class="r" style="left:567px;top:493.4px;width:30px;height:7.3px;background:rgba(0,0,0,.08);"></div><div class="r" style="left:567px;top:493.4px;width:10.5px;height:7.3px;background:#f5901e;"></div><span class="t" style="left:605.6px;top:454px;font-size:14px;line-height:14px;color:#262626;letter-spacing:-0.06px;">13,08</span><span class="t" style="left:612.7px;top:472px;font-size:14px;line-height:14px;color:#262626;letter-spacing:-0.22px;">39</span><span class="t" style="left:612.6px;top:490px;font-size:14px;line-height:14px;color:#262626;letter-spacing:-0.08px;">22</span><span class="t" style="left:613px;top:508px;font-size:14px;line-height:14px;color:#262626;letter-spacing:-0.5px;">41</span><div class="r" style="left:635px;top:475.4px;width:30px;height:7.3px;background:rgba(0,0,0,.08);"></div><div class="r" style="left:635px;top:475.4px;width:11.7px;height:7.3px;background:#0b6b4f;"></div><div class="r" style="left:635px;top:493.4px;width:30px;height:7.3px;background:rgba(0,0,0,.08);"></div><div class="r" style="left:635px;top:493.4px;width:6.6px;height:7.3px;background:#f5901e;"></div><span class="t" style="left:678.5px;top:454px;font-size:14px;line-height:14px;color:#262626;letter-spacing:0.3px">30<span style="display:inline-block;letter-spacing:0;transform:scaleX(0.8);transform-origin:0 0;margin-left:-0.3px">%</span></span><span class="t" style="left:678.3px;top:472px;font-size:14px;line-height:14px;color:#262626;letter-spacing:0.3px">28<span style="display:inline-block;letter-spacing:0;transform:scaleX(0.8);transform-origin:0 0;margin-left:-0.3px">%</span></span><span class="t" style="left:678.8px;top:490px;font-size:14px;line-height:14px;color:#262626;letter-spacing:0.2px">42<span style="display:inline-block;letter-spacing:0;transform:scaleX(0.8);transform-origin:0 0;margin-left:-0.4px">%</span></span>
<svg class="r" style="left:686px;top:505px" width="20" height="20" viewBox="0 0 20 20"><path d="M8 2.5 H2.5 V17.5 H17.5 V12 M11 2.5 H17.5 V9 M17.5 2.5 L8 12" fill="none" stroke="#4a5a5a" stroke-width="1.7"/></svg>
<div class="r" style="left:718px;top:446px;width:84.5px;height:80px;background:#a9d3cf;"></div><div class="r" style="left:795px;top:489.2px;width:7px;height:36.8px;background:#000;"></div><svg class="r" style="left:718px;top:446px" width="85" height="80" viewBox="718 446 85 80"><polyline points="721.25,465.75 724.06,465.98 726.88,464.75 729.69,464.83 732.5,464.5 735,465.66 737.5,467.5 740.25,470.49 743,473.25 747.5,469.25 750,469.01 752.5,468.42 755,467.25 757.5,466.75 760,467.2 762.5,467.12 765,466.05 767.5,466.25 770,465.65 772.5,464.79 775,464.99 777.5,464.5 780,465.01 782.5,465.34 785,465 787.5,466.6 790,468.67 792.5,470" fill="none" stroke="#000" stroke-width="1.9" stroke-linejoin="round"/></svg><span class="t" style="left:719px;top:447.7px;font-size:13px;line-height:13px;color:#333;text-shadow:0 0 2px #fff,0 0 2px #fff,0 0 3px #fff,0 0 3px #fff;letter-spacing:0.46px;">4 000 000</span><span class="t" style="left:718.8px;top:497.7px;font-size:13px;line-height:13px;color:#333;">0</span>
<svg class="r" style="left:808px;top:446px" width="80" height="80" viewBox="808 446 80 80"><circle cx="848" cy="486" r="38" fill="#f5f5f5" stroke="#bcd" stroke-width="1.2"/></svg>
<div class="r" style="left:149px;top:535px;width:848px;height:1px;background:#e2e2e2;"></div>
<span class="t" style="left:153.7px;top:537.3px;font-size:13.5px;line-height:13.5px;color:#1c1c1c;font-weight:700;letter-spacing:0.52px;">Bookshelf</span>
<span class="t" style="left:344.7px;top:543.1px;font-size:14px;line-height:14px;color:#262626;letter-spacing:-0.27px;">Brand</span>
<span class="t" style="left:425.4px;top:543.1px;font-size:14px;line-height:14px;color:#262626;letter-spacing:-0.16px;">Retail</span>
<svg class="r" style="left:153px;top:558px" width="80" height="79.6" viewBox="0 0 80 80" preserveAspectRatio="none"><filter id="f3" x="-5%" y="-5%" width="110%" height="110%"><feGaussianBlur stdDeviation="0.55"/></filter><rect x="0" y="0" width="80" height="80" fill="#777"/><g filter="url(#f3)"><rect width="80" height="80" fill="#050505"/><rect x="10" y="0" width="5" height="4" fill="#6d6d6d"/><rect x="20" y="0" width="8" height="5" fill="#b5b5b5"/><rect x="30" y="0" width="4" height="6" fill="#8e8e8e"/><rect x="37" y="0" width="6" height="7" fill="#a9a9a9"/><rect x="46" y="0" width="5" height="8" fill="#d0d0d0"/><rect x="55" y="0" width="1" height="9" fill="#999"/><rect x="58" y="0" width="1" height="3" fill="#bbb"/><polygon points="0,4 30,6 80,16 80,30 0,26" fill="#050505"/><rect x="0" y="26.2" width="4.4" height="49.8" fill="rgb(190,190,190)"/><rect x="5" y="27.1" width="4.4" height="48.9" fill="rgb(70,70,70)"/><rect x="10" y="27.9" width="2.4" height="48.1" fill="rgb(70,70,70)"/><rect x="10.3" y="50" width="1.8" height="4.5" fill="#222"/><rect x="13" y="27.3" width="4.4" height="48.7" fill="rgb(110,110,110)"/><rect x="13.3" y="41.8" width="3.8" height="4.7" fill="#222"/><rect x="18" y="28.4" width="3.4" height="47.6" fill="rgb(140,140,140)"/><rect x="18.3" y="55" width="2.8" height="5.7" fill="#222"/><rect x="22" y="29.6" width="2.4" height="46.4" fill="rgb(70,70,70)"/><rect x="22.3" y="60.8" width="1.8" height="8.8" fill="#222"/><rect x="25" y="27.9" width="2.4" height="48.1" fill="rgb(140,140,140)"/><rect x="28" y="27.9" width="4.4" height="48.1" fill="rgb(170,170,170)"/><rect x="33" y="28.9" width="2.4" height="47.1" fill="rgb(95,95,95)"/><rect x="33.3" y="41.8" width="1.8" height="3.9" fill="#222"/><rect x="36" y="29.2" width="1.4" height="46.8" fill="rgb(130,130,130)"/><rect x="38" y="28.8" width="1.4" height="47.2" fill="rgb(130,130,130)"/><rect x="38.3" y="45.9" width="0.8" height="7.2" fill="#222"/><rect x="40" y="30.2" width="2.4" height="45.8" fill="rgb(160,160,160)"/><rect x="40.3" y="45.9" width="1.8" height="8.6" fill="#222"/><rect x="43" y="29.2" width="2.4" height="46.8" fill="rgb(95,95,95)"/><rect x="46" y="31.3" width="2.4" height="44.7" fill="rgb(95,95,95)"/><rect x="46.3" y="40.7" width="1.8" height="4.1" fill="#222"/><rect x="49" y="32.1" width="2.4" height="43.9" fill="rgb(110,110,110)"/><rect x="52" y="31.8" width="3.4" height="44.2" fill="rgb(130,130,130)"/><rect x="56" y="31" width="2.4" height="45" fill="rgb(160,160,160)"/><rect x="59" y="31.2" width="2.4" height="44.8" fill="rgb(190,190,190)"/><rect x="0" y="74" width="80" height="6" fill="#0c0c0c"/><rect x="0" y="73" width="78" height="1.5" fill="#2a2a2a"/></g></svg>
<div class="r" style="left:237px;top:558px;width:84.5px;height:79.6px;background:#f1f1f1;"></div><div class="r" style="left:314px;top:594.2px;width:7px;height:43.4px;background:#000;"></div><svg class="r" style="left:237px;top:558px" width="85" height="79" viewBox="237 558 85 79"><polyline points="240,586.25 242.5,586.04 245,586.1 247.5,584.5 250,584.16 252.5,584.5 255,584.08 257.5,585 262,587.5 264.67,585.48 267.33,583.57 270,581.25 272.5,580.87 275,579.83 277.5,579.01 280,578.25 282.5,578.35 285,577.76 287.5,577.15 290,576.25 292.92,575.36 295.83,573.6 298.75,573 301.25,573.04 303.75,573.54 306.25,573 309.12,573.72 312,575" fill="none" stroke="#000" stroke-width="1.9" stroke-linejoin="round"/></svg><span class="t" style="left:237.8px;top:559.7px;font-size:13px;line-height:13px;color:#333;text-shadow:0 0 2px #fff,0 0 2px #fff,0 0 3px #fff,0 0 3px #fff;letter-spacing:0.5px;">3 000 000</span><span class="t" style="left:237.8px;top:609.7px;font-size:13px;line-height:13px;color:#333;">0</span>
<svg class="r" style="left:322px;top:558px" width="80" height="80" viewBox="322 558 80 80"><circle cx="362" cy="598" r="38" fill="#f5f5f5" stroke="#c4c4c4" stroke-width="1.2"/></svg>
<svg class="r" style="left:402px;top:558px" width="80" height="80" viewBox="402 558 80 80"><circle cx="442" cy="598" r="38" fill="#f5f5f5" stroke="#c4c4c4" stroke-width="1.2"/></svg>
<span class="t" style="left:489.2px;top:561.5px;font-size:14px;line-height:14px;color:#262626;letter-spacing:-0.1px;">Price</span><span class="t" style="left:489.7px;top:579.5px;font-size:14px;line-height:14px;color:#262626;letter-spacing:-0.21px;">Quality</span><span class="t" style="left:489.2px;top:597.5px;font-size:14px;line-height:14px;color:#262626;letter-spacing:0.1px;">Brand</span><span class="t" style="left:489.2px;top:615.5px;font-size:14px;line-height:14px;color:#262626;letter-spacing:0.07px;">Rating</span><span class="t" style="left:537.6px;top:561.5px;font-size:14px;line-height:14px;color:#262626;letter-spacing:-0.1px;">61,82</span><span class="t" style="left:545px;top:579.5px;font-size:14px;line-height:14px;color:#262626;letter-spacing:-0.5px;">43</span><span class="t" style="left:544.7px;top:597.5px;font-size:14px;line-height:14px;color:#262626;letter-spacing:-0.22px;">33</span><span class="t" style="left:545px;top:615.5px;font-size:14px;line-height:14px;color:#262626;letter-spacing:-0.64px;">48</span><div class="r" style="left:567px;top:582.9px;width:30px;height:7.3px;background:#ebebeb;"></div><div class="r" style="left:567px;top:582.9px;width:12.9px;height:7.3px;background:#0b6b4f;"></div><div class="r" style="left:567px;top:600.9px;width:30px;height:7.3px;background:#ebebeb;"></div><div class="r" style="left:567px;top:600.9px;width:9.9px;height:7.3px;background:#f5901e;"></div><span class="t" style="left:605.8px;top:561.5px;font-size:14px;line-height:14px;color:#262626;letter-spacing:-0.1px;">61,82</span><span class="t" style="left:613px;top:579.5px;font-size:14px;line-height:14px;color:#262626;letter-spacing:-0.5px;">43</span><span class="t" style="left:612.7px;top:597.5px;font-size:14px;line-height:14px;color:#262626;letter-spacing:-0.22px;">33</span><span class="t" style="left:613px;top:615.5px;font-size:14px;line-height:14px;color:#262626;letter-spacing:-0.64px;">48</span><div class="r" style="left:635px;top:582.9px;width:30px;height:7.3px;background:#ebebeb;"></div><div class="r" style="left:635px;top:582.9px;width:12.9px;height:7.3px;background:#0b6b4f;"></div><div class="r" style="left:635px;top:600.9px;width:30px;height:7.3px;background:#ebebeb;"></div><div class="r" style="left:635px;top:600.9px;width:9.9px;height:7.3px;background:#f5901e;"></div><span class="t" style="left:678.3px;top:561.5px;font-size:14px;line-height:14px;color:#262626;letter-spacing:0.3px">21<span style="display:inline-block;letter-spacing:0;transform:scaleX(0.8);transform-origin:0 0;margin-left:-0.4px">%</span></span><span class="t" style="left:678.5px;top:579.5px;font-size:14px;line-height:14px;color:#262626;letter-spacing:0.3px">35<span style="display:inline-block;letter-spacing:0;transform:scaleX(0.8);transform-origin:0 0;margin-left:-0.3px">%</span></span><span class="t" style="left:678.8px;top:597.5px;font-size:14px;line-height:14px;color:#262626;letter-spacing:-0.08px">44<span style="display:inline-block;letter-spacing:0;transform:scaleX(0.8);transform-origin:0 0;margin-left:-0.1px">%</span></span>
<div class="r" style="left:718px;top:553px;width:84.5px;height:79.6px;background:#f1f1f1;"></div><div class="r" style="left:795px;top:601.8px;width:7px;height:30.9px;background:#000;"></div><svg class="r" style="left:718px;top:553px" width="85" height="79" viewBox="718 553 85 79"><polyline points="721.25,587.5 724.06,587.27 726.88,586.43 729.69,586.27 732.5,586.25 735,587.31 737.5,588.75 740,591.75 742.5,593.75 745,591.72 747.5,590.5 750,590.59 752.5,589.99 755,589.46 757.5,588.75 760,588.79 762.5,588.85 765,588.8 767.5,588 770,587.56 772.5,587.59 775,586.06 777.5,586.25 780,586.8 782.5,586.36 785,586.75 787.5,587.25 790,588.26 792.5,588" fill="none" stroke="#000" stroke-width="1.9" stroke-linejoin="round"/></svg><span class="t" style="left:718.8px;top:554.7px;font-size:13px;line-height:13px;color:#333;text-shadow:0 0 2px #fff,0 0 2px #fff,0 0 3px #fff,0 0 3px #fff;letter-spacing:0.5px;">8 000 000</span><span class="t" style="left:718.8px;top:604.7px;font-size:13px;line-height:13px;color:#333;">0</span>
<svg class="r" style="left:808px;top:553px" width="80" height="80" viewBox="808 553 80 80"><circle cx="848" cy="593" r="38" fill="#f5f5f5" stroke="#c4c4c4" stroke-width="1.2"/><path d="M848 593 L848 555 A38 38 0 0 1 884.53 603.47 Z" fill="#808080"/></svg>
<svg class="r" style="left:888px;top:553px" width="80" height="80" viewBox="888 553 80 80"><circle cx="928" cy="593" r="38" fill="#f5f5f5" stroke="#c4c4c4" stroke-width="1.2"/><path d="M928 593 L928 555 A38 38 0 0 1 962.01 576.04 Z" fill="#0000f2"/><path d="M928 593 L962.01 576.04 A38 38 0 0 1 964.53 603.47 Z" fill="#00f200"/></svg>
<div class="r" style="left:710px;top:308px;width:1.2px;height:332px;background:#d0d0d0;"></div>
<div class="r" style="left:711px;top:308px;width:7px;height:332px;background:linear-gradient(90deg,rgba(0,0,0,.13),rgba(0,0,0,0))"></div>
<div class="r" style="left:978px;top:346px;width:18px;height:294.5px;background:#dcdcdc;border:1px solid #9c9c9c;border-radius:3px;box-sizing:border-box"></div>
<div class="card" style="left:149px;top:658.5px;width:848px;height:174px"></div>
<span class="t" style="left:197.2px;top:662.4px;font-size:14px;line-height:14px;color:#262626;letter-spacing:0.01px;">Made in a Manufacturing slot in a Factory</span>
<svg class="r" style="left:150px;top:655px" width="50" height="95" viewBox="150 655 50 95"><polygon points="154,700.8 154,682.3 165.7,674.8 165.7,681.4 176.4,674.8 176.4,681.4 182,681.4 182,700.8" fill="#f58d8a" stroke="#e46a68" stroke-width=".8"/><polygon points="183,663 190,663 191.8,700.8 181.3,700.8" fill="#d24a48"/><polygon points="187,663 190,663 191.8,700.8 188,700.8" fill="#c23e3d"/><g fill="#fbe596"><rect x="158" y="686.3" width="4" height="4"/><rect x="165" y="686.3" width="4" height="4"/><rect x="172" y="686.3" width="4" height="4"/><rect x="158" y="692.9" width="4" height="4"/><rect x="165" y="692.9" width="4" height="4"/><rect x="172" y="692.9" width="4" height="4"/></g><rect x="158" y="740.4" width="30" height="4.4" rx="1" fill="#a9bdd6" stroke="#8196b3" stroke-width=".7"/><path d="M161.5 714.9 L169.5 733" stroke="#8e9fc0" stroke-width="6.4" stroke-linecap="butt"/><path d="M161.5 714.9 L169.5 733" stroke="#a9bdd6" stroke-width="5" stroke-linecap="butt"/><polygon points="161.4,740.4 166,731 173.5,731 177.3,740.4" fill="#f6e694" stroke="#d9c66a" stroke-width=".8"/><circle cx="169.3" cy="736" r="1.7" fill="#93a6c4" stroke="#7d8fae" stroke-width=".5"/><rect x="164" y="711.3" width="13" height="6.8" fill="#a9bdd6" stroke="#8e9fc0" stroke-width=".7"/><rect x="176" y="710.3" width="3.6" height="8.8" rx=".8" fill="#f6e694" stroke="#d9c66a" stroke-width=".7"/><path d="M179.6 712.5 L184 707.3 L190.5 710 L188.7 713.3 L184.8 712 L182.5 714.7 L184.8 717.4 L188.7 716.1 L190.5 719.4 L184 722.1 L179.6 716.9Z" fill="#a9bdd6" stroke="#8e9fc0" stroke-width=".7"/><circle cx="161" cy="714.9" r="5.8" fill="#f6e694" stroke="#d9c66a" stroke-width=".9"/><circle cx="161" cy="714.9" r="1.9" fill="#93a6c4" stroke="#7d8fae" stroke-width=".6"/></svg>
<svg class="r" style="left:201px;top:699px" width="80" height="79.6" viewBox="0 0 80 80" preserveAspectRatio="none"><filter id="f4" x="-5%" y="-5%" width="110%" height="110%"><feGaussianBlur stdDeviation="0.55"/></filter><rect x="0" y="0" width="80" height="80" fill="#777"/><g filter="url(#f4)"><rect width="80" height="80" fill="#f3f1f3"/><defs><linearGradient id="pg" x1="0" x2="1"><stop offset="0" stop-color="#bcb6bb"/><stop offset=".6" stop-color="#c8c3c8"/><stop offset="1" stop-color="#b4aeb3"/></linearGradient></defs><path d="M0 4 C10 4 22 30 24 80 L0 80 Z" fill="url(#pg)"/><path d="M20 80 C20 40 26 46 30 80 Z" fill="#dcd8dc"/><path d="M32 80 C32 30 44 9 58 9 C70 9 78 14 80 20 L80 80 Z" fill="url(#pg)"/><ellipse cx="1.5" cy="50" rx="1.5" ry="3.5" fill="#4a4038"/><ellipse cx="60" cy="70" rx="2.6" ry="5.5" fill="#3a322c" transform="rotate(-12 60 70)"/></g></svg>
<svg class="r" style="left:312px;top:699px" width="80" height="79.6" viewBox="0 0 80 80" preserveAspectRatio="none"><filter id="f5" x="-5%" y="-5%" width="110%" height="110%"><feGaussianBlur stdDeviation="0.55"/></filter><rect x="0" y="0" width="80" height="80" fill="#777"/><g filter="url(#f5)"><rect width="80" height="80" fill="#3a1a4a"/><rect x="-5.5" y="18.5" width="13" height="9" rx="3" fill="#f5d816" transform="rotate(-16 1 23)"/><rect x="39.3" y="27" width="13" height="9" rx="3" fill="#1fa385" transform="rotate(12 45.8 31.5)"/><rect x="35" y="46.1" width="13" height="9" rx="3" fill="#2a1fb5" transform="rotate(-26 41.5 50.6)"/><rect x="58.5" y="13.8" width="13" height="9" rx="3" fill="#d8201c" transform="rotate(-51 65 18.3)"/><rect x="66.2" y="62.9" width="13" height="9" rx="3" fill="#f2f2f2" transform="rotate(-0 72.7 67.4)"/><rect x="11.5" y="-4" width="13" height="9" rx="3" fill="#6b1f1a" transform="rotate(47 18 0.5)"/><rect x="40.3" y="37.8" width="13" height="9" rx="3" fill="#f5d816" transform="rotate(49 46.8 42.3)"/><rect x="58.6" y="76.3" width="13" height="9" rx="3" fill="#1fa385" transform="rotate(30 65.1 80.8)"/><rect x="33.7" y="5.3" width="13" height="9" rx="3" fill="#2a1fb5" transform="rotate(63 40.2 9.8)"/><rect x="59.9" y="56.7" width="13" height="9" rx="3" fill="#d8201c" transform="rotate(-31 66.4 61.2)"/><rect x="10.4" y="13.9" width="13" height="9" rx="3" fill="#f2f2f2" transform="rotate(-46 16.9 18.4)"/><rect x="59.3" y="45.4" width="13" height="9" rx="3" fill="#f5d816" transform="rotate(-7 65.8 49.9)"/><rect x="22.6" y="76" width="13" height="9" rx="3" fill="#1fa385" transform="rotate(-31 29.1 80.5)"/><rect x="43.6" y="14.8" width="13" height="9" rx="3" fill="#2a1fb5" transform="rotate(-40 50.1 19.3)"/><rect x="24.6" y="4" width="13" height="9" rx="3" fill="#d8201c" transform="rotate(-12 31.1 8.5)"/><rect x="66.9" y="47.7" width="13" height="9" rx="3" fill="#f2f2f2" transform="rotate(18 73.4 52.2)"/><rect x="45.7" y="45.2" width="13" height="9" rx="3" fill="#6b1f1a" transform="rotate(-1 52.2 49.7)"/><rect x="49" y="-2.6" width="13" height="9" rx="3" fill="#f5d816" transform="rotate(-26 55.5 1.9)"/><rect x="-0" y="53.6" width="13" height="9" rx="3" fill="#1fa385" transform="rotate(47 6.5 58.1)"/><rect x="37.2" y="64.2" width="13" height="9" rx="3" fill="#2a1fb5" transform="rotate(67 43.7 68.7)"/><rect x="16.7" y="2.9" width="13" height="9" rx="3" fill="#d8201c" transform="rotate(-7 23.2 7.4)"/><rect x="29.3" y="72.7" width="13" height="9" rx="3" fill="#f2f2f2" transform="rotate(-60 35.8 77.2)"/><rect x="74.4" y="-1.7" width="13" height="9" rx="3" fill="#f5d816" transform="rotate(-66 80.9 2.8)"/><rect x="-0.6" y="24.9" width="13" height="9" rx="3" fill="#1fa385" transform="rotate(52 5.9 29.4)"/><rect x="14.4" y="76.4" width="13" height="9" rx="3" fill="#2a1fb5" transform="rotate(-64 20.9 80.9)"/><rect x="76.9" y="25.2" width="13" height="9" rx="3" fill="#d8201c" transform="rotate(29 83.4 29.7)"/><rect x="24" y="46" width="13" height="9" rx="3" fill="#f2f2f2" transform="rotate(10 30.5 50.5)"/><rect x="56.6" y="6.3" width="13" height="9" rx="3" fill="#6b1f1a" transform="rotate(-27 63.1 10.8)"/><rect x="13.9" y="63.9" width="13" height="9" rx="3" fill="#f5d816" transform="rotate(41 20.4 68.4)"/><rect x="33.1" y="14.9" width="13" height="9" rx="3" fill="#1fa385" transform="rotate(-67 39.6 19.4)"/><rect x="12.9" y="58.1" width="13" height="9" rx="3" fill="#2a1fb5" transform="rotate(-51 19.4 62.6)"/><rect x="46.1" y="7.6" width="13" height="9" rx="3" fill="#d8201c" transform="rotate(-6 52.6 12.1)"/><rect x="-10.4" y="36.9" width="13" height="9" rx="3" fill="#f2f2f2" transform="rotate(-67 -3.9 41.4)"/><rect x="24" y="24.5" width="13" height="9" rx="3" fill="#f5d816" transform="rotate(46 30.5 29)"/><rect x="70" y="57.4" width="13" height="9" rx="3" fill="#1fa385" transform="rotate(-37 76.5 61.9)"/><rect x="3.5" y="16.7" width="13" height="9" rx="3" fill="#2a1fb5" transform="rotate(-50 10 21.2)"/><rect x="4.6" y="66.8" width="13" height="9" rx="3" fill="#d8201c" transform="rotate(-63 11.1 71.3)"/><rect x="44.2" y="24" width="13" height="9" rx="3" fill="#f2f2f2" transform="rotate(18 50.7 28.5)"/><rect x="54.1" y="22.9" width="13" height="9" rx="3" fill="#6b1f1a" transform="rotate(-7 60.6 27.4)"/><rect x="26.9" y="67.6" width="13" height="9" rx="3" fill="#f5d816" transform="rotate(18 33.4 72.1)"/><rect x="68.3" y="23.6" width="13" height="9" rx="3" fill="#1fa385" transform="rotate(22 74.8 28.1)"/><rect x="74.6" y="64.7" width="13" height="9" rx="3" fill="#2a1fb5" transform="rotate(43 81.1 69.2)"/><rect x="3.9" y="26.3" width="13" height="9" rx="3" fill="#d8201c" transform="rotate(64 10.4 30.8)"/><rect x="18.2" y="24.1" width="13" height="9" rx="3" fill="#f2f2f2" transform="rotate(26 24.7 28.6)"/><rect x="33.8" y="56.1" width="13" height="9" rx="3" fill="#f5d816" transform="rotate(-42 40.3 60.6)"/><rect x="69.1" y="38.4" width="13" height="9" rx="3" fill="#1fa385" transform="rotate(-3 75.6 42.9)"/><rect x="41" y="53.1" width="13" height="9" rx="3" fill="#2a1fb5" transform="rotate(-45 47.5 57.6)"/><rect x="20.2" y="12.9" width="13" height="9" rx="3" fill="#d8201c" transform="rotate(-68 26.7 17.4)"/><rect x="8.1" y="44.5" width="13" height="9" rx="3" fill="#f2f2f2" transform="rotate(-4 14.6 49)"/><rect x="74" y="15.3" width="13" height="9" rx="3" fill="#6b1f1a" transform="rotate(30 80.5 19.8)"/><rect x="-8.1" y="73.3" width="13" height="9" rx="3" fill="#f5d816" transform="rotate(-45 -1.6 77.8)"/><rect x="62.7" y="-7.2" width="13" height="9" rx="3" fill="#1fa385" transform="rotate(-32 69.2 -2.7)"/><rect x="71.4" y="76.9" width="13" height="9" rx="3" fill="#2a1fb5" transform="rotate(-22 77.9 81.4)"/><rect x="-6" y="57.4" width="13" height="9" rx="3" fill="#d8201c" transform="rotate(28 0.5 61.9)"/><rect x="0.7" y="77.8" width="13" height="9" rx="3" fill="#f2f2f2" transform="rotate(3 7.2 82.3)"/><rect x="32.3" y="-2.7" width="13" height="9" rx="3" fill="#f5d816" transform="rotate(16 38.8 1.8)"/><rect x="9.2" y="35" width="13" height="9" rx="3" fill="#1fa385" transform="rotate(36 15.7 39.5)"/><rect x="-8.8" y="-4.1" width="13" height="9" rx="3" fill="#2a1fb5" transform="rotate(-15 -2.3 0.4)"/><rect x="-0.7" y="36.4" width="13" height="9" rx="3" fill="#d8201c" transform="rotate(41 5.8 40.9)"/><rect x="49" y="63.7" width="13" height="9" rx="3" fill="#f2f2f2" transform="rotate(57 55.5 68.2)"/><rect x="54.2" y="17.6" width="13" height="9" rx="3" fill="#6b1f1a" transform="rotate(-58 60.7 22.1)"/><rect x="49.8" y="34.9" width="13" height="9" rx="3" fill="#f5d816" transform="rotate(61 56.3 39.4)"/><rect x="19.8" y="34.1" width="13" height="9" rx="3" fill="#1fa385" transform="rotate(31 26.3 38.6)"/><rect x="4" y="-4.7" width="13" height="9" rx="3" fill="#2a1fb5" transform="rotate(-52 10.5 -0.2)"/><rect x="-2.9" y="64.3" width="13" height="9" rx="3" fill="#d8201c" transform="rotate(-7 3.6 68.8)"/><rect x="19.6" y="-4.4" width="13" height="9" rx="3" fill="#f2f2f2" transform="rotate(18 26.1 0.1)"/><rect x="74.6" y="43.4" width="13" height="9" rx="3" fill="#f5d816" transform="rotate(57 81.1 47.9)"/><rect x="38.6" y="78" width="13" height="9" rx="3" fill="#1fa385" transform="rotate(-17 45.1 82.5)"/><rect x="48.7" y="58.3" width="13" height="9" rx="3" fill="#2a1fb5" transform="rotate(10 55.2 62.8)"/><rect x="4.4" y="2.6" width="13" height="9" rx="3" fill="#d8201c" transform="rotate(53 10.9 7.1)"/><rect x="-5.2" y="44" width="13" height="9" rx="3" fill="#f2f2f2" transform="rotate(42 1.3 48.5)"/><rect x="63.6" y="36.4" width="13" height="9" rx="3" fill="#6b1f1a" transform="rotate(62 70.1 40.9)"/><rect x="66.5" y="6.5" width="13" height="9" rx="3" fill="#f5d816" transform="rotate(-5 73 11)"/><rect x="39.1" y="-5.7" width="13" height="9" rx="3" fill="#1fa385" transform="rotate(21 45.6 -1.2)"/><rect x="15.3" y="42.9" width="13" height="9" rx="3" fill="#2a1fb5" transform="rotate(-41 21.8 47.4)"/><rect x="53.6" y="64.1" width="13" height="9" rx="3" fill="#d8201c" transform="rotate(31 60.1 68.6)"/><rect x="19.7" y="58.2" width="13" height="9" rx="3" fill="#f2f2f2" transform="rotate(45 26.2 62.7)"/><rect x="52.7" y="78.3" width="13" height="9" rx="3" fill="#f5d816" transform="rotate(20 59.2 82.8)"/><rect x="-2.6" y="6.2" width="13" height="9" rx="3" fill="#1fa385" transform="rotate(30 3.9 10.7)"/><rect x="76.2" y="4.2" width="13" height="9" rx="3" fill="#2a1fb5" transform="rotate(-40 82.7 8.7)"/><rect x="34.3" y="37.3" width="13" height="9" rx="3" fill="#d8201c" transform="rotate(56 40.8 41.8)"/></g></svg>
<svg class="r" style="left:532px;top:699px" width="80" height="79.6" viewBox="0 0 80 80" preserveAspectRatio="none"><filter id="f6" x="-5%" y="-5%" width="110%" height="110%"><feGaussianBlur stdDeviation="0.55"/></filter><rect x="0" y="0" width="80" height="80" fill="#777"/><g filter="url(#f6)"><rect width="80" height="80" fill="#0b5d47"/><rect width="80" height="13" fill="#2a1e16"/><rect x="1" y="1" width="6" height="10" rx="2" fill="#b04a22" opacity=".75"/><rect x="12" y="1" width="6" height="10" rx="2" fill="#8a8374" opacity=".75"/><rect x="24" y="1" width="6" height="10" rx="2" fill="#5e5648" opacity=".75"/><rect x="36" y="1" width="6" height="10" rx="2" fill="#8f8878" opacity=".75"/><rect x="47" y="1" width="6" height="10" rx="2" fill="#7a7262" opacity=".75"/><rect x="58" y="1" width="6" height="10" rx="2" fill="#9a9384" opacity=".75"/><rect x="69" y="1" width="6" height="10" rx="2" fill="#8f897a" opacity=".75"/><polygon points="0,14 48,12 80,22 80,30 46,17 0,20" fill="#08503d"/><polygon points="64,18 77,16 77,22 70,23" fill="#c85a1e"/><polygon points="0,40 80,32 80,38 0,50" fill="#084a39"/><polygon points="2,29 50,23 52,25 2,31" fill="#e8e2bd"/><polygon points="12,35 62,27 64,29 12,37" fill="#e8e2bd"/><polygon points="20,38 74,29 76,33 22,41" fill="#c22a22"/><polygon points="11,24 50,19 52,24 13,28" fill="#e3dcae"/><polygon points="30,27 56,23 58,26 30,30" fill="#b5342a"/><rect x="13" y="39" width="14" height="4" fill="#cf2a22" transform="rotate(-5 20 41)"/><ellipse cx="71" cy="42" rx="8" ry="3.5" fill="#d8201c"/><polygon points="43,47 80,42 80,44 43,49" fill="#e8e2bd"/><polygon points="56,54 80,50 80,52 56,56" fill="#e8e2bd"/><polygon points="50,51 80,46 80,48 50,53" fill="#b5342a"/><polygon points="63,58 80,55 80,57 63,60" fill="#b5342a"/><polygon points="0,58 14,56 14,58 0,60" fill="#e8e2bd"/><polygon points="0,66 26,62 26,64 0,68" fill="#e8e2bd"/><polygon points="0,62 18,59 18,61 0,64" fill="#a5392c"/><rect x="25" y="45" width="10" height="9" fill="#e6dfb4"/><rect x="28" y="52" width="8" height="7" fill="#d9d2a6"/><rect x="37" y="50" width="7" height="7" fill="#e6dfb4"/><rect x="32" y="53" width="8" height="8" rx="1.5" fill="#d4221f"/><rect x="43" y="54" width="8" height="8" rx="1.5" fill="#c91f1c"/><g fill="#fff"><circle cx="34" cy="55.5" r=".7"/><circle cx="38" cy="55.5" r=".7"/><circle cx="34" cy="58.5" r=".7"/><circle cx="38" cy="58.5" r=".7"/><circle cx="45.5" cy="56.5" r=".7"/><circle cx="48.5" cy="59.5" r=".7"/></g><polygon points="0,73 80,64 80,80 0,80" fill="#1d120d"/><polygon points="0,70 80,61 80,65 0,74" fill="#0a5541"/><rect x="44" y="72" width="10" height="6" fill="#b8a064"/><rect x="46" y="73" width="3" height="5" fill="#1d120d"/><rect x="70" y="64" width="10" height="3" fill="#c2221f"/></g></svg>
<div class="r" style="left:286.1px;top:733.3px;width:19.4px;height:3.4px;background:#000;"></div>
<div class="r" style="left:294.1px;top:725.3px;width:3.4px;height:19.4px;background:#000;"></div>
<div class="r" style="left:397.1px;top:733.3px;width:19.4px;height:3.4px;background:#000;"></div>
<div class="r" style="left:405.1px;top:725.3px;width:3.4px;height:19.4px;background:#000;"></div>
<div class="r" style="left:509.2px;top:729.3px;width:16.5px;height:3px;background:#000;"></div>
<div class="r" style="left:509.2px;top:738.6px;width:16.5px;height:3px;background:#000;"></div>
<svg class="r" style="left:440px;top:695px" width="44" height="46" viewBox="440 695 44 46"><path d="M456 711 C446 713 444.5 724 453.8 728.8" fill="none" stroke="#3d5068" stroke-width="2.3"/><polygon points="454.3,711.7 457.5,708 464,708.5 464,715.6 457,715.6" fill="#3d5068"/><circle cx="458.3" cy="711.8" r="1" fill="#7f9fd0"/><rect x="463" y="699.7" width="10.2" height="1.8" fill="#7aa3de"/><rect x="465.5" y="701.5" width="6.5" height="3" fill="#a3c6f0"/><rect x="463.4" y="704" width="9.9" height="15.8" rx=".8" fill="#8db4ec" stroke="#7aa3de" stroke-width=".6"/><rect x="465.3" y="719.8" width="5.9" height="3.9" fill="#aed3ea" stroke="#86b0d0" stroke-width=".5"/><rect x="458.5" y="727.4" width="16" height="2.5" fill="#3d5068"/><polygon points="457.9,724 449.8,733.3 465.3,733.3" fill="#8db4ec" stroke="#7aa3de" stroke-width=".6"/><circle cx="457.9" cy="728.6" r="1.3" fill="#3d5068"/><rect x="447.2" y="733.1" width="30" height="4.7" rx=".8" fill="#a9c4e4" stroke="#6f8fb8" stroke-width=".8"/></svg>
<span class="t" style="left:438px;top:740.5px;font-size:13.6px;line-height:13.6px;color:#1c1c1c;font-weight:700;letter-spacing:1.68px;">30/100</span>
<span class="t" style="left:201.5px;top:779.4px;font-size:14px;line-height:14px;color:#262626;letter-spacing:-0.21px;">30 Paper</span>
<span class="t" style="left:312.2px;top:779.4px;font-size:14px;line-height:14px;color:#262626;letter-spacing:0.03px;">8 Plastics</span>
<span class="t" style="left:423px;top:779.4px;font-size:14px;line-height:14px;color:#262626;letter-spacing:0.07px;">Technology</span>
<span class="t" style="left:532.7px;top:779.4px;font-size:14px;line-height:14px;color:#262626;letter-spacing:-0.15px;">3 Board</span>
<span class="t" style="left:532.7px;top:796.1px;font-size:14px;line-height:14px;color:#262626;letter-spacing:-0.02px;">games</span>
<span class="t" style="left:227.7px;top:811.9px;font-size:14px;line-height:14px;color:#262626;font-style:italic;letter-spacing:-0.41px">25<span style="display:inline-block;letter-spacing:0;transform:scaleX(0.8);transform-origin:0 0;margin-left:0.6px">%</span></span>
<span class="t" style="left:339.3px;top:811.9px;font-size:14px;line-height:14px;color:#262626;font-style:italic;letter-spacing:-0.6px">10<span style="display:inline-block;letter-spacing:0;transform:scaleX(0.8);transform-origin:0 0;margin-left:0.5px">%</span></span>
<span class="t" style="left:448.9px;top:811.9px;font-size:14px;line-height:14px;color:#262626;font-style:italic;letter-spacing:-0.32px">65<span style="display:inline-block;letter-spacing:0;transform:scaleX(0.8);transform-origin:0 0;margin-left:0.6px">%</span></span>
<div class="win" style="left:816px;top:116px;width:880px;height:436.5px;background:#eeeeee"></div>
<div class="r" style="left:816px;top:116px;width:880px;height:47px;background:#78909c;"></div>
<span class="t" style="left:833.8px;top:131.2px;font-size:15.4px;line-height:15.4px;color:#f3f5f6;-webkit-text-stroke:0.5px #f3f5f6;letter-spacing:1.5px;">Board games (Toys) details</span>
<div class="r" style="left:1642.2px;top:131.4px;width:3.6px;height:3.6px;border-radius:50%;background:#f3f5f6"></div>
<div class="r" style="left:1642.2px;top:137.4px;width:3.6px;height:3.6px;border-radius:50%;background:#f3f5f6"></div>
<div class="r" style="left:1642.2px;top:143.4px;width:3.6px;height:3.6px;border-radius:50%;background:#f3f5f6"></div>
<svg class="r" style="left:1671px;top:132px" width="14" height="14" viewBox="0 0 14 14"><path d="M1.5 1.5 L12.5 12.5 M12.5 1.5 L1.5 12.5" stroke="#f3f5f6" stroke-width="1.7"/></svg>
<div class="r" style="left:816px;top:163px;width:640px;height:48px;background:#7ab5ad;"></div>
<div class="r" style="left:816px;top:163px;width:159.5px;height:48px;background:#00796b;"></div>
<span class="t" style="left:873.5px;top:180.8px;font-size:12.9px;line-height:12.9px;color:#f2fbfa;letter-spacing:0.17px;">RETAIL</span>
<span class="t" style="left:1035.5px;top:180.8px;font-size:12.9px;line-height:12.9px;color:#bfe0db;letter-spacing:-0.31px;">TRADE</span>
<span class="t" style="left:1193px;top:180.8px;font-size:12.9px;line-height:12.9px;color:#bfe0db;letter-spacing:-0.22px;">RECIPE</span>
<span class="t" style="left:1358.4px;top:180.8px;font-size:12.9px;line-height:12.9px;color:#bfe0db;letter-spacing:-0.43px;">CORP</span>
<div class="card" style="left:1488px;top:167.5px;width:200px;height:33px;background:#fff"></div>
<span class="t" style="left:1503.5px;top:176.5px;font-size:14.5px;line-height:14.5px;color:#262626;letter-spacing:-0.31px;">The North</span>
<div class="r" style="left:1656.2px;top:182.5px;width:0;height:0;border-left:4.5px solid transparent;border-right:4.5px solid transparent;border-top:4.5px solid #757575"></div>
<div class="card" style="left:832px;top:228.5px;width:760px;height:307.5px"></div>
<div class="r" style="left:832px;top:228.5px;width:760px;height:22px;background:#f3f3f3;"></div>
<div class="r" style="left:832px;top:250.2px;width:760px;height:1px;background:#dcdcdc;"></div>
<div class="r" style="left:832px;top:273.8px;width:760px;height:1px;background:#dcdcdc;"></div>
<div class="r" style="left:832px;top:298.8px;width:760px;height:1px;background:#dcdcdc;"></div>
<div class="r" style="left:832px;top:323.8px;width:760px;height:1px;background:#dcdcdc;"></div>
<div class="r" style="left:832px;top:251.2px;width:760px;height:72.6px;background:#fff;"></div>
<div class="r" style="left:832px;top:273.8px;width:760px;height:1px;background:#dcdcdc;"></div>
<div class="r" style="left:832px;top:298.8px;width:760px;height:1px;background:#dcdcdc;"></div>
<span class="t" style="left:840.5px;top:232.3px;font-size:13.5px;line-height:13.5px;color:#1c1c1c;font-weight:700;letter-spacing:0.45px;">Brand</span>
<span class="t" style="left:992.5px;top:232.3px;font-size:13.5px;line-height:13.5px;color:#1c1c1c;font-weight:700;letter-spacing:0.62px;">Retailer</span>
<span class="t" style="left:1152.5px;top:232.3px;font-size:13.5px;line-height:13.5px;color:#1c1c1c;font-weight:700;letter-spacing:0.62px;">Price</span>
<span class="t" style="left:1227.8px;top:232.3px;font-size:13.5px;line-height:13.5px;color:#1c1c1c;font-weight:700;letter-spacing:0.56px;">Quality</span>
<span class="t" style="left:1311.7px;top:232.3px;font-size:13.5px;line-height:13.5px;color:#1c1c1c;font-weight:700;letter-spacing:0.64px;">Brand</span>
<span class="t" style="left:1399.5px;top:232.3px;font-size:13.5px;line-height:13.5px;color:#1c1c1c;font-weight:700;letter-spacing:0.77px;">Rating</span>
<span class="t" style="left:1482.5px;top:232.3px;font-size:13.5px;line-height:13.5px;color:#1c1c1c;font-weight:700;letter-spacing:0.58px;">Revenue</span>
<span class="t" style="left:860.2px;top:256.1px;font-size:14px;line-height:14px;color:#262626;letter-spacing:-0.16px;">Local producers</span><span class="t" style="left:1012.2px;top:256.1px;font-size:14px;line-height:14px;color:#262626;letter-spacing:-0.13px;">Local retailers</span><span class="t" style="left:1152.3px;top:256.1px;font-size:14px;line-height:14px;color:#262626;letter-spacing:-0.03px;">14,51</span><span class="t" style="left:1223.9px;top:256.1px;font-size:14px;line-height:14px;color:#262626;letter-spacing:-0.4px;">42</span><div class="r" style="left:1246.2px;top:259.3px;width:46px;height:7.6px;background:#ebebeb;"></div><div class="r" style="left:1246.2px;top:259.3px;width:19.3px;height:7.6px;background:#0b6b4f;"></div><span class="t" style="left:1303.9px;top:256.1px;font-size:14px;line-height:14px;color:#262626;">35</span><div class="r" style="left:1326.2px;top:259.3px;width:46px;height:7.6px;background:#ebebeb;"></div><div class="r" style="left:1326.2px;top:259.3px;width:16.1px;height:7.6px;background:#f5901e;"></div><span class="t" style="left:1388.8px;top:256.1px;font-size:14px;line-height:14px;color:#262626;letter-spacing:-0.5px;">46</span><div class="r" style="left:1416.2px;top:259.3px;width:56px;height:7.6px;background:#ebebeb;"></div><div class="r" style="left:1416.2px;top:259.3px;width:11.8px;height:7.6px;background:#0b6b4f;"></div><div class="r" style="left:1428px;top:259.3px;width:14px;height:7.6px;background:#f5901e;"></div><div class="r" style="left:1476.2px;top:259.3px;width:76px;height:7.6px;background:#ebebeb;"></div><div class="r" style="left:1476.2px;top:259.3px;width:58.9px;height:7.6px;background:#000;"></div>
<div class="r" style="left:840px;top:280.2px;width:16px;height:15.6px;background:#00f200;"></div><div class="r" style="left:992px;top:280.2px;width:16px;height:15.6px;background:#00f200;"></div><span class="t" style="left:860.2px;top:281px;font-size:13.2px;line-height:13.2px;color:#262626;letter-spacing:-0.36px;">Newhouse International</span><span class="t" style="left:1012.2px;top:280.6px;font-size:13.7px;line-height:13.7px;color:#262626;letter-spacing:-0.37px;">Newhouse International</span><span class="t" style="left:1152.7px;top:280.6px;font-size:14px;line-height:14px;color:#262626;letter-spacing:-0.14px;">9,90</span><span class="t" style="left:1223.6px;top:280.6px;font-size:14px;line-height:14px;color:#262626;letter-spacing:-0.12px;">33</span><div class="r" style="left:1246.2px;top:283.8px;width:46px;height:7.6px;background:#ebebeb;"></div><div class="r" style="left:1246.2px;top:283.8px;width:15.2px;height:7.6px;background:#0b6b4f;"></div><span class="t" style="left:1307.6px;top:280.6px;font-size:14px;line-height:14px;color:#262626;">2</span><div class="r" style="left:1326.2px;top:283.8px;width:46px;height:7.6px;background:#ebebeb;"></div><div class="r" style="left:1326.2px;top:283.8px;width:1px;height:7.6px;background:#f5901e;"></div><span class="t" style="left:1388.5px;top:280.6px;font-size:14px;line-height:14px;color:#262626;letter-spacing:-0.22px;">37</span><div class="r" style="left:1416.2px;top:283.8px;width:56px;height:7.6px;background:#ebebeb;"></div><div class="r" style="left:1416.2px;top:283.8px;width:10.1px;height:7.6px;background:#e3e016;"></div><div class="r" style="left:1426.3px;top:283.8px;width:9.5px;height:7.6px;background:#0b6b4f;"></div><div class="r" style="left:1435.8px;top:283.8px;width:1.1px;height:7.6px;background:#f5901e;"></div><div class="r" style="left:1476.2px;top:283.8px;width:76px;height:7.6px;background:#ebebeb;"></div><div class="r" style="left:1476.2px;top:283.8px;width:12.5px;height:7.6px;background:#000;"></div>
<div class="r" style="left:840px;top:305.7px;width:16px;height:15.6px;background:#00f200;"></div><div class="r" style="left:992px;top:305.7px;width:16px;height:15.6px;background:#0000f2;"></div><span class="t" style="left:860.2px;top:306.5px;font-size:13.2px;line-height:13.2px;color:#262626;letter-spacing:-0.36px;">Newhouse International</span><span class="t" style="left:1012.2px;top:306.1px;font-size:14px;line-height:14px;color:#262626;letter-spacing:-0.26px;">Lynch Enterprises</span><span class="t" style="left:1152.3px;top:306.1px;font-size:14px;line-height:14px;color:#262626;letter-spacing:-0.03px;">12,36</span><span class="t" style="left:1223.6px;top:306.1px;font-size:14px;line-height:14px;color:#262626;letter-spacing:-0.4px;">34</span><div class="r" style="left:1246.2px;top:309.3px;width:46px;height:7.6px;background:#ebebeb;"></div><div class="r" style="left:1246.2px;top:309.3px;width:15.6px;height:7.6px;background:#0b6b4f;"></div><span class="t" style="left:1307.6px;top:306.1px;font-size:14px;line-height:14px;color:#262626;">2</span><div class="r" style="left:1326.2px;top:309.3px;width:46px;height:7.6px;background:#ebebeb;"></div><div class="r" style="left:1326.2px;top:309.3px;width:1px;height:7.6px;background:#f5901e;"></div><span class="t" style="left:1388.3px;top:306.1px;font-size:14px;line-height:14px;color:#262626;letter-spacing:-0.08px;">27</span><div class="r" style="left:1416.2px;top:309.3px;width:56px;height:7.6px;background:#ebebeb;"></div><div class="r" style="left:1416.2px;top:309.3px;width:5.6px;height:7.6px;background:#e3e016;"></div><div class="r" style="left:1421.8px;top:309.3px;width:9px;height:7.6px;background:#0b6b4f;"></div><div class="r" style="left:1430.8px;top:309.3px;width:0.8px;height:7.6px;background:#f5901e;"></div><div class="r" style="left:1476.2px;top:309.3px;width:76px;height:7.6px;background:#ebebeb;"></div><div class="r" style="left:1476.2px;top:309.3px;width:3.8px;height:7.6px;background:#000;"></div>
<span class="t" style="left:861.3px;top:338.9px;font-size:14px;line-height:14px;color:#262626;letter-spacing:0px;"></span><span class="t" style="left:1152.3px;top:338.9px;font-size:14px;line-height:14px;color:#262626;letter-spacing:-0.06px;">13,08</span><span class="t" style="left:1223.6px;top:338.9px;font-size:14px;line-height:14px;color:#262626;letter-spacing:-0.12px;">39</span><div class="r" style="left:1246.2px;top:342.1px;width:46px;height:7.6px;background:#ebebeb;"></div><div class="r" style="left:1246.2px;top:342.1px;width:17.9px;height:7.6px;background:#0b6b4f;"></div><span class="t" style="left:1303.7px;top:338.9px;font-size:14px;line-height:14px;color:#262626;">22</span><div class="r" style="left:1326.2px;top:342.1px;width:46px;height:7.6px;background:#ebebeb;"></div><div class="r" style="left:1326.2px;top:342.1px;width:10.1px;height:7.6px;background:#f5901e;"></div><span class="t" style="left:1388.8px;top:338.9px;font-size:14px;line-height:14px;color:#262626;letter-spacing:-0.5px;">41</span><div class="r" style="left:1416.2px;top:342.1px;width:56px;height:7.6px;background:#ebebeb;"></div><div class="r" style="left:1416.2px;top:342.1px;width:3.4px;height:7.6px;background:#e3e016;"></div><div class="r" style="left:1419.6px;top:342.1px;width:10.6px;height:7.6px;background:#0b6b4f;"></div><div class="r" style="left:1430.2px;top:342.1px;width:9px;height:7.6px;background:#f5901e;"></div>
<span class="t" style="left:840.2px;top:331.1px;font-size:14px;line-height:14px;color:#262626;letter-spacing:0.12px;">Necessity:</span>
<span class="t" style="left:913.3px;top:331.1px;font-size:14px;line-height:14px;color:#262626;letter-spacing:0.3px">20<span style="display:inline-block;letter-spacing:0;transform:scaleX(0.8);transform-origin:0 0;margin-left:-0.3px">%</span></span>
<span class="t" style="left:840.2px;top:346.9px;font-size:14px;line-height:14px;color:#262626;letter-spacing:-0.06px;">Luxury:</span>
<span class="t" style="left:913.5px;top:346.9px;font-size:14px;line-height:14px;color:#262626;letter-spacing:0.3px">30<span style="display:inline-block;letter-spacing:0;transform:scaleX(0.8);transform-origin:0 0;margin-left:-0.3px">%</span></span>
<span class="t" style="left:1047.2px;top:338.9px;font-size:14px;line-height:14px;color:#262626;letter-spacing:-0.12px;">Region Average:</span>
<span class="t" style="left:1083.8px;top:355.6px;font-size:14px;line-height:14px;color:#262626;letter-spacing:-0.17px;">Concern:</span>
<span class="t" style="left:1166.5px;top:355.6px;font-size:14px;line-height:14px;color:#262626;letter-spacing:0.3px">30<span style="display:inline-block;letter-spacing:0;transform:scaleX(0.8);transform-origin:0 0;margin-left:-0.3px">%</span></span>
<span class="t" style="left:1236.3px;top:355.6px;font-size:14px;line-height:14px;color:#262626;letter-spacing:0.3px">28<span style="display:inline-block;letter-spacing:0;transform:scaleX(0.8);transform-origin:0 0;margin-left:-0.3px">%</span></span>
<span class="t" style="left:1316.8px;top:355.6px;font-size:14px;line-height:14px;color:#262626;letter-spacing:0.2px">42<span style="display:inline-block;letter-spacing:0;transform:scaleX(0.8);transform-origin:0 0;margin-left:-0.4px">%</span></span>
<svg class="r" style="left:1602.2px;top:249.7px" width="79" height="79" viewBox="1602.2 249.7 79 79"><circle cx="1642" cy="289.5" r="37.8" fill="#f5f5f5" stroke="#c4c4c4" stroke-width="1.2"/><path d="M1642 289.5 L1642 251.7 A37.8 37.8 0 0 1 1661.18 256.93 Z" fill="#0000f2"/><path d="M1642 289.5 L1661.18 256.93 A37.8 37.8 0 0 1 1669.19 315.76 Z" fill="#00f200"/></svg>
<span class="t" style="left:1624.2px;top:330.1px;font-size:14px;line-height:14px;color:#262626;letter-spacing:0.04px;">Retail</span>
<svg class="r" style="left:1602.2px;top:345.7px" width="79" height="79" viewBox="1602.2 345.7 79 79"><circle cx="1642" cy="385.5" r="37.8" fill="#f5f5f5" stroke="#c4c4c4" stroke-width="1.2"/><path d="M1642 385.5 L1642 347.7 A37.8 37.8 0 0 1 1669.19 411.76 Z" fill="#00f200"/></svg>
<div class="win" style="left:1472px;top:366px;width:386px;height:447.5px;background:#e9e9e9;box-shadow:0 3px 8px rgba(0,0,0,.45),0 0 2px rgba(0,0,0,.3)"></div>
<div class="r" style="left:1472px;top:366px;width:386px;height:48px;background:#37474f;"></div>
<span class="t" style="left:1490.8px;top:382.5px;font-size:15.4px;line-height:15.4px;color:#eef1f2;-webkit-text-stroke:0.5px #eef1f2;letter-spacing:1.6px;">Auctions</span>
<svg class="r" style="left:1833px;top:383px" width="14" height="14" viewBox="0 0 14 14"><path d="M1.5 1.5 L12.5 12.5 M12.5 1.5 L1.5 12.5" stroke="#e8ecee" stroke-width="1.7"/></svg>
<div class="card" style="left:1488.5px;top:430px;width:353.5px;height:366.5px"></div>
<div class="r" style="left:1488.5px;top:430px;width:353.5px;height:107px;background:#fff;"></div>
<div class="r" style="left:1490px;top:537px;width:350px;height:1px;background:#d6d6d6;"></div>
<div class="r" style="left:1488.5px;top:749.4px;width:353.5px;height:1px;background:#dcdcdc;"></div>
<svg class="r" style="left:1492px;top:434px" width="80" height="79.6" viewBox="0 0 80 80" preserveAspectRatio="none"><filter id="f7" x="-5%" y="-5%" width="110%" height="110%"><feGaussianBlur stdDeviation="0.55"/></filter><rect x="0" y="0" width="80" height="80" fill="#777"/><g filter="url(#f7)"><defs><linearGradient id="sky" x1="0" y1="0" x2="1" y2="1"><stop offset="0" stop-color="#7f97d6"/><stop offset=".5" stop-color="#c3b4d6"/><stop offset="1" stop-color="#aeb4dc"/></linearGradient><linearGradient id="br" x1="0" x2="1"><stop offset="0" stop-color="#1b2124"/><stop offset=".12" stop-color="#aeb6b8"/><stop offset=".3" stop-color="#4e585c"/><stop offset=".7" stop-color="#2d3437"/><stop offset="1" stop-color="#1c2225"/></linearGradient><linearGradient id="bl" x1="0" x2="1"><stop offset="0" stop-color="#23292c"/><stop offset=".4" stop-color="#3a4347"/><stop offset="1" stop-color="#0e1214"/></linearGradient></defs><rect width="80" height="80" fill="url(#sky)"/><path d="M0 22 C8 15 30 15 36 22 L44 80 L0 80 Z" fill="url(#bl)"/><path d="M0 40 C14 37 30 37 38 41 L38.5 44 C30 40 14 40 0 43 Z" fill="#14181a"/><path d="M0 64 C14 62 30 62 41 65 L41.5 69 C30 66 14 66 0 68 Z" fill="#14181a"/><polygon points="0,46 13,44 14,62 0,64" fill="#e3de1b"/><path d="M6.5 48 C9 53 10 55 10 57 a3.5 3.5 0 0 1 -7 0 C3 55 4 53 6.5 48Z" fill="#4a5055"/><path d="M34 14 C40 0 62 -2 80 0 L80 80 L44 80 C42 50 38 30 34 14 Z" fill="url(#br)"/><path d="M34 14 C40 0 62 -2 80 0 L80 3 C62 1 42 4 36 18 Z" fill="#14181a"/><path d="M38 32 C50 25 66 22 80 21 L80 27 C66 28 50 31 39 37 Z" fill="#1d2326"/><path d="M41 64 C52 60 66 58 80 57 L80 65 C66 66 52 67 42 70 Z" fill="#1d2326"/><polygon points="48,35 71,30 75,52 50,56" fill="#e6e11a"/><path d="M59 35 C63 42 66 45 66 48 a6 6 0 0 1 -12 0 C54 45 56 42 59 35Z" fill="#454b50"/></g></svg>
<span class="t" style="left:1576.5px;top:435.7px;font-size:13.5px;line-height:13.5px;color:#1c1c1c;font-weight:700;letter-spacing:0.4px;">Oil</span>
<span class="t" style="left:1576.7px;top:451px;font-size:14px;line-height:14px;color:#262626;letter-spacing:-0.19px;">The South</span>
<span class="t" style="left:1575.9px;top:465.9px;font-size:14px;line-height:14px;color:#262626;letter-spacing:-0.57px;">Reserve</span>
<span class="t" style="left:1636.9px;top:465.9px;font-size:14px;line-height:14px;color:#262626;letter-spacing:-0.82px;">99</span>
<div class="r" style="left:1676px;top:469px;width:59.2px;height:8px;background:#000;"></div>
<span class="t" style="left:1576.4px;top:482.1px;font-size:14px;line-height:14px;color:#262626;letter-spacing:-0.25px;">Quality</span>
<span class="t" style="left:1636.9px;top:482.1px;font-size:14px;line-height:14px;color:#262626;letter-spacing:-0.82px;">86</span>
<div class="r" style="left:1676px;top:485.2px;width:60px;height:7.8px;background:#e8f5f2;"></div><div class="r" style="left:1676px;top:485.2px;width:52.2px;height:7.8px;background:#0b6b4f;"></div>
<span class="t" style="left:1577px;top:498.1px;font-size:14px;line-height:14px;color:#262626;letter-spacing:-0.29px;">Value</span>
<span class="t" style="left:1636.5px;top:498.1px;font-size:14px;line-height:14px;color:#262626;letter-spacing:-0.06px;">13 021 470</span>
<span class="t" style="left:1492.4px;top:519.2px;font-size:14px;line-height:14px;color:#262626;letter-spacing:-0.01px;">Leading bid:</span>
<div class="r" style="left:1571.8px;top:518.2px;width:16.4px;height:15.8px;background:#0000f2;"></div>
<span class="t" style="left:1591.9px;top:519.2px;font-size:14px;line-height:14px;color:#262626;letter-spacing:-0.22px;">Lynch Enterprises</span>
<span class="t" style="left:1748.2px;top:519.2px;font-size:14px;line-height:14px;color:#262626;letter-spacing:-0.06px;">13 021 470</span>
<svg class="r" style="left:1790px;top:430px" width="32" height="32" viewBox="1790 430 32 32"><path d="M1807 433.6 A12.4 12.4 0 1 1 1795 440.5" fill="none" stroke="#666" stroke-width="2.1"/></svg>
<span class="t" style="left:1802.6px;top:439.4px;font-size:13.5px;line-height:13.5px;color:#333;">3</span>
<svg class="r" style="left:1794px;top:472px" width="17" height="20" viewBox="0 0 17 20"><path d="M8.3 1 L15.8 19 L8.3 15 L0.8 19 Z" fill="#757575"/></svg>
<div class="r" style="left:1503px;top:765px;width:18px;height:18px;border-radius:2px;background:#12958a"></div>
<svg class="r" style="left:1503px;top:765px" width="18" height="18" viewBox="0 0 18 18"><path d="M3.5 9.3 L7.3 13 L14.8 5.3" fill="none" stroke="#fff" stroke-width="2"/></svg>
<span class="t" style="left:1533px;top:767.1px;font-size:14px;line-height:14px;color:#262626;letter-spacing:-0.04px;">Auto-open on new auctions</span>
<div class="r" style="left:1864px;top:0;width:56px;height:1080px;background:#546e7a;box-shadow:-2px 0 5px rgba(0,0,0,.55)"></div>
<svg class="r" style="left:1864px;top:0" width="56" height="1080" viewBox="1864 0 56 1080"><rect x="1870" y="35" width="36" height="3" fill="#cfd8dc"/><path d="M1884 33.5 L1886 22 C1882 19 1879.5 14 1879 8 C1879 6 1882 6 1882.3 8 C1883 13 1885 16.5 1889 19.5 L1894 20.5 C1897 22 1900 28 1902.5 33.5 Z" fill="#a9dba9"/><circle cx="1892" cy="13" r="4.6" fill="#fbd76b"/><rect x="1870.5" y="2" width="3.4" height="9.5" rx="1" fill="#d8b4e8" transform="rotate(20 1872 6.5)"/><rect x="1874" y="6.5" width="5" height="1.2" fill="#e0a070" transform="rotate(25 1874 6.5)"/><path d="M1870.5 66 h4 v-2 h15 v2 h3.5 v27 h-22.5z" fill="#c5e1fb"/><g stroke="#7da3d8" stroke-width="1"><path d="M1874 68.5 h4 M1880 68.5 h4 M1886 68.5 h4"/><path d="M1874 71.5 h4 M1880 71.5 h4 M1886 71.5 h4"/><path d="M1874 74.5 h4 M1880 74.5 h4 M1886 74.5 h4"/><path d="M1874 77.5 h4 M1880 77.5 h4 M1886 77.5 h4"/><path d="M1874 80.5 h4 M1880 80.5 h4 M1886 80.5 h4"/><path d="M1874 83.5 h4 M1880 83.5 h4 M1886 83.5 h4"/><path d="M1874 86.5 h4 M1880 86.5 h4 M1886 86.5 h4"/><path d="M1874 89.5 h4 M1880 89.5 h4 M1886 89.5 h4"/></g><path d="M1889 77.5 h3 v-2 h10 v2 h3 v20.5 h-16z" fill="#8fb0ec"/><g stroke="#4a74c4" stroke-width="1.1"><path d="M1892 79.5 h4 M1898 79.5 h4"/><path d="M1892 82.6 h4 M1898 82.6 h4"/><path d="M1892 85.7 h4 M1898 85.7 h4"/><path d="M1892 88.8 h4 M1898 88.8 h4"/><path d="M1892 91.9 h4 M1898 91.9 h4"/><path d="M1892 95 h4 M1898 95 h4"/></g><path d="M1870 140 L1886 123 Q1887 122 1889 122 L1897 122.5 Q1899 123 1899 125 L1899 133 L1883 150 Z" fill="#f3c86b"/><path d="M1875.5 144 L1892 127 Q1893 126 1895 126 L1903.5 127 Q1905.5 127.5 1905.5 129.5 L1905 139 L1889 158 Z" fill="#f7d383" stroke="#d9aa4a" stroke-width=".8"/><circle cx="1896" cy="125.5" r="1.7" fill="#8a6a2a"/><circle cx="1902" cy="131.5" r="1.8" fill="#8a6a2a"/><rect x="1871" y="183" width="34" height="33" rx="2" fill="#c5e1fb"/><circle cx="1881.7" cy="199.4" r="6.3" fill="#86abe9" stroke="#4a74c4" stroke-width=".8"/><path d="M1881.7 199.4 v-6.3 a6.3 6.3 0 0 1 6.3 6.3z" fill="#ec5f5f" stroke="#c0392b" stroke-width=".6"/><path d="M1891 194 h10 M1891 198.3 h10 M1891 202.2 h10 M1891 206 h6" stroke="#4a74c4" stroke-width="1.1"/><ellipse cx="1887.5" cy="245.3" rx="7.5" ry="3.8" fill="#aebccb"/><ellipse cx="1888" cy="257" rx="14" ry="6" fill="#ffffff"/><ellipse cx="1887.8" cy="271.4" rx="18" ry="6.5" fill="#aebccb"/><polygon points="1869.5,331.7 1887.8,323.7 1906,331.7 1887.8,339.2" fill="#e1ebf2"/><polygon points="1871.5,320 1887.8,312.5 1904,320 1887.8,328.5" fill="#8ab4f8"/><polygon points="1869.5,309.4 1887.8,301 1906,309.4 1887.8,318" fill="#a2d99f"/><polygon points="1869,366.7 1881,362.2 1894,366.7 1906.7,362.2 1906.7,392.8 1894,397.2 1881,392.8 1869,397.2" fill="#fbe29a" stroke="#e8c76a" stroke-width=".8"/><polygon points="1881,362.2 1894,366.7 1894,397.2 1881,392.8" fill="#fffdf3"/><path d="M1873 370 l5 -1.5 l3 2 l-2 4 l2 3 l-1 6 l-2.5 4 l-2 -6 l-1.5 -4 l1.5 -3z M1886 369 l5 -.5 l3 1.5 l4 -1.5 l4 3.5 l-1 5 l-3 1 l-1 4 l-3 -3 l-1 5 l-2.5 4 l-2 -7 l-3 -4 z M1898.5 386 l3 .5 l0 3 l-2.5 1z" fill="#c9a33f"/><path d="M1872.4 439.5 v17.5 M1893.6 437 v17" stroke="#8fd4a8" stroke-width=".8"/><path d="M1882.5 426 v23.5 M1903.2 422 v20" stroke="#e57373" stroke-width=".8"/><rect x="1869.4" y="442.8" width="6.1" height="12.2" rx=".8" fill="#a7e3bd"/><rect x="1879" y="429.4" width="7" height="16.6" rx=".8" fill="#f48a8a"/><rect x="1890.5" y="440.5" width="6.2" height="10.5" rx=".8" fill="#a7e3bd"/><rect x="1900" y="424" width="6.4" height="15.4" rx=".8" fill="#f48a8a"/><polygon points="1875.5,487.2 1901,487.2 1906,510.5 1870,510.5" fill="#aebfd8"/><rect x="1870" y="510.5" width="36" height="4.5" fill="#98aac4"/><text x="1887.8" y="505" font-family="Liberation Sans, sans-serif" font-size="18.5" font-weight="400" fill="#fff" stroke="#fff" stroke-width=".25" text-anchor="middle">$</text><path d="M1874.4 542.8 h26.9 v28 l-6.5 6.4 h-20.4z" fill="#c9e3fb"/><path d="M1894.8 577.2 v-6.4 h6.5z" fill="#f4faff" stroke="#9fb7cf" stroke-width=".6"/><path d="M1880 551.5 h3 M1885 551.5 h11.5 M1880 556.3 h3 M1885 556.3 h11.5 M1880 561.3 h3 M1885 561.3 h11.5 M1880 566.3 h3 M1885 566.3 h11.5" stroke="#5c7a99" stroke-width="1.1"/><rect x="1873.3" y="602.8" width="4" height="34.4" fill="#5a89d0"/><rect x="1876.7" y="602.8" width="26.6" height="34.4" fill="#8ab4f0"/><circle cx="1890" cy="616" r="4.1" fill="#fff"/><path d="M1883.7 627 a6.3 5.5 0 0 1 12.6 0z" fill="#fff"/><path d="M1870.5 687.8 L1888 677.6" stroke="#f0a878" stroke-width="3.4" stroke-linecap="round"/><g transform="rotate(-32 1894.4 673.3)"><rect x="1888" y="664.5" width="12.8" height="17.6" rx="3" fill="#fbc49a" stroke="#d98a5a" stroke-width="1.2"/></g><path d="M1887.5 696 h17.5" stroke="#f0a070" stroke-width="2.6" stroke-linecap="round"/><path d="M1879 722.8 h26 v29.5 a4 4 0 0 1 -4 4.5 h-3.5 v-7.3 h-18.5z" fill="#ffffff"/><path d="M1871 749.5 h25.5 a2 2 0 0 1 2 2 v5.3 h-23 a4.5 4.5 0 0 1 -4.5 -4.5z" fill="#e1e9f2"/><polygon points="1869.4,786.7 1881.7,782.8 1894,787.2 1906.7,782.8 1906.7,812.8 1894,817.2 1881.7,812.8 1869.4,817.2" fill="#fde69a" stroke="#e8c76a" stroke-width=".8"/><polygon points="1881.7,782.8 1894,787.2 1894,817.2 1881.7,812.8" fill="#fffef8"/></svg>
</div>
</body></html>
